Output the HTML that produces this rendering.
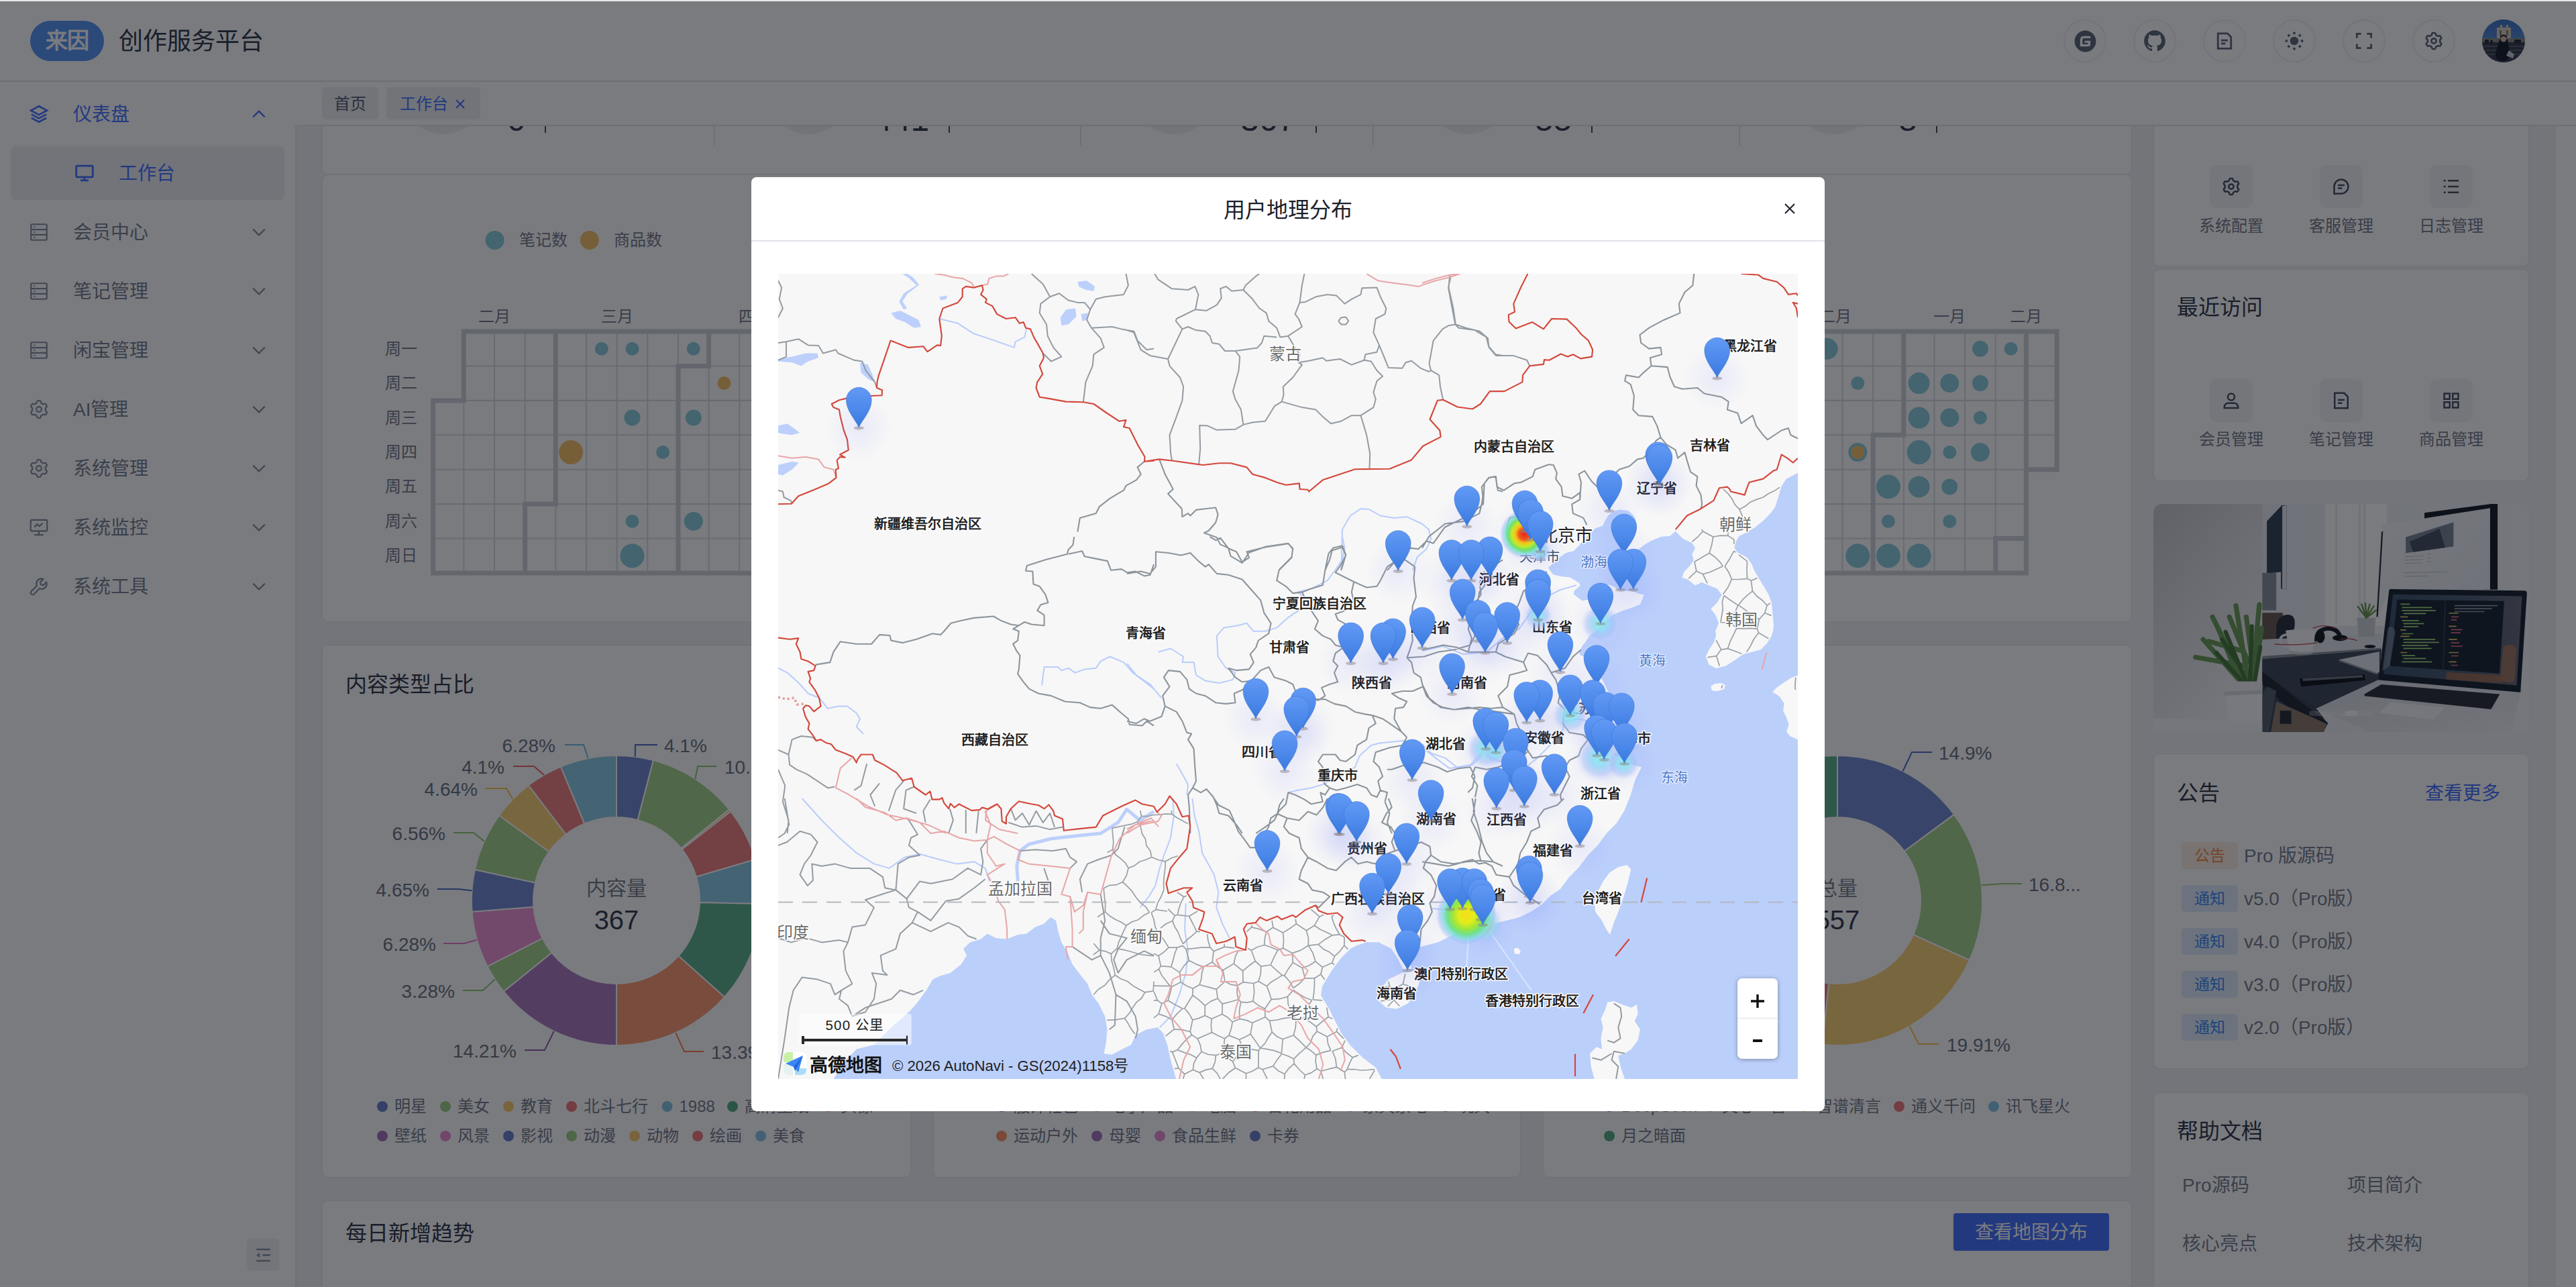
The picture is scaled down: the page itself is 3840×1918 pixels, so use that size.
<!DOCTYPE html><html lang="zh-CN"><head><meta charset="utf-8"><title>创作服务平台</title><style>

*{box-sizing:border-box;margin:0;padding:0}
html,body{width:3840px;height:1918px;overflow:hidden;background:#fff}
body{font-family:"Liberation Sans",sans-serif;position:relative;color:#1d2129}
.a{position:absolute}
.t{position:absolute;white-space:nowrap}
svg{position:absolute;overflow:visible}

</style></head><body>
<div class="a" style="left:0px;top:0px;width:3840px;height:1918px;background:#ffffff;"></div>
<div class="a" style="left:440px;top:186px;width:3370px;height:1732px;background:#f3f3f6;"></div>
<div class="a" style="left:481px;top:100px;width:2696px;height:159px;background:#ffffff;border-radius:8px;box-shadow:0 0 0 2px #ebecef"></div>
<div class="a" style="left:599px;top:76px;width:124px;height:124px;background:#f0f1f4;border-radius:50%"></div>
<div class="a" style="left:1143px;top:76px;width:124px;height:124px;background:#f0f1f4;border-radius:50%"></div>
<div class="a" style="left:1688px;top:76px;width:124px;height:124px;background:#f0f1f4;border-radius:50%"></div>
<div class="a" style="left:2126px;top:76px;width:124px;height:124px;background:#f0f1f4;border-radius:50%"></div>
<div class="a" style="left:2672px;top:76px;width:124px;height:124px;background:#f0f1f4;border-radius:50%"></div>
<div class="t" style="left:756px;top:153.0px;font-size:50px;line-height:50px;color:#363d4f;font-weight:500;">0</div>
<div class="a" style="left:812px;top:160px;width:2px;height:38px;background:#4a5262;"></div>
<div class="t" style="left:1302px;top:153.0px;font-size:50px;line-height:50px;color:#363d4f;font-weight:500;">441</div>
<div class="a" style="left:1414px;top:160px;width:2px;height:38px;background:#4a5262;"></div>
<div class="t" style="left:1849px;top:153.0px;font-size:50px;line-height:50px;color:#363d4f;font-weight:500;">367</div>
<div class="a" style="left:1961px;top:160px;width:2px;height:38px;background:#4a5262;"></div>
<div class="t" style="left:2288px;top:153.0px;font-size:50px;line-height:50px;color:#363d4f;font-weight:500;">55</div>
<div class="a" style="left:2372px;top:160px;width:2px;height:38px;background:#4a5262;"></div>
<div class="t" style="left:2830px;top:153.0px;font-size:50px;line-height:50px;color:#363d4f;font-weight:500;">8</div>
<div class="a" style="left:2886px;top:160px;width:2px;height:38px;background:#4a5262;"></div>
<div class="a" style="left:1064px;top:150px;width:2px;height:67px;background:#e6e7eb;"></div>
<div class="a" style="left:1610px;top:150px;width:2px;height:67px;background:#e6e7eb;"></div>
<div class="a" style="left:2046px;top:150px;width:2px;height:67px;background:#e6e7eb;"></div>
<div class="a" style="left:2592px;top:150px;width:2px;height:67px;background:#e6e7eb;"></div>
<div class="a" style="left:481px;top:261px;width:2696px;height:665px;background:#ffffff;border-radius:8px;box-shadow:0 0 0 2px #ebecef"></div>
<svg style="left:0;top:0" width="3840" height="1918" viewBox="0 0 3840 1918"><path d="M645.6 596.9h45.67v51.43h-45.67zM645.6 648.3h45.67v51.43h-45.67zM645.6 699.7h45.67v51.43h-45.67zM645.6 751.1h45.67v51.43h-45.67zM645.6 802.6h45.67v51.43h-45.67zM691.3 494.0h45.67v51.43h-45.67zM691.3 545.4h45.67v51.43h-45.67zM691.3 596.9h45.67v51.43h-45.67zM691.3 648.3h45.67v51.43h-45.67zM691.3 699.7h45.67v51.43h-45.67zM691.3 751.1h45.67v51.43h-45.67zM691.3 802.6h45.67v51.43h-45.67zM736.9 494.0h45.67v51.43h-45.67zM736.9 545.4h45.67v51.43h-45.67zM736.9 596.9h45.67v51.43h-45.67zM736.9 648.3h45.67v51.43h-45.67zM736.9 699.7h45.67v51.43h-45.67zM736.9 751.1h45.67v51.43h-45.67zM736.9 802.6h45.67v51.43h-45.67zM782.6 494.0h45.67v51.43h-45.67zM782.6 545.4h45.67v51.43h-45.67zM782.6 596.9h45.67v51.43h-45.67zM782.6 648.3h45.67v51.43h-45.67zM782.6 699.7h45.67v51.43h-45.67zM782.6 751.1h45.67v51.43h-45.67zM782.6 802.6h45.67v51.43h-45.67zM828.3 494.0h45.67v51.43h-45.67zM828.3 545.4h45.67v51.43h-45.67zM828.3 596.9h45.67v51.43h-45.67zM828.3 648.3h45.67v51.43h-45.67zM828.3 699.7h45.67v51.43h-45.67zM828.3 751.1h45.67v51.43h-45.67zM828.3 802.6h45.67v51.43h-45.67zM874.0 494.0h45.67v51.43h-45.67zM874.0 545.4h45.67v51.43h-45.67zM874.0 596.9h45.67v51.43h-45.67zM874.0 648.3h45.67v51.43h-45.67zM874.0 699.7h45.67v51.43h-45.67zM874.0 751.1h45.67v51.43h-45.67zM874.0 802.6h45.67v51.43h-45.67zM919.6 494.0h45.67v51.43h-45.67zM919.6 545.4h45.67v51.43h-45.67zM919.6 596.9h45.67v51.43h-45.67zM919.6 648.3h45.67v51.43h-45.67zM919.6 699.7h45.67v51.43h-45.67zM919.6 751.1h45.67v51.43h-45.67zM919.6 802.6h45.67v51.43h-45.67zM965.3 494.0h45.67v51.43h-45.67zM965.3 545.4h45.67v51.43h-45.67zM965.3 596.9h45.67v51.43h-45.67zM965.3 648.3h45.67v51.43h-45.67zM965.3 699.7h45.67v51.43h-45.67zM965.3 751.1h45.67v51.43h-45.67zM965.3 802.6h45.67v51.43h-45.67zM1011.0 494.0h45.67v51.43h-45.67zM1011.0 545.4h45.67v51.43h-45.67zM1011.0 596.9h45.67v51.43h-45.67zM1011.0 648.3h45.67v51.43h-45.67zM1011.0 699.7h45.67v51.43h-45.67zM1011.0 751.1h45.67v51.43h-45.67zM1011.0 802.6h45.67v51.43h-45.67zM1056.6 494.0h45.67v51.43h-45.67zM1056.6 545.4h45.67v51.43h-45.67zM1056.6 596.9h45.67v51.43h-45.67zM1056.6 648.3h45.67v51.43h-45.67zM1056.6 699.7h45.67v51.43h-45.67zM1056.6 751.1h45.67v51.43h-45.67zM1056.6 802.6h45.67v51.43h-45.67zM1102.3 494.0h45.67v51.43h-45.67zM1102.3 545.4h45.67v51.43h-45.67zM1102.3 596.9h45.67v51.43h-45.67zM1102.3 648.3h45.67v51.43h-45.67zM1102.3 699.7h45.67v51.43h-45.67zM1102.3 751.1h45.67v51.43h-45.67zM1102.3 802.6h45.67v51.43h-45.67zM1148.0 494.0h45.67v51.43h-45.67zM1148.0 545.4h45.67v51.43h-45.67zM1148.0 596.9h45.67v51.43h-45.67zM1148.0 648.3h45.67v51.43h-45.67zM1148.0 699.7h45.67v51.43h-45.67zM1148.0 751.1h45.67v51.43h-45.67zM1148.0 802.6h45.67v51.43h-45.67zM1193.6 494.0h45.67v51.43h-45.67zM1193.6 545.4h45.67v51.43h-45.67zM1193.6 596.9h45.67v51.43h-45.67zM1193.6 648.3h45.67v51.43h-45.67zM1193.6 699.7h45.67v51.43h-45.67zM1193.6 751.1h45.67v51.43h-45.67zM1193.6 802.6h45.67v51.43h-45.67zM1239.3 494.0h45.67v51.43h-45.67zM1239.3 545.4h45.67v51.43h-45.67zM1239.3 596.9h45.67v51.43h-45.67zM1239.3 648.3h45.67v51.43h-45.67zM1239.3 699.7h45.67v51.43h-45.67zM1239.3 751.1h45.67v51.43h-45.67zM1239.3 802.6h45.67v51.43h-45.67zM1285.0 494.0h45.67v51.43h-45.67zM1285.0 545.4h45.67v51.43h-45.67zM1285.0 596.9h45.67v51.43h-45.67zM1285.0 648.3h45.67v51.43h-45.67zM1285.0 699.7h45.67v51.43h-45.67zM1285.0 751.1h45.67v51.43h-45.67zM1285.0 802.6h45.67v51.43h-45.67zM1330.7 494.0h45.67v51.43h-45.67zM1330.7 545.4h45.67v51.43h-45.67zM1330.7 596.9h45.67v51.43h-45.67zM1330.7 648.3h45.67v51.43h-45.67zM1330.7 699.7h45.67v51.43h-45.67zM1330.7 751.1h45.67v51.43h-45.67zM1330.7 802.6h45.67v51.43h-45.67zM1376.3 494.0h45.67v51.43h-45.67zM1376.3 545.4h45.67v51.43h-45.67zM1376.3 596.9h45.67v51.43h-45.67zM1376.3 648.3h45.67v51.43h-45.67zM1376.3 699.7h45.67v51.43h-45.67zM1376.3 751.1h45.67v51.43h-45.67zM1376.3 802.6h45.67v51.43h-45.67zM1422.0 494.0h45.67v51.43h-45.67zM1422.0 545.4h45.67v51.43h-45.67zM1422.0 596.9h45.67v51.43h-45.67zM1422.0 648.3h45.67v51.43h-45.67zM1422.0 699.7h45.67v51.43h-45.67zM1422.0 751.1h45.67v51.43h-45.67zM1422.0 802.6h45.67v51.43h-45.67zM1467.7 494.0h45.67v51.43h-45.67zM1467.7 545.4h45.67v51.43h-45.67zM1467.7 596.9h45.67v51.43h-45.67zM1467.7 648.3h45.67v51.43h-45.67zM1467.7 699.7h45.67v51.43h-45.67zM1467.7 751.1h45.67v51.43h-45.67zM1467.7 802.6h45.67v51.43h-45.67zM1513.3 494.0h45.67v51.43h-45.67zM1513.3 545.4h45.67v51.43h-45.67zM1513.3 596.9h45.67v51.43h-45.67zM1513.3 648.3h45.67v51.43h-45.67zM1513.3 699.7h45.67v51.43h-45.67zM1513.3 751.1h45.67v51.43h-45.67zM1513.3 802.6h45.67v51.43h-45.67zM1559.0 494.0h45.67v51.43h-45.67zM1559.0 545.4h45.67v51.43h-45.67zM1559.0 596.9h45.67v51.43h-45.67zM1559.0 648.3h45.67v51.43h-45.67zM1559.0 699.7h45.67v51.43h-45.67zM1559.0 751.1h45.67v51.43h-45.67zM1559.0 802.6h45.67v51.43h-45.67zM1604.7 494.0h45.67v51.43h-45.67zM1604.7 545.4h45.67v51.43h-45.67zM1604.7 596.9h45.67v51.43h-45.67zM1604.7 648.3h45.67v51.43h-45.67zM1604.7 699.7h45.67v51.43h-45.67zM1604.7 751.1h45.67v51.43h-45.67zM1604.7 802.6h45.67v51.43h-45.67zM1650.3 494.0h45.67v51.43h-45.67zM1650.3 545.4h45.67v51.43h-45.67zM1650.3 596.9h45.67v51.43h-45.67zM1650.3 648.3h45.67v51.43h-45.67zM1650.3 699.7h45.67v51.43h-45.67zM1650.3 751.1h45.67v51.43h-45.67zM1650.3 802.6h45.67v51.43h-45.67zM1696.0 494.0h45.67v51.43h-45.67zM1696.0 545.4h45.67v51.43h-45.67zM1696.0 596.9h45.67v51.43h-45.67zM1696.0 648.3h45.67v51.43h-45.67zM1696.0 699.7h45.67v51.43h-45.67zM1696.0 751.1h45.67v51.43h-45.67zM1696.0 802.6h45.67v51.43h-45.67zM1741.7 494.0h45.67v51.43h-45.67zM1741.7 545.4h45.67v51.43h-45.67zM1741.7 596.9h45.67v51.43h-45.67zM1741.7 648.3h45.67v51.43h-45.67zM1741.7 699.7h45.67v51.43h-45.67zM1741.7 751.1h45.67v51.43h-45.67zM1741.7 802.6h45.67v51.43h-45.67zM1787.3 494.0h45.67v51.43h-45.67zM1787.3 545.4h45.67v51.43h-45.67zM1787.3 596.9h45.67v51.43h-45.67zM1787.3 648.3h45.67v51.43h-45.67zM1787.3 699.7h45.67v51.43h-45.67zM1787.3 751.1h45.67v51.43h-45.67zM1787.3 802.6h45.67v51.43h-45.67zM1833.0 494.0h45.67v51.43h-45.67zM1833.0 545.4h45.67v51.43h-45.67zM1833.0 596.9h45.67v51.43h-45.67zM1833.0 648.3h45.67v51.43h-45.67zM1833.0 699.7h45.67v51.43h-45.67zM1833.0 751.1h45.67v51.43h-45.67zM1833.0 802.6h45.67v51.43h-45.67zM1878.7 494.0h45.67v51.43h-45.67zM1878.7 545.4h45.67v51.43h-45.67zM1878.7 596.9h45.67v51.43h-45.67zM1878.7 648.3h45.67v51.43h-45.67zM1878.7 699.7h45.67v51.43h-45.67zM1878.7 751.1h45.67v51.43h-45.67zM1878.7 802.6h45.67v51.43h-45.67zM1924.4 494.0h45.67v51.43h-45.67zM1924.4 545.4h45.67v51.43h-45.67zM1924.4 596.9h45.67v51.43h-45.67zM1924.4 648.3h45.67v51.43h-45.67zM1924.4 699.7h45.67v51.43h-45.67zM1924.4 751.1h45.67v51.43h-45.67zM1924.4 802.6h45.67v51.43h-45.67zM1970.0 494.0h45.67v51.43h-45.67zM1970.0 545.4h45.67v51.43h-45.67zM1970.0 596.9h45.67v51.43h-45.67zM1970.0 648.3h45.67v51.43h-45.67zM1970.0 699.7h45.67v51.43h-45.67zM1970.0 751.1h45.67v51.43h-45.67zM1970.0 802.6h45.67v51.43h-45.67zM2015.7 494.0h45.67v51.43h-45.67zM2015.7 545.4h45.67v51.43h-45.67zM2015.7 596.9h45.67v51.43h-45.67zM2015.7 648.3h45.67v51.43h-45.67zM2015.7 699.7h45.67v51.43h-45.67zM2015.7 751.1h45.67v51.43h-45.67zM2015.7 802.6h45.67v51.43h-45.67zM2061.4 494.0h45.67v51.43h-45.67zM2061.4 545.4h45.67v51.43h-45.67zM2061.4 596.9h45.67v51.43h-45.67zM2061.4 648.3h45.67v51.43h-45.67zM2061.4 699.7h45.67v51.43h-45.67zM2061.4 751.1h45.67v51.43h-45.67zM2061.4 802.6h45.67v51.43h-45.67zM2107.0 494.0h45.67v51.43h-45.67zM2107.0 545.4h45.67v51.43h-45.67zM2107.0 596.9h45.67v51.43h-45.67zM2107.0 648.3h45.67v51.43h-45.67zM2107.0 699.7h45.67v51.43h-45.67zM2107.0 751.1h45.67v51.43h-45.67zM2107.0 802.6h45.67v51.43h-45.67zM2152.7 494.0h45.67v51.43h-45.67zM2152.7 545.4h45.67v51.43h-45.67zM2152.7 596.9h45.67v51.43h-45.67zM2152.7 648.3h45.67v51.43h-45.67zM2152.7 699.7h45.67v51.43h-45.67zM2152.7 751.1h45.67v51.43h-45.67zM2152.7 802.6h45.67v51.43h-45.67zM2198.4 494.0h45.67v51.43h-45.67zM2198.4 545.4h45.67v51.43h-45.67zM2198.4 596.9h45.67v51.43h-45.67zM2198.4 648.3h45.67v51.43h-45.67zM2198.4 699.7h45.67v51.43h-45.67zM2198.4 751.1h45.67v51.43h-45.67zM2198.4 802.6h45.67v51.43h-45.67zM2244.1 494.0h45.67v51.43h-45.67zM2244.1 545.4h45.67v51.43h-45.67zM2244.1 596.9h45.67v51.43h-45.67zM2244.1 648.3h45.67v51.43h-45.67zM2244.1 699.7h45.67v51.43h-45.67zM2244.1 751.1h45.67v51.43h-45.67zM2244.1 802.6h45.67v51.43h-45.67zM2289.7 494.0h45.67v51.43h-45.67zM2289.7 545.4h45.67v51.43h-45.67zM2289.7 596.9h45.67v51.43h-45.67zM2289.7 648.3h45.67v51.43h-45.67zM2289.7 699.7h45.67v51.43h-45.67zM2289.7 751.1h45.67v51.43h-45.67zM2289.7 802.6h45.67v51.43h-45.67zM2335.4 494.0h45.67v51.43h-45.67zM2335.4 545.4h45.67v51.43h-45.67zM2335.4 596.9h45.67v51.43h-45.67zM2335.4 648.3h45.67v51.43h-45.67zM2335.4 699.7h45.67v51.43h-45.67zM2335.4 751.1h45.67v51.43h-45.67zM2335.4 802.6h45.67v51.43h-45.67zM2381.1 494.0h45.67v51.43h-45.67zM2381.1 545.4h45.67v51.43h-45.67zM2381.1 596.9h45.67v51.43h-45.67zM2381.1 648.3h45.67v51.43h-45.67zM2381.1 699.7h45.67v51.43h-45.67zM2381.1 751.1h45.67v51.43h-45.67zM2381.1 802.6h45.67v51.43h-45.67zM2426.7 494.0h45.67v51.43h-45.67zM2426.7 545.4h45.67v51.43h-45.67zM2426.7 596.9h45.67v51.43h-45.67zM2426.7 648.3h45.67v51.43h-45.67zM2426.7 699.7h45.67v51.43h-45.67zM2426.7 751.1h45.67v51.43h-45.67zM2426.7 802.6h45.67v51.43h-45.67zM2472.4 494.0h45.67v51.43h-45.67zM2472.4 545.4h45.67v51.43h-45.67zM2472.4 596.9h45.67v51.43h-45.67zM2472.4 648.3h45.67v51.43h-45.67zM2472.4 699.7h45.67v51.43h-45.67zM2472.4 751.1h45.67v51.43h-45.67zM2472.4 802.6h45.67v51.43h-45.67zM2518.1 494.0h45.67v51.43h-45.67zM2518.1 545.4h45.67v51.43h-45.67zM2518.1 596.9h45.67v51.43h-45.67zM2518.1 648.3h45.67v51.43h-45.67zM2518.1 699.7h45.67v51.43h-45.67zM2518.1 751.1h45.67v51.43h-45.67zM2518.1 802.6h45.67v51.43h-45.67zM2563.7 494.0h45.67v51.43h-45.67zM2563.7 545.4h45.67v51.43h-45.67zM2563.7 596.9h45.67v51.43h-45.67zM2563.7 648.3h45.67v51.43h-45.67zM2563.7 699.7h45.67v51.43h-45.67zM2563.7 751.1h45.67v51.43h-45.67zM2563.7 802.6h45.67v51.43h-45.67zM2609.4 494.0h45.67v51.43h-45.67zM2609.4 545.4h45.67v51.43h-45.67zM2609.4 596.9h45.67v51.43h-45.67zM2609.4 648.3h45.67v51.43h-45.67zM2609.4 699.7h45.67v51.43h-45.67zM2609.4 751.1h45.67v51.43h-45.67zM2609.4 802.6h45.67v51.43h-45.67zM2655.1 494.0h45.67v51.43h-45.67zM2655.1 545.4h45.67v51.43h-45.67zM2655.1 596.9h45.67v51.43h-45.67zM2655.1 648.3h45.67v51.43h-45.67zM2655.1 699.7h45.67v51.43h-45.67zM2655.1 751.1h45.67v51.43h-45.67zM2655.1 802.6h45.67v51.43h-45.67zM2700.8 494.0h45.67v51.43h-45.67zM2700.8 545.4h45.67v51.43h-45.67zM2700.8 596.9h45.67v51.43h-45.67zM2700.8 648.3h45.67v51.43h-45.67zM2700.8 699.7h45.67v51.43h-45.67zM2700.8 751.1h45.67v51.43h-45.67zM2700.8 802.6h45.67v51.43h-45.67zM2746.4 494.0h45.67v51.43h-45.67zM2746.4 545.4h45.67v51.43h-45.67zM2746.4 596.9h45.67v51.43h-45.67zM2746.4 648.3h45.67v51.43h-45.67zM2746.4 699.7h45.67v51.43h-45.67zM2746.4 751.1h45.67v51.43h-45.67zM2746.4 802.6h45.67v51.43h-45.67zM2792.1 494.0h45.67v51.43h-45.67zM2792.1 545.4h45.67v51.43h-45.67zM2792.1 596.9h45.67v51.43h-45.67zM2792.1 648.3h45.67v51.43h-45.67zM2792.1 699.7h45.67v51.43h-45.67zM2792.1 751.1h45.67v51.43h-45.67zM2792.1 802.6h45.67v51.43h-45.67zM2837.8 494.0h45.67v51.43h-45.67zM2837.8 545.4h45.67v51.43h-45.67zM2837.8 596.9h45.67v51.43h-45.67zM2837.8 648.3h45.67v51.43h-45.67zM2837.8 699.7h45.67v51.43h-45.67zM2837.8 751.1h45.67v51.43h-45.67zM2837.8 802.6h45.67v51.43h-45.67zM2883.4 494.0h45.67v51.43h-45.67zM2883.4 545.4h45.67v51.43h-45.67zM2883.4 596.9h45.67v51.43h-45.67zM2883.4 648.3h45.67v51.43h-45.67zM2883.4 699.7h45.67v51.43h-45.67zM2883.4 751.1h45.67v51.43h-45.67zM2883.4 802.6h45.67v51.43h-45.67zM2929.1 494.0h45.67v51.43h-45.67zM2929.1 545.4h45.67v51.43h-45.67zM2929.1 596.9h45.67v51.43h-45.67zM2929.1 648.3h45.67v51.43h-45.67zM2929.1 699.7h45.67v51.43h-45.67zM2929.1 751.1h45.67v51.43h-45.67zM2929.1 802.6h45.67v51.43h-45.67zM2974.8 494.0h45.67v51.43h-45.67zM2974.8 545.4h45.67v51.43h-45.67zM2974.8 596.9h45.67v51.43h-45.67zM2974.8 648.3h45.67v51.43h-45.67zM2974.8 699.7h45.67v51.43h-45.67zM2974.8 751.1h45.67v51.43h-45.67zM2974.8 802.6h45.67v51.43h-45.67zM3020.4 494.0h45.67v51.43h-45.67zM3020.4 545.4h45.67v51.43h-45.67zM3020.4 596.9h45.67v51.43h-45.67zM3020.4 648.3h45.67v51.43h-45.67z" fill="none" stroke="#dcdee3" stroke-width="2"/><path d="M691.3 494.0V596.9H645.6V854.0M828.3 494.0V751.1H782.6V854.0M1056.6 494.0V545.4H1011.0V854.0M1239.3 494.0V648.3H1193.6V854.0M1422.0 494.0V802.6H1376.3V854.0M1650.3 494.0V545.4H1604.7V854.0M1833.0 494.0V699.7H1787.3V854.0M2015.7 494.0V854.0M2244.1 494.0V596.9H2198.4V854.0M2426.7 494.0V751.1H2381.1V854.0M2609.4 494.0V854.0M2837.8 494.0V648.3H2792.1V854.0M3020.4 494.0V802.6H2974.8V854.0M3066.1 494.0V699.7H3020.4V854.0M691.3 494.0H3066.1M645.6 854.0H3020.4" fill="none" stroke="#d0d3d9" stroke-width="7" stroke-linecap="square" stroke-linejoin="miter"/><circle cx="896.8" cy="519.7" r="10.0" fill="#8fd0de"/><circle cx="942.5" cy="519.7" r="10.0" fill="#8fd0de"/><circle cx="1033.8" cy="519.7" r="10.0" fill="#8fd0de"/><circle cx="1079.5" cy="571.1" r="10.0" fill="#f7c46c"/><circle cx="942.5" cy="622.6" r="12.0" fill="#8fd0de"/><circle cx="1033.8" cy="622.6" r="12.0" fill="#8fd0de"/><circle cx="851.1" cy="674.0" r="18.0" fill="#f7c46c"/><circle cx="988.1" cy="674.0" r="10.0" fill="#8fd0de"/><circle cx="942.5" cy="776.9" r="10.0" fill="#8fd0de"/><circle cx="1033.8" cy="776.9" r="14.0" fill="#8fd0de"/><circle cx="942.5" cy="828.3" r="18.0" fill="#8fd0de"/><circle cx="2723.6" cy="519.7" r="16.0" fill="#8fd0de"/><circle cx="2951.9" cy="519.7" r="12.0" fill="#8fd0de"/><circle cx="2997.6" cy="519.7" r="10.0" fill="#8fd0de"/><circle cx="2769.3" cy="571.1" r="10.0" fill="#8fd0de"/><circle cx="2860.6" cy="571.1" r="16.0" fill="#8fd0de"/><circle cx="2906.3" cy="571.1" r="14.0" fill="#8fd0de"/><circle cx="2951.9" cy="571.1" r="12.0" fill="#8fd0de"/><circle cx="2860.6" cy="622.6" r="16.0" fill="#8fd0de"/><circle cx="2906.3" cy="622.6" r="14.0" fill="#8fd0de"/><circle cx="2951.9" cy="622.6" r="10.0" fill="#8fd0de"/><circle cx="2769.3" cy="674.0" r="14.0" fill="#8fd0de"/><circle cx="2769.3" cy="674.0" r="10.0" fill="#f7c46c"/><circle cx="2860.6" cy="674.0" r="18.0" fill="#8fd0de"/><circle cx="2906.3" cy="674.0" r="10.0" fill="#8fd0de"/><circle cx="2951.9" cy="674.0" r="14.0" fill="#8fd0de"/><circle cx="2814.9" cy="725.4" r="18.0" fill="#8fd0de"/><circle cx="2860.6" cy="725.4" r="16.0" fill="#8fd0de"/><circle cx="2906.3" cy="725.4" r="12.0" fill="#8fd0de"/><circle cx="2814.9" cy="776.9" r="10.0" fill="#8fd0de"/><circle cx="2906.3" cy="776.9" r="10.0" fill="#8fd0de"/><circle cx="2769.3" cy="828.3" r="18.0" fill="#8fd0de"/><circle cx="2814.9" cy="828.3" r="18.0" fill="#8fd0de"/><circle cx="2860.6" cy="828.3" r="18.0" fill="#8fd0de"/><circle cx="2677.9" cy="622.6" r="14.0" fill="#8fd0de"/><circle cx="2677.9" cy="776.9" r="12.0" fill="#8fd0de"/><circle cx="737.6" cy="358" r="14" fill="#8fd0de"/><circle cx="878.8" cy="358" r="14" fill="#f7c46c"/></svg><div class="t" style="left:774px;top:341.0px;font-size:24px;line-height:34px;color:#77808e">笔记数</div><div class="t" style="left:915px;top:341.0px;font-size:24px;line-height:34px;color:#77808e">商品数</div><div class="t" style="right:3218px;top:502.71500000000003px;font-size:24px;line-height:34px;color:#77808e">周一</div><div class="t" style="right:3218px;top:554.145px;font-size:24px;line-height:34px;color:#77808e">周二</div><div class="t" style="right:3218px;top:605.575px;font-size:24px;line-height:34px;color:#77808e">周三</div><div class="t" style="right:3218px;top:657.005px;font-size:24px;line-height:34px;color:#77808e">周四</div><div class="t" style="right:3218px;top:708.435px;font-size:24px;line-height:34px;color:#77808e">周五</div><div class="t" style="right:3218px;top:759.865px;font-size:24px;line-height:34px;color:#77808e">周六</div><div class="t" style="right:3218px;top:811.2950000000001px;font-size:24px;line-height:34px;color:#77808e">周日</div><div class="t" style="left:237px;width:1000px;text-align:center;top:455.0px;font-size:24px;line-height:34px;color:#77808e">二月</div><div class="t" style="left:420px;width:1000px;text-align:center;top:455.0px;font-size:24px;line-height:34px;color:#77808e">三月</div><div class="t" style="left:625px;width:1000px;text-align:center;top:455.0px;font-size:24px;line-height:34px;color:#77808e">四月</div><div class="t" style="left:808px;width:1000px;text-align:center;top:455.0px;font-size:24px;line-height:34px;color:#77808e">五月</div><div class="t" style="left:1013px;width:1000px;text-align:center;top:455.0px;font-size:24px;line-height:34px;color:#77808e">六月</div><div class="t" style="left:1219px;width:1000px;text-align:center;top:455.0px;font-size:24px;line-height:34px;color:#77808e">七月</div><div class="t" style="left:1402px;width:1000px;text-align:center;top:455.0px;font-size:24px;line-height:34px;color:#77808e">八月</div><div class="t" style="left:1630px;width:1000px;text-align:center;top:455.0px;font-size:24px;line-height:34px;color:#77808e">九月</div><div class="t" style="left:1813px;width:1000px;text-align:center;top:455.0px;font-size:24px;line-height:34px;color:#77808e">十月</div><div class="t" style="left:1995px;width:1000px;text-align:center;top:455.0px;font-size:24px;line-height:34px;color:#77808e">十一月</div><div class="t" style="left:2224px;width:1000px;text-align:center;top:455.0px;font-size:24px;line-height:34px;color:#77808e">十二月</div><div class="t" style="left:2406px;width:1000px;text-align:center;top:455.0px;font-size:24px;line-height:34px;color:#77808e">一月</div><div class="t" style="left:2520px;width:1000px;text-align:center;top:455.0px;font-size:24px;line-height:34px;color:#77808e">二月</div>
<div class="a" style="left:481px;top:962px;width:876px;height:792px;background:#ffffff;border-radius:8px;box-shadow:0 0 0 2px #ebecef"></div>
<div class="a" style="left:1392px;top:962px;width:874px;height:792px;background:#ffffff;border-radius:8px;box-shadow:0 0 0 2px #ebecef"></div>
<div class="a" style="left:2301px;top:962px;width:876px;height:792px;background:#ffffff;border-radius:8px;box-shadow:0 0 0 2px #ebecef"></div>
<svg style="left:0;top:0" width="3840" height="1918" viewBox="0 0 3840 1918"><path d="M919.0 1126.0A216 216 0 0 1 974.0 1133.1L950.6 1222.1A124 124 0 0 0 919.0 1218.0Z" fill="#5470c6" fill-opacity=".8" stroke="#fff" stroke-width="2" stroke-linejoin="round"/><path d="M974.0 1133.1A216 216 0 0 1 1087.1 1206.4L1015.5 1264.2A124 124 0 0 0 950.6 1222.1Z" fill="#91cc75" fill-opacity=".8" stroke="#fff" stroke-width="2" stroke-linejoin="round"/><path d="M1087.1 1206.4A216 216 0 0 1 1089.4 1209.3L1016.8 1265.8A124 124 0 0 0 1015.5 1264.2Z" fill="#fac858" fill-opacity=".8" stroke="#fff" stroke-width="2" stroke-linejoin="round"/><path d="M1089.4 1209.3A216 216 0 0 1 1126.1 1280.7L1037.9 1306.8A124 124 0 0 0 1016.8 1265.8Z" fill="#ee6666" fill-opacity=".8" stroke="#fff" stroke-width="2" stroke-linejoin="round"/><path d="M1126.1 1280.7A216 216 0 0 1 1134.9 1347.0L1043.0 1344.9A124 124 0 0 0 1037.9 1306.8Z" fill="#73c0de" fill-opacity=".8" stroke="#fff" stroke-width="2" stroke-linejoin="round"/><path d="M1134.9 1347.0A216 216 0 0 1 1080.0 1486.0L1011.4 1424.6A124 124 0 0 0 1043.0 1344.9Z" fill="#3ba272" fill-opacity=".8" stroke="#fff" stroke-width="2" stroke-linejoin="round"/><path d="M1080.0 1486.0A216 216 0 0 1 919.0 1558.0L919.0 1466.0A124 124 0 0 0 1011.4 1424.6Z" fill="#fc8452" fill-opacity=".8" stroke="#fff" stroke-width="2" stroke-linejoin="round"/><path d="M919.0 1558.0A216 216 0 0 1 750.8 1477.5L822.4 1419.8A124 124 0 0 0 919.0 1466.0Z" fill="#9a60b4" fill-opacity=".8" stroke="#fff" stroke-width="2" stroke-linejoin="round"/><path d="M750.8 1477.5A216 216 0 0 1 726.6 1440.2L808.6 1398.4A124 124 0 0 0 822.4 1419.8Z" fill="#91cc75" fill-opacity=".8" stroke="#fff" stroke-width="2" stroke-linejoin="round"/><path d="M726.6 1440.2A216 216 0 0 1 703.6 1358.7L795.4 1351.6A124 124 0 0 0 808.6 1398.4Z" fill="#ea7ccc" fill-opacity=".8" stroke="#fff" stroke-width="2" stroke-linejoin="round"/><path d="M703.6 1358.7A216 216 0 0 1 708.0 1295.9L797.9 1315.6A124 124 0 0 0 795.4 1351.6Z" fill="#5470c6" fill-opacity=".8" stroke="#fff" stroke-width="2" stroke-linejoin="round"/><path d="M708.0 1295.9A216 216 0 0 1 744.1 1215.3L818.6 1269.2A124 124 0 0 0 797.9 1315.6Z" fill="#91cc75" fill-opacity=".8" stroke="#fff" stroke-width="2" stroke-linejoin="round"/><path d="M744.1 1215.3A216 216 0 0 1 787.9 1170.3L843.7 1243.5A124 124 0 0 0 818.6 1269.2Z" fill="#fac858" fill-opacity=".8" stroke="#fff" stroke-width="2" stroke-linejoin="round"/><path d="M787.9 1170.3A216 216 0 0 1 836.0 1142.6L871.3 1227.5A124 124 0 0 0 843.7 1243.5Z" fill="#ee6666" fill-opacity=".8" stroke="#fff" stroke-width="2" stroke-linejoin="round"/><path d="M836.0 1142.6A216 216 0 0 1 919.0 1126.0L919.0 1218.0A124 124 0 0 0 871.3 1227.5Z" fill="#73c0de" fill-opacity=".8" stroke="#fff" stroke-width="2" stroke-linejoin="round"/><path d="M946.7 1127.8L947 1110H980" fill="none" stroke="#5470c6" stroke-width="2"/><path d="M1036.5 1160.7L1040 1142H1068" fill="none" stroke="#91cc75" stroke-width="2"/><path d="M876.7 1130.2L870 1110H842" fill="none" stroke="#73c0de" stroke-width="2"/><path d="M811.0 1154.9L796 1142H765" fill="none" stroke="#ee6666" stroke-width="2"/><path d="M764.4 1191.2L755 1175H724" fill="none" stroke="#fac858" stroke-width="2"/><path d="M721.9 1253.7L706 1241H676" fill="none" stroke="#91cc75" stroke-width="2"/><path d="M703.5 1327.2L684 1325H652" fill="none" stroke="#5470c6" stroke-width="2"/><path d="M711.1 1400.6L692 1406H661" fill="none" stroke="#ea7ccc" stroke-width="2"/><path d="M737.7 1459.5L720 1476H690" fill="none" stroke="#91cc75" stroke-width="2"/><path d="M825.7 1536.8L812 1565H782" fill="none" stroke="#9a60b4" stroke-width="2"/><path d="M1007.2 1539.2L1020 1567H1049" fill="none" stroke="#fc8452" stroke-width="2"/><path d="M2739.0 1126.0A216 216 0 0 1 2912.9 1213.9L2838.9 1268.5A124 124 0 0 0 2739.0 1218.0Z" fill="#5470c6" fill-opacity=".8" stroke="#fff" stroke-width="2" stroke-linejoin="round"/><path d="M2912.9 1213.9A216 216 0 0 1 2935.9 1430.9L2852.0 1393.0A124 124 0 0 0 2838.9 1268.5Z" fill="#91cc75" fill-opacity=".8" stroke="#fff" stroke-width="2" stroke-linejoin="round"/><path d="M2935.9 1430.9A216 216 0 0 1 2716.5 1556.8L2726.1 1465.3A124 124 0 0 0 2852.0 1393.0Z" fill="#fac858" fill-opacity=".8" stroke="#fff" stroke-width="2" stroke-linejoin="round"/><path d="M2716.5 1556.8A216 216 0 0 1 2704.4 1555.2L2719.1 1464.4A124 124 0 0 0 2726.1 1465.3Z" fill="#ee6666" fill-opacity=".8" stroke="#fff" stroke-width="2" stroke-linejoin="round"/><path d="M2704.4 1555.2A216 216 0 0 1 2524.8 1369.6L2616.0 1357.9A124 124 0 0 0 2719.1 1464.4Z" fill="#73c0de" fill-opacity=".8" stroke="#fff" stroke-width="2" stroke-linejoin="round"/><path d="M2524.8 1369.6A216 216 0 0 1 2739.0 1126.0L2739.0 1218.0A124 124 0 0 0 2616.0 1357.9Z" fill="#3ba272" fill-opacity=".8" stroke="#fff" stroke-width="2" stroke-linejoin="round"/><path d="M2836.5 1149.2L2850 1121H2880" fill="none" stroke="#5470c6" stroke-width="2"/><path d="M2953.8 1319.3L2985 1317H3014" fill="none" stroke="#91cc75" stroke-width="2"/><path d="M2846.5 1529.3L2860 1556H2890" fill="none" stroke="#fac858" stroke-width="2"/><path d="M1829.0 1126.0A216 216 0 0 1 2034.4 1408.7L1946.9 1380.3A124 124 0 0 0 1829.0 1218.0Z" fill="#5470c6" fill-opacity=".8" stroke="#fff" stroke-width="2" stroke-linejoin="round"/><path d="M2034.4 1408.7A216 216 0 0 1 1829.0 1558.0L1829.0 1466.0A124 124 0 0 0 1946.9 1380.3Z" fill="#91cc75" fill-opacity=".8" stroke="#fff" stroke-width="2" stroke-linejoin="round"/><path d="M1829.0 1558.0A216 216 0 0 1 1654.3 1469.0L1728.7 1414.9A124 124 0 0 0 1829.0 1466.0Z" fill="#fac858" fill-opacity=".8" stroke="#fff" stroke-width="2" stroke-linejoin="round"/><path d="M1654.3 1469.0A216 216 0 0 1 1613.0 1342.0L1705.0 1342.0A124 124 0 0 0 1728.7 1414.9Z" fill="#ee6666" fill-opacity=".8" stroke="#fff" stroke-width="2" stroke-linejoin="round"/><path d="M1613.0 1342.0A216 216 0 0 1 1654.3 1215.0L1728.7 1269.1A124 124 0 0 0 1705.0 1342.0Z" fill="#73c0de" fill-opacity=".8" stroke="#fff" stroke-width="2" stroke-linejoin="round"/><path d="M1654.3 1215.0A216 216 0 0 1 1829.0 1126.0L1829.0 1218.0A124 124 0 0 0 1728.7 1269.1Z" fill="#3ba272" fill-opacity=".8" stroke="#fff" stroke-width="2" stroke-linejoin="round"/><circle cx="570" cy="1649" r="8" fill="#5470c6" fill-opacity=".85"/><circle cx="664" cy="1649" r="8" fill="#91cc75" fill-opacity=".85"/><circle cx="758" cy="1649" r="8" fill="#fac858" fill-opacity=".85"/><circle cx="852" cy="1649" r="8" fill="#ee6666" fill-opacity=".85"/><circle cx="994.5" cy="1649" r="8" fill="#73c0de" fill-opacity=".85"/><circle cx="1092" cy="1649" r="8" fill="#3ba272" fill-opacity=".85"/><circle cx="1235" cy="1649" r="8" fill="#fc8452" fill-opacity=".85"/><circle cx="570" cy="1693" r="8" fill="#9a60b4" fill-opacity=".85"/><circle cx="664" cy="1693" r="8" fill="#ea7ccc" fill-opacity=".85"/><circle cx="758" cy="1693" r="8" fill="#5470c6" fill-opacity=".85"/><circle cx="852" cy="1693" r="8" fill="#91cc75" fill-opacity=".85"/><circle cx="946" cy="1693" r="8" fill="#fac858" fill-opacity=".85"/><circle cx="1040" cy="1693" r="8" fill="#ee6666" fill-opacity=".85"/><circle cx="1134" cy="1693" r="8" fill="#73c0de" fill-opacity=".85"/><circle cx="1493" cy="1649" r="8" fill="#5470c6" fill-opacity=".85"/><circle cx="1635" cy="1649" r="8" fill="#91cc75" fill-opacity=".85"/><circle cx="1777" cy="1649" r="8" fill="#fac858" fill-opacity=".85"/><circle cx="1871" cy="1649" r="8" fill="#ee6666" fill-opacity=".85"/><circle cx="2013" cy="1649" r="8" fill="#73c0de" fill-opacity=".85"/><circle cx="2155" cy="1649" r="8" fill="#3ba272" fill-opacity=".85"/><circle cx="1493" cy="1693" r="8" fill="#fc8452" fill-opacity=".85"/><circle cx="1635" cy="1693" r="8" fill="#9a60b4" fill-opacity=".85"/><circle cx="1729" cy="1693" r="8" fill="#ea7ccc" fill-opacity=".85"/><circle cx="1871" cy="1693" r="8" fill="#5470c6" fill-opacity=".85"/><circle cx="2399" cy="1649" r="8" fill="#5470c6" fill-opacity=".85"/><circle cx="2549" cy="1649" r="8" fill="#91cc75" fill-opacity=".85"/><circle cx="2690" cy="1649" r="8" fill="#fac858" fill-opacity=".85"/><circle cx="2831" cy="1649" r="8" fill="#ee6666" fill-opacity=".85"/><circle cx="2972" cy="1649" r="8" fill="#73c0de" fill-opacity=".85"/><circle cx="2399" cy="1693" r="8" fill="#3ba272" fill-opacity=".85"/></svg><div class="t" style="left:990px;top:1091.5px;font-size:28px;line-height:39px;color:#6e7785;font-weight:400">4.1%</div><div class="t" style="left:1080px;top:1123.5px;font-size:28px;line-height:39px;color:#6e7785;font-weight:400">10.1%</div><div class="t" style="right:3012px;top:1091.5px;font-size:28px;line-height:39px;color:#6e7785;font-weight:400">6.28%</div><div class="t" style="right:3088px;top:1123.5px;font-size:28px;line-height:39px;color:#6e7785;font-weight:400">4.1%</div><div class="t" style="right:3128px;top:1156.5px;font-size:28px;line-height:39px;color:#6e7785;font-weight:400">4.64%</div><div class="t" style="right:3176px;top:1222.5px;font-size:28px;line-height:39px;color:#6e7785;font-weight:400">6.56%</div><div class="t" style="right:3200px;top:1306.5px;font-size:28px;line-height:39px;color:#6e7785;font-weight:400">4.65%</div><div class="t" style="right:3190px;top:1387.5px;font-size:28px;line-height:39px;color:#6e7785;font-weight:400">6.28%</div><div class="t" style="right:3162px;top:1457.5px;font-size:28px;line-height:39px;color:#6e7785;font-weight:400">3.28%</div><div class="t" style="right:3070px;top:1546.5px;font-size:28px;line-height:39px;color:#6e7785;font-weight:400">14.21%</div><div class="t" style="left:1060px;top:1548.5px;font-size:28px;line-height:39px;color:#6e7785;font-weight:400">13.39%</div><div class="t" style="left:2890px;top:1102.5px;font-size:28px;line-height:39px;color:#6e7785;font-weight:400">14.9%</div><div class="t" style="left:3024px;top:1298.5px;font-size:28px;line-height:39px;color:#6e7785;font-weight:400">16.8...</div><div class="t" style="left:2902px;top:1537.5px;font-size:28px;line-height:39px;color:#6e7785;font-weight:400">19.91%</div><div class="t" style="left:588px;top:1632.0px;font-size:24px;line-height:34px;color:#77808e;font-weight:400">明星</div><div class="t" style="left:682px;top:1632.0px;font-size:24px;line-height:34px;color:#77808e;font-weight:400">美女</div><div class="t" style="left:776px;top:1632.0px;font-size:24px;line-height:34px;color:#77808e;font-weight:400">教育</div><div class="t" style="left:870px;top:1632.0px;font-size:24px;line-height:34px;color:#77808e;font-weight:400">北斗七行</div><div class="t" style="left:1012.5px;top:1632.0px;font-size:24px;line-height:34px;color:#77808e;font-weight:400">1988</div><div class="t" style="left:1110px;top:1632.0px;font-size:24px;line-height:34px;color:#77808e;font-weight:400">高清壁纸</div><div class="t" style="left:1253px;top:1632.0px;font-size:24px;line-height:34px;color:#77808e;font-weight:400">头像</div><div class="t" style="left:588px;top:1676.0px;font-size:24px;line-height:34px;color:#77808e;font-weight:400">壁纸</div><div class="t" style="left:682px;top:1676.0px;font-size:24px;line-height:34px;color:#77808e;font-weight:400">风景</div><div class="t" style="left:776px;top:1676.0px;font-size:24px;line-height:34px;color:#77808e;font-weight:400">影视</div><div class="t" style="left:870px;top:1676.0px;font-size:24px;line-height:34px;color:#77808e;font-weight:400">动漫</div><div class="t" style="left:964px;top:1676.0px;font-size:24px;line-height:34px;color:#77808e;font-weight:400">动物</div><div class="t" style="left:1058px;top:1676.0px;font-size:24px;line-height:34px;color:#77808e;font-weight:400">绘画</div><div class="t" style="left:1152px;top:1676.0px;font-size:24px;line-height:34px;color:#77808e;font-weight:400">美食</div><div class="t" style="left:1511px;top:1632.0px;font-size:24px;line-height:34px;color:#77808e;font-weight:400">服饰鞋包</div><div class="t" style="left:1653px;top:1632.0px;font-size:24px;line-height:34px;color:#77808e;font-weight:400">电子产品</div><div class="t" style="left:1795px;top:1632.0px;font-size:24px;line-height:34px;color:#77808e;font-weight:400">电脑</div><div class="t" style="left:1889px;top:1632.0px;font-size:24px;line-height:34px;color:#77808e;font-weight:400">日化用品</div><div class="t" style="left:2031px;top:1632.0px;font-size:24px;line-height:34px;color:#77808e;font-weight:400">家具家电</div><div class="t" style="left:2173px;top:1632.0px;font-size:24px;line-height:34px;color:#77808e;font-weight:400">玩具</div><div class="t" style="left:1511px;top:1676.0px;font-size:24px;line-height:34px;color:#77808e;font-weight:400">运动户外</div><div class="t" style="left:1653px;top:1676.0px;font-size:24px;line-height:34px;color:#77808e;font-weight:400">母婴</div><div class="t" style="left:1747px;top:1676.0px;font-size:24px;line-height:34px;color:#77808e;font-weight:400">食品生鲜</div><div class="t" style="left:1889px;top:1676.0px;font-size:24px;line-height:34px;color:#77808e;font-weight:400">卡券</div><div class="t" style="left:2417px;top:1632.0px;font-size:24px;line-height:34px;color:#77808e;font-weight:400">DeepSeek</div><div class="t" style="left:2567px;top:1632.0px;font-size:24px;line-height:34px;color:#77808e;font-weight:400">文心一言</div><div class="t" style="left:2708px;top:1632.0px;font-size:24px;line-height:34px;color:#77808e;font-weight:400">智谱清言</div><div class="t" style="left:2849px;top:1632.0px;font-size:24px;line-height:34px;color:#77808e;font-weight:400">通义千问</div><div class="t" style="left:2990px;top:1632.0px;font-size:24px;line-height:34px;color:#77808e;font-weight:400">讯飞星火</div><div class="t" style="left:2417px;top:1676.0px;font-size:24px;line-height:34px;color:#77808e;font-weight:400">月之暗面</div><div class="t" style="left:419px;width:1000px;text-align:center;top:1303.0px;font-size:30px;line-height:42px;color:#7a828f;font-weight:400">内容量</div><div class="t" style="left:419px;width:1000px;text-align:center;top:1343.0px;font-size:40px;line-height:56px;color:#3a4152;font-weight:500">367</div><div class="t" style="left:1329px;width:1000px;text-align:center;top:1303.0px;font-size:30px;line-height:42px;color:#7a828f;font-weight:400">商品量</div><div class="t" style="left:1329px;width:1000px;text-align:center;top:1343.0px;font-size:40px;line-height:56px;color:#3a4152;font-weight:500">441</div><div class="t" style="left:2239px;width:1000px;text-align:center;top:1303.0px;font-size:30px;line-height:42px;color:#7a828f;font-weight:400">总量</div><div class="t" style="left:2239px;width:1000px;text-align:center;top:1343.0px;font-size:40px;line-height:56px;color:#3a4152;font-weight:500">557</div><div class="t" style="left:515px;top:997.5px;font-size:32px;line-height:45px;color:#363d4f;font-weight:500">内容类型占比</div><div class="t" style="left:1426px;top:997.5px;font-size:32px;line-height:45px;color:#363d4f;font-weight:500">商品类型占比</div><div class="t" style="left:2335px;top:997.5px;font-size:32px;line-height:45px;color:#363d4f;font-weight:500">AI模型占比</div>
<div class="a" style="left:481px;top:1790px;width:2696px;height:300px;background:#ffffff;border-radius:8px;box-shadow:0 0 0 2px #ebecef"></div>
<div class="t" style="left:515px;top:1815.5px;font-size:32px;line-height:45px;color:#363d4f;font-weight:500;">每日新增趋势</div>
<div class="a" style="left:2912px;top:1808px;width:232px;height:56px;background:#4a76ff;border-radius:4px"></div>
<div class="t" style="left:2028px;width:2000px;text-align:center;top:1816.5px;font-size:28px;line-height:39px;color:#ffffff;font-weight:400;">查看地图分布</div>
<div class="a" style="left:3211px;top:100px;width:558px;height:296px;background:#ffffff;border-radius:8px;box-shadow:0 0 0 2px #ebecef"></div>
<div class="a" style="left:3294px;top:246px;width:64px;height:64px;background:#f3f4f7;border-radius:10px"></div>
<svg style="left:3311.0px;top:263.0px;" width="30" height="30" viewBox="0 0 24 24"><g fill="none" stroke="#4b5565" stroke-width="2" stroke-linecap="butt" stroke-linejoin="miter"><path d="M12.00 2.40 L12.50 2.41 L13.00 2.45 L13.50 2.52 L13.89 3.09 L14.20 3.79 L14.44 4.50 L14.65 5.09 L15.01 5.24 L15.36 5.41 L15.70 5.59 L16.03 5.79 L16.35 6.01 L16.66 6.25 L17.28 6.14 L18.01 5.99 L18.77 5.90 L19.46 5.96 L19.77 6.36 L20.05 6.77 L20.31 7.20 L20.55 7.64 L20.77 8.10 L20.96 8.56 L20.67 9.18 L20.21 9.80 L19.72 10.36 L19.31 10.84 L19.36 11.23 L19.39 11.61 L19.40 12.00 L19.39 12.39 L19.36 12.77 L19.31 13.16 L19.72 13.64 L20.21 14.20 L20.67 14.82 L20.96 15.44 L20.77 15.90 L20.55 16.36 L20.31 16.80 L20.05 17.23 L19.77 17.64 L19.46 18.04 L18.77 18.10 L18.01 18.01 L17.28 17.86 L16.66 17.75 L16.35 17.99 L16.03 18.21 L15.70 18.41 L15.36 18.59 L15.01 18.76 L14.65 18.91 L14.44 19.50 L14.20 20.21 L13.89 20.91 L13.50 21.48 L13.00 21.55 L12.50 21.59 L12.00 21.60 L11.50 21.59 L11.00 21.55 L10.50 21.48 L10.11 20.91 L9.80 20.21 L9.56 19.50 L9.35 18.91 L8.99 18.76 L8.64 18.59 L8.30 18.41 L7.97 18.21 L7.65 17.99 L7.34 17.75 L6.72 17.86 L5.99 18.01 L5.23 18.10 L4.54 18.04 L4.23 17.64 L3.95 17.23 L3.69 16.80 L3.45 16.36 L3.23 15.90 L3.04 15.44 L3.33 14.82 L3.79 14.20 L4.28 13.64 L4.69 13.16 L4.64 12.77 L4.61 12.39 L4.60 12.00 L4.61 11.61 L4.64 11.23 L4.69 10.84 L4.28 10.36 L3.79 9.80 L3.33 9.18 L3.04 8.56 L3.23 8.10 L3.45 7.64 L3.69 7.20 L3.95 6.77 L4.23 6.36 L4.54 5.96 L5.23 5.90 L5.99 5.99 L6.72 6.14 L7.34 6.25 L7.65 6.01 L7.97 5.79 L8.30 5.59 L8.64 5.41 L8.99 5.24 L9.35 5.09 L9.56 4.50 L9.80 3.79 L10.11 3.09 L10.50 2.52 L11.00 2.45 L11.50 2.41 L12.00 2.40Z"/><circle cx="12" cy="12" r="2.9"/></g></svg>
<div class="t" style="left:2326px;width:2000px;text-align:center;top:320.0px;font-size:24px;line-height:34px;color:#77808e;font-weight:400;">系统配置</div>
<div class="a" style="left:3458px;top:246px;width:64px;height:64px;background:#f3f4f7;border-radius:10px"></div>
<svg style="left:3475.0px;top:263.0px;" width="30" height="30" viewBox="0 0 24 24"><g fill="none" stroke="#4b5565" stroke-width="2" stroke-linecap="butt" stroke-linejoin="miter"><path d="M3.6 20.6V12a8.4 8.4 0 1 1 8.4 8.4z"/><path d="M8 10.4h8M8 14h5"/></g></svg>
<div class="t" style="left:2490px;width:2000px;text-align:center;top:320.0px;font-size:24px;line-height:34px;color:#77808e;font-weight:400;">客服管理</div>
<div class="a" style="left:3622px;top:246px;width:64px;height:64px;background:#f3f4f7;border-radius:10px"></div>
<svg style="left:3639.0px;top:263.0px;" width="30" height="30" viewBox="0 0 24 24"><g fill="none" stroke="#4b5565" stroke-width="2" stroke-linecap="butt" stroke-linejoin="miter"><path d="M8 5h13M8 12h13M8 19h13"/><path d="M3 5h2.4M3 12h2.4M3 19h2.4"/></g></svg>
<div class="t" style="left:2654px;width:2000px;text-align:center;top:320.0px;font-size:24px;line-height:34px;color:#77808e;font-weight:400;">日志管理</div>
<div class="a" style="left:3211px;top:402px;width:558px;height:314px;background:#ffffff;border-radius:8px;box-shadow:0 0 0 2px #ebecef"></div>
<div class="t" style="left:3245px;top:435.5px;font-size:32px;line-height:45px;color:#363d4f;font-weight:500;">最近访问</div>
<div class="a" style="left:3294px;top:565px;width:64px;height:64px;background:#f3f4f7;border-radius:10px"></div>
<svg style="left:3311.0px;top:582.0px;" width="30" height="30" viewBox="0 0 24 24"><g fill="none" stroke="#4b5565" stroke-width="2" stroke-linecap="butt" stroke-linejoin="miter"><circle cx="12" cy="7.6" r="4"/><path d="M3.8 20.8v-1.2a4.6 4.6 0 0 1 4.6-4.6h7.2a4.6 4.6 0 0 1 4.6 4.6v1.2z"/></g></svg>
<div class="t" style="left:2326px;width:2000px;text-align:center;top:638.0px;font-size:24px;line-height:34px;color:#77808e;font-weight:400;">会员管理</div>
<div class="a" style="left:3458px;top:565px;width:64px;height:64px;background:#f3f4f7;border-radius:10px"></div>
<svg style="left:3475.0px;top:582.0px;" width="30" height="30" viewBox="0 0 24 24"><g fill="none" stroke="#4b5565" stroke-width="2" stroke-linecap="butt" stroke-linejoin="miter"><path d="M4.2 3h11.3l4.3 4.3V21H4.2z"/><path d="M8 11.2h8M8 15h5"/></g></svg>
<div class="t" style="left:2490px;width:2000px;text-align:center;top:638.0px;font-size:24px;line-height:34px;color:#77808e;font-weight:400;">笔记管理</div>
<div class="a" style="left:3622px;top:565px;width:64px;height:64px;background:#f3f4f7;border-radius:10px"></div>
<svg style="left:3639.0px;top:582.0px;" width="30" height="30" viewBox="0 0 24 24"><g fill="none" stroke="#4b5565" stroke-width="2" stroke-linecap="butt" stroke-linejoin="miter"><rect x="3.6" y="3.6" width="6.6" height="6.6"/><rect x="13.8" y="3.6" width="6.6" height="6.6"/><rect x="3.6" y="13.8" width="6.6" height="6.6"/><rect x="13.8" y="13.8" width="6.6" height="6.6"/></g></svg>
<div class="t" style="left:2654px;width:2000px;text-align:center;top:638.0px;font-size:24px;line-height:34px;color:#77808e;font-weight:400;">商品管理</div>
<svg style="left:3210px;top:751px;border-radius:13px;overflow:hidden" width="560" height="340" viewBox="0 0 560 340"><defs>
<linearGradient id="pw" x1="0" y1="0" x2=".6" y2="1"><stop offset="0" stop-color="#c9cbce"/><stop offset=".5" stop-color="#dfe1e4"/><stop offset="1" stop-color="#f4f5f7"/></linearGradient>
<linearGradient id="pw2" x1="0" y1="0" x2="1" y2="0"><stop offset="0" stop-color="#e9ecf1"/><stop offset="1" stop-color="#f4f6fa"/></linearGradient>
<linearGradient id="pscr" x1="0" y1="0" x2="1" y2="1"><stop offset="0" stop-color="#f6f8fb"/><stop offset="1" stop-color="#e9ecf2"/></linearGradient>
<linearGradient id="pbase" x1="0" y1="0" x2="1" y2="1"><stop offset="0" stop-color="#d9dce3"/><stop offset="1" stop-color="#f1f2f6"/></linearGradient>
<linearGradient id="pwall" x1="0" y1="0" x2="1" y2="0"><stop offset="0" stop-color="#3f566e"/><stop offset=".6" stop-color="#4f6178"/><stop offset="1" stop-color="#6d6f7c"/></linearGradient>
</defs>
<g transform="scale(0.27964) translate(-35,-38)">
<rect x="35" y="38" width="2010" height="1220" fill="#f0f2f6"/>
<rect x="615" y="38" width="1430" height="1220" fill="url(#pw2)"/>
<rect x="950" y="38" width="330" height="650" fill="#ffffff"/>
<path d="M1010 38v640M1135 38v640M1160 38v640" stroke="#e9ecf1" stroke-width="10"/>
<path d="M640 130L720 45L745 45L745 490L715 490L715 400L640 410Z" fill="#38485a"/>
<path d="M722 50L745 45L745 490L722 490Z" fill="#e8ebf0"/>
<rect x="615" y="405" width="75" height="200" fill="#8d949e"/>
<rect x="615" y="618" width="110" height="145" fill="#6d5f57"/>
<path d="M690 690q10-60 60-62q45 0 38 60l-10 75h-88z" fill="#2d3642"/>
<!-- monitor -->
<path d="M1480 85L1835 38L1870 38L1870 495L1800 495L1800 120L1480 130Z" fill="#1d232b"/>
<path d="M1255 150L1830 60L1830 495L1295 495L1230 640Z" fill="url(#pscr)"/>
<path d="M1255 185L1228 640" stroke="#2a323d" stroke-width="8"/>
<path d="M1380 215L1635 135L1635 265L1380 300Z" fill="#7f8a99"/>
<path d="M1400 240L1560 170L1590 270L1420 295Z" fill="#4a5564"/>
<path d="M1375 320l100 -5M1375 338l100 -5M1375 356l90 -5M1370 405l240 -6M1370 425l130 -4M1495 305l20 0M1495 325l20 0M1495 345l20 0" stroke="#c5cad3" stroke-width="4"/>
<!-- white desk -->
<path d="M615 760L1255 730L1250 815L615 866Z" fill="#e4e7ed"/>
<path d="M615 850L1250 805L1250 822L615 870Z" fill="#8a9099"/>
<!-- small plant -->
<path d="M1120 645h100l-8 100h-84z" fill="#cfd3da"/>
<g stroke="#6f9c55" stroke-width="9" stroke-linecap="round"><path d="M1170 645l-45-60M1170 645l-25-72M1170 645l-5-78M1170 645l18-72M1170 645l40-62M1170 645l52-40"/></g>
<!-- mug -->
<path d="M740 712q80-12 158 -2l-14 122q-60 12 -122 2z" fill="#fbfbfd"/>
<path d="M745 735q-40 5 -32 40q10 25 40 22" stroke="#f1f2f5" stroke-width="14" fill="none"/>
<path d="M760 820q60 14 122 2l-2 14q-60 10 -118 0z" fill="#d9dce2"/>
<!-- headphones -->
<path d="M905 770q-5-60 55-68q60-4 72 50" stroke="#1f252d" stroke-width="22" fill="none"/>
<ellipse cx="925" cy="745" rx="24" ry="34" fill="#1b2027"/><ellipse cx="1030" cy="752" rx="40" ry="16" fill="#1b2027"/>
<path d="M885 700q60-25 120 0M680 785q120 10 230 -8M1030 760q60 -10 90 8" stroke="#b8464d" stroke-width="4" fill="none"/>
<ellipse cx="1190" cy="798" rx="30" ry="9" fill="#1d232b"/>
<!-- dark desk -->
<path d="M615 866L1250 815L1240 975L905 1128L965 1210L930 1258L615 1258L615 930Z" fill="#3c4856"/>
<path d="M615 866L1250 815L1240 975L905 1128L615 935Z" fill="#414d5c"/>
<path d="M615 930L965 1205L940 1258L905 1258L615 1000Z" fill="#252d38"/>
<path d="M640 1010L690 1035L650 1258L615 1258L615 1060Z" fill="#59626f"/>
<path d="M690 1090L960 1210L940 1258L660 1258Z" fill="#8f7e6f"/>
<rect x="710" y="1140" width="60" height="70" fill="#2a3038"/>
<!-- apple keyboard -->
<path d="M1025 868L1240 825L1240 935L1228 940Z" fill="#e6e9ee"/>
<path d="M1025 868L1228 940L1228 948L1025 876Z" fill="#9ea4ad"/>
<!-- phone -->
<path d="M815 968L1160 946L1166 978L822 1012Z" fill="#151a21"/>
<path d="M830 968L1150 950L1152 962L832 982Z" fill="#6d7683"/>
<!-- laptop base -->
<path d="M900 1130L1235 975L1992 1042L1945 1258L1205 1258Z" fill="url(#pbase)"/>
<path d="M1160 1052L1250 1000L1882 1052L1835 1132L1160 1062Z" fill="#30353d"/>
<path d="M1240 1150L1300 1095L1585 1122L1530 1188Z" fill="#f6f7fa"/>
<!-- laptop screen -->
<path d="M1292 495Q1300 490 1312 492L2015 500Q2028 502 2026 520L1992 1042L1235 976Z" fill="#1f2832"/>
<path d="M1312 520L2000 530L1972 1005L1262 945Z" fill="url(#pwall)"/>
<path d="M1335 548L1905 556L1880 942L1297 902Z" fill="#1e2a35"/>
<path d="M1590 552l-10 380" stroke="#3a4652" stroke-width="6"/>
<g stroke-width="6" fill="none">
<path d="M1352 572h50M1360 590h160M1360 606h180M1368 622h120M1360 660h90M1368 676h110M1368 692h80M1360 730h60M1368 760h170M1368 776h190M1360 792h140M1368 808h150M1360 846h70M1368 862h120M1360 880h160" stroke="#a5dd84"/>
<path d="M1352 640h40M1352 710h30M1352 744h48M1352 830h36M1610 620h50M1610 690h40M1610 760h44M1610 830h52M1610 880h40" stroke="#e8cd6f"/>
<path d="M1622 640h40M1622 656h30M1622 708h60M1622 724h50M1622 778h44M1622 796h60M1622 848h40M1622 898h36" stroke="#e8708a"/>
<path d="M1640 580h230M1640 596h200M1640 612h160" stroke="#8f9aa6"/>
</g>
<path d="M1285 700q30 -20 40 20l-30 180l-40 30z" fill="#7d8ea3" opacity=".7"/>
<path d="M1900 800q40-30 70 10l-10 170q-40 25 -75 -10z" fill="#c9835a" opacity=".6"/>
<path d="M1600 935l300 18l-5 40l-300 -20z" fill="#b8734f" opacity=".7"/>
<!-- left image: wall + plant -->
<rect x="35" y="38" width="580" height="1220" fill="url(#pw)"/>
<g stroke="#6fa05a" stroke-width="26" stroke-linecap="round" fill="none">
<path d="M520 985L350 640"/><path d="M540 985L475 580"/><path d="M560 985L600 575"/><path d="M500 985L300 760"/><path d="M520 900L260 855"/><path d="M540 880L440 640"/><path d="M560 860L530 640"/><path d="M580 930L612 700"/><path d="M480 940L380 700"/><path d="M505 820L330 770"/></g>
<g stroke="#4d7c42" stroke-width="22" stroke-linecap="round" fill="none">
<path d="M530 985L420 720"/><path d="M550 985L560 690"/><path d="M510 985L370 830"/><path d="M575 985L605 800"/><path d="M495 900L400 760"/></g>
<path d="M415 985L615 985L615 1258L445 1258Z" fill="#fafbfc"/>
<path d="M415 985L615 985L615 1040L420 1045Z" fill="#f1f2f5"/>
<path d="M408 1040L615 1030L615 1050L412 1060Z" fill="#dcdee3"/>
<path d="M35 1180L615 1200L615 1258L35 1258Z" fill="#f6f7f9"/>
<!-- indicator -->
<rect x="865" y="1140" width="345" height="28" rx="14" fill="#ffffff" opacity=".28"/>
<rect x="1055" y="1140" width="68" height="28" rx="14" fill="#ffffff" opacity=".85"/>
</g>
</svg>
<div class="a" style="left:3211px;top:1124px;width:558px;height:468px;background:#ffffff;border-radius:8px;box-shadow:0 0 0 2px #ebecef"></div>
<div class="t" style="left:3245px;top:1159.5px;font-size:32px;line-height:45px;color:#363d4f;font-weight:500;">公告</div>
<div class="t" style="right:113px;top:1162.5px;font-size:28px;line-height:39px;color:#4a76ff;font-weight:400;">查看更多</div>
<div class="a" style="left:3252px;top:1255px;width:84px;height:40px;background:#fdeee2;border-radius:5px"></div>
<div class="t" style="left:2294px;width:2000px;text-align:center;top:1259.0px;font-size:23px;line-height:32px;color:#f08c4a;font-weight:400;">公告</div>
<div class="t" style="left:3345px;top:1255.5px;font-size:28px;line-height:39px;color:#7a8492;font-weight:400;">Pro 版源码</div>
<div class="a" style="left:3252px;top:1319px;width:84px;height:40px;background:#e3eefc;border-radius:5px"></div>
<div class="t" style="left:2294px;width:2000px;text-align:center;top:1323.0px;font-size:23px;line-height:32px;color:#3f8cf3;font-weight:400;">通知</div>
<div class="t" style="left:3345px;top:1319.5px;font-size:28px;line-height:39px;color:#7a8492;font-weight:400;">v5.0（Pro版）</div>
<div class="a" style="left:3252px;top:1383px;width:84px;height:40px;background:#e3eefc;border-radius:5px"></div>
<div class="t" style="left:2294px;width:2000px;text-align:center;top:1387.0px;font-size:23px;line-height:32px;color:#3f8cf3;font-weight:400;">通知</div>
<div class="t" style="left:3345px;top:1383.5px;font-size:28px;line-height:39px;color:#7a8492;font-weight:400;">v4.0（Pro版）</div>
<div class="a" style="left:3252px;top:1447px;width:84px;height:40px;background:#e3eefc;border-radius:5px"></div>
<div class="t" style="left:2294px;width:2000px;text-align:center;top:1451.0px;font-size:23px;line-height:32px;color:#3f8cf3;font-weight:400;">通知</div>
<div class="t" style="left:3345px;top:1447.5px;font-size:28px;line-height:39px;color:#7a8492;font-weight:400;">v3.0（Pro版）</div>
<div class="a" style="left:3252px;top:1511px;width:84px;height:40px;background:#e3eefc;border-radius:5px"></div>
<div class="t" style="left:2294px;width:2000px;text-align:center;top:1515.0px;font-size:23px;line-height:32px;color:#3f8cf3;font-weight:400;">通知</div>
<div class="t" style="left:3345px;top:1511.5px;font-size:28px;line-height:39px;color:#7a8492;font-weight:400;">v2.0（Pro版）</div>
<div class="a" style="left:3211px;top:1629px;width:558px;height:400px;background:#ffffff;border-radius:8px;box-shadow:0 0 0 2px #ebecef"></div>
<div class="t" style="left:3245px;top:1663.5px;font-size:32px;line-height:45px;color:#363d4f;font-weight:500;">帮助文档</div>
<div class="t" style="left:3253px;top:1746.5px;font-size:28px;line-height:39px;color:#7a8492;font-weight:400;">Pro源码</div>
<div class="t" style="left:3499px;top:1746.5px;font-size:28px;line-height:39px;color:#7a8492;font-weight:400;">项目简介</div>
<div class="t" style="left:3253px;top:1833.5px;font-size:28px;line-height:39px;color:#7a8492;font-weight:400;">核心亮点</div>
<div class="t" style="left:3499px;top:1833.5px;font-size:28px;line-height:39px;color:#7a8492;font-weight:400;">技术架构</div>
<div class="a" style="left:3810px;top:186px;width:30px;height:1732px;background:#ffffff;"></div>
<div class="a" style="left:440px;top:122px;width:3400px;height:64px;background:#ffffff;box-shadow:0 2px 0 #e6e7eb"></div>
<div class="a" style="left:480px;top:130px;width:84px;height:48px;background:#eff0f3;border-radius:6px"></div>
<div class="t" style="left:-478px;width:2000px;text-align:center;top:137.5px;font-size:24px;line-height:34px;color:#5a6473;font-weight:400;">首页</div>
<div class="a" style="left:576px;top:130px;width:140px;height:48px;background:#eff0f3;border-radius:6px"></div>
<div class="t" style="left:596px;top:137.5px;font-size:24px;line-height:34px;color:#4a76ff;font-weight:400;">工作台</div>
<svg style="left:679px;top:148px;" width="14" height="14" viewBox="0 0 14 14"><path d="M1 1l12 12M13 1l-12 12" stroke="#4a76ff" stroke-width="2" fill="none"/></svg>
<div class="a" style="left:0px;top:122px;width:440px;height:1796px;background:#ffffff;"></div>
<div class="a" style="left:440px;top:186px;width:6px;height:1732px;background:linear-gradient(90deg,#e8e9ec,#f3f3f6);"></div>
<div class="a" style="left:16px;top:218px;width:408px;height:80px;background:#eef0f4;border-radius:8px"></div>
<svg style="left:42.0px;top:154.0px;" width="32" height="32" viewBox="0 0 24 24"><g fill="none" stroke="#4a76ff" stroke-width="1.95" stroke-linecap="butt" stroke-linejoin="miter"><path d="M12 3.2 21 8 12 12.8 3 8Z"/><path d="M3.6 12.3 12 16.8 20.4 12.3"/><path d="M3.6 16.3 12 20.8 20.4 16.3"/></g></svg>
<div class="t" style="left:109px;top:150.5px;font-size:28px;line-height:39px;color:#4a76ff;font-weight:400;">仪表盘</div>
<svg style="left:371.0px;top:155.0px;" width="30" height="30" viewBox="0 0 24 24"><g fill="none" stroke="#4a76ff" stroke-width="1.7" stroke-linecap="butt" stroke-linejoin="miter"><path d="M5 15.5l7-7 7 7"/></g></svg>
<svg style="left:42.0px;top:330.0px;" width="32" height="32" viewBox="0 0 24 24"><g fill="none" stroke="#8893a2" stroke-width="1.65" stroke-linecap="butt" stroke-linejoin="miter"><rect x="3.2" y="3.2" width="17.6" height="17.6" rx="1"/><path d="M3.2 9.1h17.6M3.2 14.9h17.6"/><path d="M6.3 6.2h1.6M6.3 12h1.6M6.3 17.8h1.6" stroke-width="1.6"/></g></svg>
<div class="t" style="left:109px;top:326.5px;font-size:28px;line-height:39px;color:#7a8492;font-weight:400;">会员中心</div>
<svg style="left:371.0px;top:331.0px;" width="30" height="30" viewBox="0 0 24 24"><g fill="none" stroke="#8893a2" stroke-width="1.7" stroke-linecap="butt" stroke-linejoin="miter"><path d="M5 8.5l7 7 7-7"/></g></svg>
<svg style="left:42.0px;top:418.0px;" width="32" height="32" viewBox="0 0 24 24"><g fill="none" stroke="#8893a2" stroke-width="1.65" stroke-linecap="butt" stroke-linejoin="miter"><rect x="3.2" y="3.2" width="17.6" height="17.6" rx="1"/><path d="M3.2 9.1h17.6M3.2 14.9h17.6"/><path d="M6.3 6.2h1.6M6.3 12h1.6M6.3 17.8h1.6" stroke-width="1.6"/></g></svg>
<div class="t" style="left:109px;top:414.5px;font-size:28px;line-height:39px;color:#7a8492;font-weight:400;">笔记管理</div>
<svg style="left:371.0px;top:419.0px;" width="30" height="30" viewBox="0 0 24 24"><g fill="none" stroke="#8893a2" stroke-width="1.7" stroke-linecap="butt" stroke-linejoin="miter"><path d="M5 8.5l7 7 7-7"/></g></svg>
<svg style="left:42.0px;top:506.0px;" width="32" height="32" viewBox="0 0 24 24"><g fill="none" stroke="#8893a2" stroke-width="1.65" stroke-linecap="butt" stroke-linejoin="miter"><rect x="3.2" y="3.2" width="17.6" height="17.6" rx="1"/><path d="M3.2 9.1h17.6M3.2 14.9h17.6"/><path d="M6.3 6.2h1.6M6.3 12h1.6M6.3 17.8h1.6" stroke-width="1.6"/></g></svg>
<div class="t" style="left:109px;top:502.5px;font-size:28px;line-height:39px;color:#7a8492;font-weight:400;">闲宝管理</div>
<svg style="left:371.0px;top:507.0px;" width="30" height="30" viewBox="0 0 24 24"><g fill="none" stroke="#8893a2" stroke-width="1.7" stroke-linecap="butt" stroke-linejoin="miter"><path d="M5 8.5l7 7 7-7"/></g></svg>
<svg style="left:42.0px;top:594.0px;" width="32" height="32" viewBox="0 0 24 24"><g fill="none" stroke="#8893a2" stroke-width="1.65" stroke-linecap="butt" stroke-linejoin="miter"><path d="M12.00 2.40 L12.50 2.41 L13.00 2.45 L13.50 2.52 L13.89 3.09 L14.20 3.79 L14.44 4.50 L14.65 5.09 L15.01 5.24 L15.36 5.41 L15.70 5.59 L16.03 5.79 L16.35 6.01 L16.66 6.25 L17.28 6.14 L18.01 5.99 L18.77 5.90 L19.46 5.96 L19.77 6.36 L20.05 6.77 L20.31 7.20 L20.55 7.64 L20.77 8.10 L20.96 8.56 L20.67 9.18 L20.21 9.80 L19.72 10.36 L19.31 10.84 L19.36 11.23 L19.39 11.61 L19.40 12.00 L19.39 12.39 L19.36 12.77 L19.31 13.16 L19.72 13.64 L20.21 14.20 L20.67 14.82 L20.96 15.44 L20.77 15.90 L20.55 16.36 L20.31 16.80 L20.05 17.23 L19.77 17.64 L19.46 18.04 L18.77 18.10 L18.01 18.01 L17.28 17.86 L16.66 17.75 L16.35 17.99 L16.03 18.21 L15.70 18.41 L15.36 18.59 L15.01 18.76 L14.65 18.91 L14.44 19.50 L14.20 20.21 L13.89 20.91 L13.50 21.48 L13.00 21.55 L12.50 21.59 L12.00 21.60 L11.50 21.59 L11.00 21.55 L10.50 21.48 L10.11 20.91 L9.80 20.21 L9.56 19.50 L9.35 18.91 L8.99 18.76 L8.64 18.59 L8.30 18.41 L7.97 18.21 L7.65 17.99 L7.34 17.75 L6.72 17.86 L5.99 18.01 L5.23 18.10 L4.54 18.04 L4.23 17.64 L3.95 17.23 L3.69 16.80 L3.45 16.36 L3.23 15.90 L3.04 15.44 L3.33 14.82 L3.79 14.20 L4.28 13.64 L4.69 13.16 L4.64 12.77 L4.61 12.39 L4.60 12.00 L4.61 11.61 L4.64 11.23 L4.69 10.84 L4.28 10.36 L3.79 9.80 L3.33 9.18 L3.04 8.56 L3.23 8.10 L3.45 7.64 L3.69 7.20 L3.95 6.77 L4.23 6.36 L4.54 5.96 L5.23 5.90 L5.99 5.99 L6.72 6.14 L7.34 6.25 L7.65 6.01 L7.97 5.79 L8.30 5.59 L8.64 5.41 L8.99 5.24 L9.35 5.09 L9.56 4.50 L9.80 3.79 L10.11 3.09 L10.50 2.52 L11.00 2.45 L11.50 2.41 L12.00 2.40Z"/><circle cx="12" cy="12" r="2.9"/></g></svg>
<div class="t" style="left:109px;top:590.5px;font-size:28px;line-height:39px;color:#7a8492;font-weight:400;">AI管理</div>
<svg style="left:371.0px;top:595.0px;" width="30" height="30" viewBox="0 0 24 24"><g fill="none" stroke="#8893a2" stroke-width="1.7" stroke-linecap="butt" stroke-linejoin="miter"><path d="M5 8.5l7 7 7-7"/></g></svg>
<svg style="left:42.0px;top:682.0px;" width="32" height="32" viewBox="0 0 24 24"><g fill="none" stroke="#8893a2" stroke-width="1.65" stroke-linecap="butt" stroke-linejoin="miter"><path d="M12.00 2.40 L12.50 2.41 L13.00 2.45 L13.50 2.52 L13.89 3.09 L14.20 3.79 L14.44 4.50 L14.65 5.09 L15.01 5.24 L15.36 5.41 L15.70 5.59 L16.03 5.79 L16.35 6.01 L16.66 6.25 L17.28 6.14 L18.01 5.99 L18.77 5.90 L19.46 5.96 L19.77 6.36 L20.05 6.77 L20.31 7.20 L20.55 7.64 L20.77 8.10 L20.96 8.56 L20.67 9.18 L20.21 9.80 L19.72 10.36 L19.31 10.84 L19.36 11.23 L19.39 11.61 L19.40 12.00 L19.39 12.39 L19.36 12.77 L19.31 13.16 L19.72 13.64 L20.21 14.20 L20.67 14.82 L20.96 15.44 L20.77 15.90 L20.55 16.36 L20.31 16.80 L20.05 17.23 L19.77 17.64 L19.46 18.04 L18.77 18.10 L18.01 18.01 L17.28 17.86 L16.66 17.75 L16.35 17.99 L16.03 18.21 L15.70 18.41 L15.36 18.59 L15.01 18.76 L14.65 18.91 L14.44 19.50 L14.20 20.21 L13.89 20.91 L13.50 21.48 L13.00 21.55 L12.50 21.59 L12.00 21.60 L11.50 21.59 L11.00 21.55 L10.50 21.48 L10.11 20.91 L9.80 20.21 L9.56 19.50 L9.35 18.91 L8.99 18.76 L8.64 18.59 L8.30 18.41 L7.97 18.21 L7.65 17.99 L7.34 17.75 L6.72 17.86 L5.99 18.01 L5.23 18.10 L4.54 18.04 L4.23 17.64 L3.95 17.23 L3.69 16.80 L3.45 16.36 L3.23 15.90 L3.04 15.44 L3.33 14.82 L3.79 14.20 L4.28 13.64 L4.69 13.16 L4.64 12.77 L4.61 12.39 L4.60 12.00 L4.61 11.61 L4.64 11.23 L4.69 10.84 L4.28 10.36 L3.79 9.80 L3.33 9.18 L3.04 8.56 L3.23 8.10 L3.45 7.64 L3.69 7.20 L3.95 6.77 L4.23 6.36 L4.54 5.96 L5.23 5.90 L5.99 5.99 L6.72 6.14 L7.34 6.25 L7.65 6.01 L7.97 5.79 L8.30 5.59 L8.64 5.41 L8.99 5.24 L9.35 5.09 L9.56 4.50 L9.80 3.79 L10.11 3.09 L10.50 2.52 L11.00 2.45 L11.50 2.41 L12.00 2.40Z"/><circle cx="12" cy="12" r="2.9"/></g></svg>
<div class="t" style="left:109px;top:678.5px;font-size:28px;line-height:39px;color:#7a8492;font-weight:400;">系统管理</div>
<svg style="left:371.0px;top:683.0px;" width="30" height="30" viewBox="0 0 24 24"><g fill="none" stroke="#8893a2" stroke-width="1.7" stroke-linecap="butt" stroke-linejoin="miter"><path d="M5 8.5l7 7 7-7"/></g></svg>
<svg style="left:42.0px;top:770.0px;" width="32" height="32" viewBox="0 0 24 24"><g fill="none" stroke="#8893a2" stroke-width="1.65" stroke-linecap="butt" stroke-linejoin="miter"><rect x="2.8" y="3.6" width="18.4" height="12.4" rx="1"/><path d="M12 16v4.2M7 20.4h10"/><path d="M7 11.5l3-3 2.5 2.2 3.5-3.4" stroke-width="1.7"/></g></svg>
<div class="t" style="left:109px;top:766.5px;font-size:28px;line-height:39px;color:#7a8492;font-weight:400;">系统监控</div>
<svg style="left:371.0px;top:771.0px;" width="30" height="30" viewBox="0 0 24 24"><g fill="none" stroke="#8893a2" stroke-width="1.7" stroke-linecap="butt" stroke-linejoin="miter"><path d="M5 8.5l7 7 7-7"/></g></svg>
<svg style="left:42.0px;top:858.0px;" width="32" height="32" viewBox="0 0 24 24"><g fill="none" stroke="#8893a2" stroke-width="1.65" stroke-linecap="butt" stroke-linejoin="miter"><path d="M14.6 3.3a5.6 5.6 0 0 0-4.9 7.9L3.4 17.5a2.2 2.2 0 0 0 3.1 3.1l6.3-6.3a5.6 5.6 0 0 0 7.9-4.9 5.4 5.4 0 0 0-.4-2.1l-3.4 3.4-2.6-.9-.9-2.6 3.4-3.4a5.4 5.4 0 0 0-2.2-.5z"/></g></svg>
<div class="t" style="left:109px;top:854.5px;font-size:28px;line-height:39px;color:#7a8492;font-weight:400;">系统工具</div>
<svg style="left:371.0px;top:859.0px;" width="30" height="30" viewBox="0 0 24 24"><g fill="none" stroke="#8893a2" stroke-width="1.7" stroke-linecap="butt" stroke-linejoin="miter"><path d="M5 8.5l7 7 7-7"/></g></svg>
<svg style="left:110.0px;top:242.0px;" width="32" height="32" viewBox="0 0 24 24"><g fill="none" stroke="#4a76ff" stroke-width="2.15" stroke-linecap="butt" stroke-linejoin="miter"><rect x="2.8" y="3.8" width="18.4" height="12.6" rx="1"/><path d="M12 16.4v3.8M7.5 20.2h9"/></g></svg>
<div class="t" style="left:177px;top:238.5px;font-size:28px;line-height:39px;color:#4a76ff;font-weight:400;">工作台</div>
<div class="a" style="left:368px;top:1846px;width:48px;height:48px;background:#f1f2f5;border-radius:6px"></div>
<svg style="left:377.5px;top:1855.5px;" width="29" height="29" viewBox="0 0 24 24"><g color="#8b97a6" fill="none" stroke="#8b97a6" stroke-width="2.1" stroke-linecap="butt" stroke-linejoin="miter"><path d="M3.5 5h17M11 12h9.5M3.5 19h17"/><path d="M7.5 8.6v6.8L3.6 12z" fill="currentColor" stroke="none"/></g></svg>
<div class="a" style="left:0px;top:0px;width:3840px;height:120px;background:#ffffff;"></div>
<div class="a" style="left:0px;top:120px;width:3840px;height:2px;background:#e6e7eb;"></div>
<div class="a" style="left:45px;top:31px;width:110px;height:60px;background:#5b9af5;border-radius:30px"></div>
<div class="t" style="left:-900px;width:2000px;text-align:center;top:38.0px;font-size:33px;line-height:46px;color:#ffffff;font-weight:900;letter-spacing:-1px">来因</div>
<div class="t" style="left:177px;top:37.0px;font-size:36px;line-height:50px;color:#363d4f;font-weight:400;">创作服务平台</div>
<div class="a" style="left:3076px;top:29px;width:64px;height:64px;background:transparent;border-radius:50%;border:2px solid #f0f1f4"></div>
<div class="a" style="left:3180px;top:29px;width:64px;height:64px;background:transparent;border-radius:50%;border:2px solid #f0f1f4"></div>
<div class="a" style="left:3284px;top:29px;width:64px;height:64px;background:transparent;border-radius:50%;border:2px solid #f0f1f4"></div>
<div class="a" style="left:3388px;top:29px;width:64px;height:64px;background:transparent;border-radius:50%;border:2px solid #f0f1f4"></div>
<div class="a" style="left:3492px;top:29px;width:64px;height:64px;background:transparent;border-radius:50%;border:2px solid #f0f1f4"></div>
<div class="a" style="left:3596px;top:29px;width:64px;height:64px;background:transparent;border-radius:50%;border:2px solid #f0f1f4"></div>
<svg style="left:3091.5px;top:44.5px;" width="33" height="33" viewBox="0 0 24 24"><circle cx="12" cy="12" r="11.6" fill="#606c7b"/><path d="M17.6 6.4H10.2a3.8 3.8 0 0 0-3.8 3.8v7.4h8.6a2.6 2.6 0 0 0 2.6-2.6v-3.6h-6.2v2.3h3.6v.9a.7.7 0 0 1-.7.7H8.9V10.4a1.6 1.6 0 0 1 1.6-1.6h7.1z" fill="#ffffff"/></svg>
<svg style="left:3193px;top:42px;" width="38" height="38" viewBox="0 0 24 24"><path d="M12.001 2C6.47598 2 2.00098 6.475 2.00098 12C2.00098 16.425 4.86348 20.1625 8.83848 21.4875C9.33848 21.575 9.52598 21.275 9.52598 21.0125C9.52598 20.775 9.51348 19.9875 9.51348 19.15C7.00098 19.6125 6.35098 18.5375 6.15098 17.975C6.03848 17.6875 5.55098 16.8 5.12598 16.5625C4.77598 16.375 4.27598 15.9125 5.11348 15.9C5.90098 15.8875 6.46348 16.625 6.65098 16.925C7.55098 18.4375 8.98848 18.0125 9.56348 17.75C9.65098 17.1 9.91348 16.6625 10.201 16.4125C7.97598 16.1625 5.65098 15.3 5.65098 11.475C5.65098 10.3875 6.03848 9.4875 6.67598 8.7875C6.57598 8.5375 6.22598 7.5125 6.77598 6.1375C6.77598 6.1375 7.61348 5.875 9.52598 7.1625C10.326 6.9375 11.176 6.825 12.026 6.825C12.876 6.825 13.726 6.9375 14.526 7.1625C16.4385 5.8625 17.276 6.1375 17.276 6.1375C17.826 7.5125 17.476 8.5375 17.376 8.7875C18.0135 9.4875 18.401 10.375 18.401 11.475C18.401 15.3125 16.0635 16.1625 13.8385 16.4125C14.201 16.725 14.5135 17.325 14.5135 18.2625C14.5135 19.6 14.501 20.675 14.501 21.0125C14.501 21.275 14.6885 21.5875 15.1885 21.4875C19.259 20.1133 21.9999 16.2963 22.001 12C22.001 6.475 17.526 2 12.001 2Z" fill="#606c7b"/></svg>
<svg style="left:3301.0px;top:46.0px;" width="30" height="30" viewBox="0 0 24 24"><g fill="none" stroke="#606c7b" stroke-width="2.2" stroke-linecap="butt" stroke-linejoin="miter"><path d="M4.2 3h11.3l4.3 4.3V21H4.2z"/><path d="M8 11.2h8M8 15h5"/></g></svg>
<svg style="left:3405.0px;top:46.0px;" width="30" height="30" viewBox="0 0 24 24"><circle cx="12" cy="12" r="5" fill="#606c7b"/><rect x="19.95" y="10.65" width="2.7" height="2.7" fill="#606c7b" transform="rotate(0 21.30 12.00)"/><rect x="17.23" y="17.23" width="2.7" height="2.7" fill="#606c7b" transform="rotate(45 18.58 18.58)"/><rect x="10.65" y="19.95" width="2.7" height="2.7" fill="#606c7b" transform="rotate(90 12.00 21.30)"/><rect x="4.07" y="17.23" width="2.7" height="2.7" fill="#606c7b" transform="rotate(135 5.42 18.58)"/><rect x="1.35" y="10.65" width="2.7" height="2.7" fill="#606c7b" transform="rotate(180 2.70 12.00)"/><rect x="4.07" y="4.07" width="2.7" height="2.7" fill="#606c7b" transform="rotate(225 5.42 5.42)"/><rect x="10.65" y="1.35" width="2.7" height="2.7" fill="#606c7b" transform="rotate(270 12.00 2.70)"/><rect x="17.23" y="4.07" width="2.7" height="2.7" fill="#606c7b" transform="rotate(315 18.58 5.42)"/></svg>
<svg style="left:3509.0px;top:46.0px;" width="30" height="30" viewBox="0 0 24 24"><g fill="none" stroke="#606c7b" stroke-width="2.2" stroke-linecap="butt" stroke-linejoin="miter"><path d="M3.5 8.5v-5h5M15.5 3.5h5v5M20.5 15.5v5h-5M8.5 20.5h-5v-5"/></g></svg>
<svg style="left:3613.0px;top:46.0px;" width="30" height="30" viewBox="0 0 24 24"><g fill="none" stroke="#606c7b" stroke-width="2.1" stroke-linecap="butt" stroke-linejoin="miter"><path d="M12.00 2.40 L12.50 2.41 L13.00 2.45 L13.50 2.52 L13.89 3.09 L14.20 3.79 L14.44 4.50 L14.65 5.09 L15.01 5.24 L15.36 5.41 L15.70 5.59 L16.03 5.79 L16.35 6.01 L16.66 6.25 L17.28 6.14 L18.01 5.99 L18.77 5.90 L19.46 5.96 L19.77 6.36 L20.05 6.77 L20.31 7.20 L20.55 7.64 L20.77 8.10 L20.96 8.56 L20.67 9.18 L20.21 9.80 L19.72 10.36 L19.31 10.84 L19.36 11.23 L19.39 11.61 L19.40 12.00 L19.39 12.39 L19.36 12.77 L19.31 13.16 L19.72 13.64 L20.21 14.20 L20.67 14.82 L20.96 15.44 L20.77 15.90 L20.55 16.36 L20.31 16.80 L20.05 17.23 L19.77 17.64 L19.46 18.04 L18.77 18.10 L18.01 18.01 L17.28 17.86 L16.66 17.75 L16.35 17.99 L16.03 18.21 L15.70 18.41 L15.36 18.59 L15.01 18.76 L14.65 18.91 L14.44 19.50 L14.20 20.21 L13.89 20.91 L13.50 21.48 L13.00 21.55 L12.50 21.59 L12.00 21.60 L11.50 21.59 L11.00 21.55 L10.50 21.48 L10.11 20.91 L9.80 20.21 L9.56 19.50 L9.35 18.91 L8.99 18.76 L8.64 18.59 L8.30 18.41 L7.97 18.21 L7.65 17.99 L7.34 17.75 L6.72 17.86 L5.99 18.01 L5.23 18.10 L4.54 18.04 L4.23 17.64 L3.95 17.23 L3.69 16.80 L3.45 16.36 L3.23 15.90 L3.04 15.44 L3.33 14.82 L3.79 14.20 L4.28 13.64 L4.69 13.16 L4.64 12.77 L4.61 12.39 L4.60 12.00 L4.61 11.61 L4.64 11.23 L4.69 10.84 L4.28 10.36 L3.79 9.80 L3.33 9.18 L3.04 8.56 L3.23 8.10 L3.45 7.64 L3.69 7.20 L3.95 6.77 L4.23 6.36 L4.54 5.96 L5.23 5.90 L5.99 5.99 L6.72 6.14 L7.34 6.25 L7.65 6.01 L7.97 5.79 L8.30 5.59 L8.64 5.41 L8.99 5.24 L9.35 5.09 L9.56 4.50 L9.80 3.79 L10.11 3.09 L10.50 2.52 L11.00 2.45 L11.50 2.41 L12.00 2.40Z"/><circle cx="12" cy="12" r="2.9"/></g></svg>
<svg style="left:3700.0px;top:29.0px;border-radius:50%;overflow:hidden" width="64" height="64" viewBox="0 0 64 64"><defs><linearGradient id="sky" x1="0" y1="0" x2="0" y2="1"><stop offset="0" stop-color="#3f78c8"/><stop offset="1" stop-color="#7fa8e0"/></linearGradient></defs>
<rect width="64" height="64" fill="url(#sky)"/>
<path d="M22 12h5v-4h3v4h6v-4h3v4h4v16H22z" fill="#d9d2c0"/>
<path d="M26 16h3v8h-3zM36 16h3v8h-3z" fill="#8a8676"/>
<rect x="0" y="28" width="64" height="8" fill="#8d8f86"/>
<path d="M0 34h64v30H0z" fill="#3a4150"/>
<path d="M0 40h64M0 46h64M0 52h64" stroke="#566070" stroke-width="2"/>
<path d="M4 30h6v6H4zM12 31h4v5h-4zM48 30h10v6H48z" fill="#2a303c"/>
<path d="M26 30q6 -6 12 0l4 22q-2 10 -12 10t-10 -12z" fill="#1b2230"/>
<circle cx="32" cy="29" r="4.5" fill="#d7b9a5"/>
<path d="M27 28q5 -7 10 0v-3q-5 -5 -10 0z" fill="#15181f"/>
<path d="M40 46l8 6-2 6-10-4z" fill="#c8ccd4"/>
</svg>
<div class="a" style="left:0;top:0;width:3840px;height:1918px;background:rgba(0,2,10,.52)"></div>
<div class="a" style="left:1120px;top:264px;width:1600px;height:1392px;background:#fff;border-radius:8px"></div>
<div class="a" style="left:1120px;top:358px;width:1600px;height:2px;background:#e1e3ea"></div>
<div class="t" style="left:1120px;width:1600px;text-align:center;top:289.5px;font-size:32px;line-height:46px;color:#1c1f2b">用户地理分布</div>
<svg style="left:2660px;top:303px" width="16" height="16" viewBox="0 0 16 16"><path d="M1 1l14 14M15 1L1 15" stroke="#1c1f2b" stroke-width="2" fill="none"/></svg>
<svg style="left:1160px;top:408px;overflow:hidden" width="1520" height="1200" viewBox="0 0 1520 1200" font-family="Liberation Sans, sans-serif"><defs>
<linearGradient id="pg" x1="0" y1="0" x2="0" y2="1"><stop offset="0" stop-color="#6299f5"/><stop offset=".55" stop-color="#4c89ea"/><stop offset="1" stop-color="#3a78de"/></linearGradient>
<radialGradient id="halo"><stop offset="0" stop-color="#6a78ff" stop-opacity=".105"/><stop offset=".35" stop-color="#6a78ff" stop-opacity=".07"/><stop offset=".7" stop-color="#6a78ff" stop-opacity=".03"/><stop offset="1" stop-color="#6a78ff" stop-opacity="0"/></radialGradient>
<radialGradient id="halo2"><stop offset="0" stop-color="#a9b9f5" stop-opacity=".95"/><stop offset=".5" stop-color="#c4cdf7" stop-opacity=".6"/><stop offset="1" stop-color="#dfe3fa" stop-opacity="0"/></radialGradient>
<radialGradient id="hcyan"><stop offset="0" stop-color="#8ff0e6" stop-opacity=".95"/><stop offset=".35" stop-color="#8fdcf5" stop-opacity=".85"/><stop offset=".7" stop-color="#a9c0f7" stop-opacity=".5"/><stop offset="1" stop-color="#d5dcfa" stop-opacity="0"/></radialGradient>
<radialGradient id="hred"><stop offset="0" stop-color="#e8261a"/><stop offset=".22" stop-color="#f0561c"/><stop offset=".36" stop-color="#f5c21a"/><stop offset=".5" stop-color="#c5e82a"/><stop offset=".64" stop-color="#6fe06a"/><stop offset=".78" stop-color="#7fe0d8" stop-opacity=".85"/><stop offset=".9" stop-color="#a9c0f7" stop-opacity=".5"/><stop offset="1" stop-color="#d5dcfa" stop-opacity="0"/></radialGradient>
<radialGradient id="hgrn"><stop offset="0" stop-color="#d4ea2c" stop-opacity=".95"/><stop offset=".35" stop-color="#8fe45a" stop-opacity=".9"/><stop offset=".65" stop-color="#86dce8" stop-opacity=".6"/><stop offset="1" stop-color="#a9c0f7" stop-opacity="0"/></radialGradient>
<radialGradient id="hyel"><stop offset="0" stop-color="#f7dc16"/><stop offset=".25" stop-color="#e4ec1c"/><stop offset=".45" stop-color="#9fe63a"/><stop offset=".62" stop-color="#6fe08a"/><stop offset=".78" stop-color="#86dce8" stop-opacity=".8"/><stop offset=".9" stop-color="#a9c0f7" stop-opacity=".5"/><stop offset="1" stop-color="#d5dcfa" stop-opacity="0"/></radialGradient>
<g id="pin"><ellipse cx="0" cy="0.5" rx="7.5" ry="2.6" fill="#8b8384" opacity=".5"/><path d="M0 0C-2.5 -9 -18.9 -24 -18.9 -41.2A18.9 18.9 0 1 1 18.9 -41.2C18.9 -24 2.5 -9 0 0Z" fill="url(#pg)" stroke="#3d74d4" stroke-opacity=".55" stroke-width="1"/></g>
</defs><rect width="1520" height="1200" fill="#f7f7f7"/><path d="M1520.0 296.7 L1502.3 306.0 L1495.3 317.6 L1490.6 334.0 L1486.0 347.9 L1479.0 357.3 L1467.3 368.9 L1455.7 378.2 L1444.0 385.2 L1432.4 391.1 L1427.7 399.2 L1425.4 408.6 L1430.0 415.5 L1444.0 422.5 L1451.0 431.9 L1455.7 443.5 L1462.7 455.2 L1469.7 466.8 L1476.6 478.5 L1480.8 490.1 L1482.5 506.5 L1484.1 525.1 L1483.1 532.0 L1480.5 540.7 L1473.5 551.2 L1464.8 560.0 L1452.5 563.5 L1438.5 567.0 L1426.3 575.7 L1412.3 584.4 L1398.3 587.9 L1387.8 582.7 L1382.6 570.5 L1387.8 560.0 L1394.8 549.5 L1398.3 539.0 L1396.9 532.0 L1397.4 532.1 L1402.1 520.4 L1397.4 508.8 L1390.4 499.5 L1399.7 490.1 L1406.7 478.5 L1399.7 469.2 L1388.1 464.5 L1376.4 459.8 L1367.1 464.5 L1355.4 455.2 L1347.3 452.8 L1350.8 443.5 L1357.8 436.5 L1364.8 427.2 L1362.4 417.9 L1367.1 408.6 L1362.4 401.6 L1348.4 394.6 L1337.9 384.1 L1338.2 383.0 L1329.8 390.7 L1315.8 392.1 L1301.8 397.7 L1292.0 403.3 L1285.0 408.9 L1273.8 414.5 L1265.5 418.7 L1258.5 421.5 L1254.3 415.9 L1259.9 407.5 L1268.3 396.3 L1275.2 385.1 L1278.7 374.0 L1278.0 365.6 L1275.2 360.0 L1266.9 353.0 L1254.3 351.6 L1245.9 353.7 L1237.5 360.0 L1231.9 369.8 L1229.1 375.4 L1217.9 379.6 L1206.7 390.7 L1198.3 399.1 L1194.1 404.7 L1185.7 413.1 L1174.5 415.9 L1166.2 421.5 L1156.4 429.9 L1148.0 438.3 L1152.2 443.9 L1155.0 448.1 L1166.2 450.9 L1180.1 452.3 L1187.1 456.5 L1194.1 460.7 L1195.5 464.9 L1187.1 471.9 L1185.7 477.5 L1192.7 483.0 L1198.3 487.2 L1206.7 485.8 L1217.9 477.5 L1229.1 466.3 L1237.5 463.2 L1245.9 466.3 L1254.3 471.9 L1273.8 473.3 L1285.0 477.5 L1290.6 478.2 L1287.8 485.8 L1285.0 492.8 L1273.8 497.0 L1259.9 502.6 L1245.9 508.2 L1238.9 512.0 L1286.4 492.0 L1273.8 497.6 L1259.9 501.8 L1245.9 507.4 L1237.5 514.4 L1229.1 522.8 L1217.9 532.6 L1209.5 539.6 L1203.9 547.9 L1198.3 554.9 L1194.1 563.3 L1195.5 568.2 L1203.9 571.7 L1215.1 584.3 L1226.3 601.1 L1231.9 610.9 L1236.1 620.7 L1241.7 629.1 L1250.1 640.3 L1259.9 652.8 L1266.9 672.0 L1282.2 693.3 L1263.6 709.6 L1244.9 716.6 L1268.2 730.6 L1286.9 735.2 L1277.6 753.9 L1270.6 777.2 L1261.2 800.5 L1249.6 819.1 L1235.6 833.1 L1221.6 851.8 L1207.6 865.8 L1193.6 884.4 L1179.6 898.4 L1165.7 917.1 L1151.7 926.4 L1137.7 940.4 L1123.7 949.7 L1105.0 959.0 L1086.4 963.7 L1067.7 968.3 L1058.4 973.0 L1049.1 977.7 L1035.1 980.0 L1021.1 977.7 L1002.5 987.0 L983.8 996.3 L965.2 1001.0 L946.5 1005.7 L939.5 1012.6 L944.2 1036.0 L932.5 1038.3 L923.2 1019.6 L913.9 1005.7 L895.2 996.3 L876.6 996.3 L862.6 1001.0 L853.3 1005.7 L839.3 1019.6 L825.3 1038.3 L811.3 1061.6 L809.0 1075.6 L820.6 1094.2 L829.9 1112.9 L839.3 1131.5 L853.3 1150.2 L871.9 1168.8 L890.6 1182.8 L899.9 1200.1 L1520.0 1200.1 L1520.0 600.0Z" fill="#bbcffb"/><path d="M82.8 1200.0 L97.4 1175.0 L116.9 1155.5 L142.9 1149.0 L168.9 1123.1 L194.9 1100.3 L207.9 1085.7 L220.9 1067.8 L230.6 1051.6 L240.4 1046.7 L256.6 1041.9 L272.9 1028.9 L281.0 1015.9 L276.1 1006.1 L285.8 996.4 L302.1 991.5 L311.8 983.4 L324.8 989.9 L341.1 991.5 L357.3 985.0 L370.3 983.4 L383.3 973.6 L396.3 968.8 L406.0 959.0 L414.1 963.9 L417.4 980.1 L422.3 996.4 L432.0 1012.6 L438.5 1028.9 L448.3 1041.9 L461.2 1058.1 L467.7 1074.3 L477.5 1087.3 L487.2 1106.8 L490.5 1126.3 L488.9 1145.8 L485.6 1162.0 L497.0 1163.7 L506.7 1158.8 L526.2 1149.0 L533.0 1134.4 L549.2 1126.3 L565.5 1123.1 L573.6 1131.2 L580.1 1149.0 L585.0 1171.8 L589.8 1188.0 L593.1 1200.0Z" fill="#bbcffb"/><path d="M1265.3 881.1 L1271.2 887.6 L1267.0 905.4 L1260.5 928.2 L1252.3 950.9 L1245.8 967.1 L1240.0 985.0 L1234.5 976.9 L1228.0 963.9 L1218.2 950.9 L1216.6 937.9 L1221.5 921.7 L1229.6 905.4 L1239.3 892.4 L1252.3 884.3Z" fill="#f7f7f7"/><path d="M896.8 1067.8 L909.8 1051.6 L929.3 1041.9 L948.8 1038.6 L956.9 1045.1 L955.3 1058.1 L948.8 1074.3 L939.0 1087.3 L922.8 1095.5 L906.5 1093.8 L895.2 1084.1 L893.5 1074.3Z" fill="#f7f7f7"/><path d="M1236.1 1085.7 L1245.8 1084.1 L1262.1 1090.6 L1271.8 1093.8 L1280.0 1089.0 L1281.6 1103.6 L1276.7 1113.3 L1284.8 1126.3 L1281.6 1142.6 L1271.8 1155.5 L1262.1 1162.0 L1252.3 1165.3 L1255.6 1181.5 L1262.1 1200.0 L1216.6 1200.0 L1211.7 1181.5 L1210.1 1162.0 L1219.9 1152.3 L1228.0 1155.5 L1226.4 1139.3 L1229.6 1123.1 L1226.4 1110.1 L1232.9 1097.1Z" fill="#f7f7f7"/><path d="M1520.0 598.4 L1510.2 601.9 L1499.7 608.9 L1489.2 615.9 L1482.2 622.9 L1492.7 629.9 L1499.7 640.4 L1498.0 650.9 L1503.2 661.4 L1506.7 671.9 L1503.2 682.3 L1508.5 689.3 L1517.2 692.8 L1520.0 694.6Z" fill="#f7f7f7"/><path d="M1390.0 615.0 L1396.0 611.0 L1406.0 610.0 L1412.0 613.0 L1410.0 619.0 L1400.0 622.0 L1392.0 621.0Z" fill="#f7f7f7"/><path d="M1096.4 1006.1 L1102.9 1004.5 L1106.8 1009.4 L1104.5 1014.2 L1098.0 1013.3Z" fill="#f7f7f7"/><path d="M168.2 58.4 L182.0 54.9 L195.7 61.8 L209.4 68.7 L212.9 79.0 L202.6 80.7 L188.8 72.1 L175.1 67.0Z" fill="#bdd0fb"/><path d="M187.1 53.2 L180.3 41.2 L187.1 29.2 L206.0 17.2 L195.7 6.9 L185.4 0.0 L192.3 0.0 L200.9 5.2 L210.1 16.5 L192.3 30.2 L185.4 41.2 L192.3 51.5Z" fill="#bdd0fb"/><path d="M0.0 285.0 L20.6 279.8 L30.9 281.5 L20.6 291.8 L6.9 300.4 L0.0 298.7Z" fill="#bdd0fb"/><path d="M0.0 127.0 L20.6 123.6 L41.2 118.5 L58.4 118.5 L60.1 125.3 L44.6 130.5 L34.3 137.3 L20.6 132.2 L0.0 130.5Z" fill="#bdd0fb"/><path d="M121.9 132.2 L133.9 135.6 L140.8 151.1 L144.2 161.4 L135.6 157.9 L123.6 147.6Z" fill="#bdd0fb"/><path d="M240.3 34.3 L252.4 32.6 L250.6 37.8 L242.1 39.5Z" fill="#bdd0fb"/><path d="M446.4 12.0 L460.1 10.3 L472.1 18.9 L470.4 25.8 L458.4 24.0 L448.1 18.9Z" fill="#bdd0fb"/><path d="M429.2 53.2 L442.9 51.5 L444.6 63.5 L432.6 75.5 L422.3 77.3 L420.6 65.2Z" fill="#bdd0fb"/><path d="M451.5 60.1 L461.8 58.4 L460.1 68.7 L453.2 70.4Z" fill="#bdd0fb"/><path d="M0.0 226.6 L13.7 223.2 L32.6 236.9 L20.6 240.3 L6.9 238.6 L0.0 236.9Z" fill="#bdd0fb"/><path d="M240.3 67.0 L267.8 73.8 L291.8 89.3 L322.7 99.6 L351.9 109.9 L353.6 101.3 L367.4 94.4 L370.1 82.4M839.3 441.9 L841.0 381.1 L853.0 360.5 L868.5 350.2 L880.5 350.9 L897.7 360.5 L918.3 363.9 L937.2 362.2 L959.5 372.5 L969.8 381.1 L973.2 394.8 L966.4 410.3 L952.6 422.3 L945.8 441.9M393.1 613.5 L396.6 586.0 L417.2 586.0 L422.3 591.1 L432.6 587.7 L442.9 594.6 L456.7 589.4 L473.8 587.7 L480.7 577.4 L494.4 570.5 L515.0 579.1 L528.8 594.6 L542.5 604.9 L560.0 618.6M0.0 587.7 L13.7 594.6 L30.9 610.0 L44.6 625.5 L61.8 632.3 L73.8 647.8 L89.3 644.4 L103.0 644.4 L116.7 654.7 L121.9 663.2 L116.7 675.3 L127.0 685.6M566.4 563.7 L585.2 558.5 L604.1 570.5 L602.4 579.1 L619.6 579.1 L623.0 598.0 L636.7 606.6 L657.3 610.0 L677.9 604.9 L681.4 594.6 L667.6 587.7 L655.6 570.5 L653.9 539.6 L664.2 527.6 L684.8 524.2 L698.5 520.8 L708.8 532.8 L726.0 532.8 L743.2 527.6 L760.3 512.2 L780.9 498.4 L791.2 486.4 L774.1 474.4 L794.7 469.3 L818.7 457.2 L829.0 443.5 L841.0 426.3 L844.5 409.2 L841.0 392.0M760.3 773.1 L774.1 769.7 L794.7 766.2 L811.8 761.1 L835.9 749.1 L859.9 735.3 L866.8 718.2 L883.9 702.7 L897.7 699.3 L932.0 695.9 L962.9 707.9 L980.1 721.6 L1000.7 737.1 L1014.4 735.3 L1035.0 731.9 L1048.8 718.2 L1055.6 707.9M520.0 580.8 L533.7 598.0 L554.3 611.7 L571.5 632.3M593.8 730.2 L602.4 745.6 L611.0 761.1 L609.3 776.5M960.0 562.0 L990.9 555.1 L1021.8 567.1 L1056.1 563.7 L1080.2 543.1 L1104.2 529.3 L1121.4 505.3 L1145.4 481.3 L1166.0 471.0 L1190.0 464.1M960.0 701.0 L973.7 714.7 L994.3 721.6 L1011.5 735.3 L1032.1 731.9 L1049.3 711.3 L1063.0 721.6 L1090.5 731.9 L1114.5 735.3 L1131.7 721.6 L1152.3 701.0 L1169.4 680.4 L1172.9 666.7 L1193.5 663.2 L1220.9 670.1 L1248.4 677.0 L1269.0 687.3M617.4 782.0 L620.7 808.0 L627.2 830.7 L632.1 863.2 L649.9 895.7 L656.4 921.7 L653.2 944.4 L662.9 970.4 L672.7 989.9M588.2 782.0 L589.8 808.0 L585.0 840.5 L575.2 866.5 L568.7 885.9 L562.2 911.9 L552.5 928.2 L539.5 944.4M607.7 937.9 L606.1 976.9 L611.0 1009.4 L607.7 1041.9 L598.0 1074.3 L585.0 1106.8 L568.7 1123.1M974.8 946.0 L994.2 947.7 L1020.2 947.7M35.7 782.0 L65.0 814.5 L91.0 840.5 L116.9 863.2 L142.9 879.4 L165.7 885.9 L188.4 869.7 L211.1 864.8 L240.4 873.0 L266.4 879.4 L292.3 876.2 L308.6 885.9 L315.1 905.4" fill="none" stroke="#b9cdfc" stroke-width="2" stroke-linejoin="round"/><path d="M560.0 801.5 L539.2 814.5 L519.7 798.2 L506.7 817.7 L480.7 834.0 L448.3 837.2 L406.0 842.1 L373.5 850.2 L360.6 860.0 L355.7 882.7 L357.3 905.4" fill="none" stroke="#bdd0fb" stroke-width="5" stroke-linejoin="round"/><path d="M569.9 975.1 L578.3 968.8 L587.8 964.4M581.3 946.7 L591.2 956.7M591.2 956.7 L587.8 964.4M623.9 980.1 L617.2 986.3 L610.0 992.0 L603.7 998.6M623.9 980.1 L618.3 968.8 L612.5 957.5M603.7 998.6 L599.5 990.2 L596.2 981.3 L591.2 973.2 L587.8 964.4M591.2 956.7 L595.3 955.3M612.5 957.5 L595.3 955.3M584.2 1158.6 L587.6 1159.9M590.9 1184.7 L596.9 1183.9M587.6 1159.9 L592.3 1171.8 L596.9 1183.9M603.6 1200.0 L605.8 1192.8M596.9 1183.9 L605.8 1192.8M565.4 1082.6 L560.0 1083.1M565.4 1082.6 L560.0 1069.5M671.9 1135.1 L675.3 1125.3 L677.2 1115.0M671.9 1135.1 L665.5 1139.7M665.5 1139.7 L655.9 1135.5 L646.5 1130.6M646.5 1130.6 L645.3 1120.5 L646.1 1110.3M677.2 1115.0 L670.3 1108.3 L661.9 1103.5M646.1 1110.3 L661.9 1103.5M587.0 1111.5 L577.3 1106.6 L567.2 1103.1M587.0 1111.5 L594.5 1102.9 L602.6 1095.0M602.6 1095.0 L591.6 1089.3 L581.1 1082.9M567.2 1103.1 L571.9 1087.6M571.9 1087.6 L581.1 1082.9M590.2 1125.8 L577.5 1136.1M590.2 1125.8 L587.0 1111.5M560.0 1108.8 L567.2 1103.1M565.4 1082.6 L571.9 1087.6M560.0 1061.2 L571.9 1061.3 L583.9 1061.2M581.1 1082.9 L584.2 1072.7 L586.6 1062.4M583.9 1061.2 L586.6 1062.4M560.0 1040.9 L567.5 1036.1M583.9 1061.2 L577.7 1053.3 L571.6 1045.3 L567.5 1036.1M700.2 1005.3 L705.3 1008.2M705.6 973.8 L698.4 980.6M705.6 973.8 L716.9 976.5 L727.7 980.8M727.7 980.8 L725.4 990.5 L724.8 1000.3M705.3 1008.2 L714.7 1003.2 L724.8 1000.3M705.6 973.8 L706.2 970.8M665.3 1003.1 L680.2 1004.9M665.3 1003.1 L665.0 998.5M812.3 1200.0 L809.0 1188.4M809.0 1188.4 L820.6 1185.2 L832.4 1182.3M832.4 1182.3 L844.4 1189.8M845.5 1200.0 L844.4 1189.8M590.2 1125.8 L602.3 1126.6 L614.1 1129.5M614.1 1129.5 L616.5 1134.2M587.6 1159.9 L595.1 1156.8M595.1 1156.8 L601.6 1148.6 L608.6 1141.0 L616.5 1134.2M605.8 1192.8 L618.4 1186.2M595.1 1156.8 L604.8 1160.4 L614.6 1163.6 L623.7 1168.4M618.4 1186.2 L619.6 1176.9 L623.7 1168.4M616.5 1134.2 L625.2 1139.9M625.2 1139.9 L629.3 1149.3 L631.0 1159.5M623.7 1168.4 L631.0 1159.5M665.5 1139.7 L664.5 1150.9 L661.4 1161.6M646.5 1130.6 L635.9 1135.3 L625.2 1139.9M661.4 1161.6 L652.5 1164.7M652.5 1164.7 L641.4 1163.5 L631.0 1159.5M677.2 1115.0 L688.0 1110.4M688.0 1110.4 L687.4 1097.7 L689.8 1085.2M689.8 1085.2 L686.1 1081.5M661.9 1103.5 L662.1 1088.1M686.1 1081.5 L674.2 1085.0 L662.1 1088.1M784.0 1109.0 L793.3 1115.3 L802.2 1122.0M784.0 1109.0 L788.4 1100.4 L790.4 1090.7 L795.5 1082.5M802.2 1122.0 L811.0 1114.5 L820.1 1107.5M797.1 1081.9 L811.1 1082.8M820.1 1107.5 L817.7 1093.4M736.2 1130.1 L730.6 1138.2 L725.7 1146.9 L718.7 1154.0M736.2 1130.1 L743.3 1136.6 L752.1 1140.7M718.7 1154.0 L729.4 1155.7 L740.1 1157.9 L750.3 1161.7M752.1 1140.7 L751.3 1151.2 L750.3 1161.7M772.1 1111.7 L771.2 1123.5 L768.3 1134.8M772.1 1111.7 L765.8 1108.1M765.8 1108.1 L754.6 1109.4 L743.7 1112.0 L732.5 1113.2M732.5 1113.2 L736.2 1130.1M768.3 1134.8 L752.1 1140.7M594.8 921.8 L605.0 928.7M605.0 928.7 L608.9 926.7M595.3 955.3 L597.4 946.0 L600.4 937.1 L605.0 928.7M636.3 1090.6 L636.2 1105.5M636.3 1090.6 L627.5 1082.4 L617.9 1075.3M636.2 1105.5 L627.3 1109.4 L617.8 1112.0M617.8 1112.0 L612.6 1102.9 L605.9 1094.8M605.9 1094.8 L611.8 1085.0 L617.9 1075.3M646.1 1110.3 L636.2 1105.5M655.2 1080.0 L662.1 1088.1M655.2 1080.0 L645.1 1084.1 L636.3 1090.6M614.1 1129.5 L617.8 1112.0M602.6 1095.0 L605.9 1094.8M567.0 982.5 L575.1 992.9 L582.1 1004.1M560.0 1013.3 L567.0 1016.5M582.1 1004.1 L575.0 1010.9 L567.0 1016.5M567.5 1036.1 L570.4 1031.6M567.0 1016.5 L570.4 1031.6M586.6 1062.4 L600.2 1055.8M617.9 1075.3 L618.2 1065.2M618.2 1065.2 L608.9 1061.2 L600.2 1055.8M752.6 1005.1 L753.6 993.5 L752.5 981.9M752.6 1005.1 L744.8 1008.0M727.7 980.8 L737.8 974.3M744.8 1008.0 L735.0 1003.8 L724.8 1000.3M752.5 981.9 L737.8 974.3M734.1 1030.0 L719.7 1032.2M734.1 1030.0 L739.0 1018.8 L744.8 1008.0M705.3 1008.2 L711.3 1024.5M711.3 1024.5 L719.7 1032.2M679.2 1028.1 L681.6 1017.4 L686.5 1007.4M679.2 1028.1 L692.6 1039.0M711.3 1024.5 L701.6 1031.3 L692.6 1039.0M752.6 1005.1 L766.5 1012.4M766.5 1012.4 L779.1 1008.1 L790.3 1001.0M752.5 981.9 L762.6 975.7 L772.4 968.9M772.4 968.9 L787.4 978.8M787.4 978.8 L790.4 989.7 L790.3 1001.0M612.5 957.5 L625.1 950.0M623.9 980.1 L629.1 980.7M767.2 1026.5 L781.4 1034.5M767.2 1026.5 L766.5 1012.4M790.4 1001.1 L797.1 1012.3 L801.0 1024.8M801.0 1024.8 L791.8 1030.8 L781.4 1034.5M628.1 1190.4 L637.3 1186.4 L647.2 1184.4M628.1 1190.4 L634.3 1200.0M647.2 1184.4 L654.3 1191.3 L659.1 1200.0M618.4 1186.2 L628.1 1190.4M652.5 1164.7 L651.2 1174.9 L647.2 1184.4M661.4 1161.6 L669.3 1168.3 L677.7 1174.1M677.7 1174.1 L681.5 1183.5M681.5 1183.5 L671.2 1190.8 L662.5 1200.0M688.0 1110.4 L697.8 1112.4 L707.0 1116.3M689.8 1085.2 L699.0 1086.2 L707.9 1084.2M707.0 1116.3 L716.5 1112.0 L726.0 1107.8M726.0 1107.8 L725.6 1095.4M707.9 1084.2 L716.2 1090.6 L725.6 1095.4M684.6 1060.8 L684.0 1071.3 L686.1 1081.5M684.6 1060.8 L693.1 1055.7M693.1 1055.7 L708.7 1057.5M707.9 1084.2 L709.7 1070.9 L708.7 1057.5M719.7 1032.2 L719.3 1043.6 L716.0 1054.5M693.1 1055.7 L692.6 1039.0M708.7 1057.5 L716.0 1054.5M787.2 1153.2 L794.9 1158.3 L801.8 1164.4M787.0 1153.2 L777.5 1161.4 L768.5 1170.1M801.8 1164.4 L801.1 1174.7 L803.2 1184.8M803.2 1184.8 L794.9 1190.6 L785.4 1194.0M785.4 1194.0 L776.8 1186.0 L769.1 1177.1M769.1 1177.1 L768.5 1170.1M772.1 1111.7 L784.0 1109.0M803.3 1128.9 L797.0 1136.4 L793.6 1145.8 L787.2 1153.2M803.3 1128.9 L802.2 1122.0M768.3 1134.8 L777.9 1143.8 L787.0 1153.2M750.7 1162.5 L759.8 1165.8 L768.5 1170.1M750.7 1162.5 L743.8 1171.4 L737.8 1180.9M737.8 1180.9 L745.6 1187.9 L755.0 1192.6M755.0 1192.6 L761.3 1184.1 L769.1 1177.1M814.8 1051.9 L808.9 1044.0M825.7 1027.0 L829.1 1029.9M825.7 1027.0 L811.5 1033.3M808.9 1044.0 L811.5 1033.3M797.1 1081.9 L798.7 1071.3 L799.4 1060.6 L799.5 1049.8M799.5 1049.8 L808.9 1044.0M801.0 1024.8 L811.5 1033.3M799.5 1049.8 L785.3 1049.6M781.4 1034.5 L785.3 1049.6M697.5 1200.0 L697.5 1191.7M697.5 1191.7 L707.2 1188.3 L716.0 1183.0M722.0 1185.7 L716.0 1183.0M722.0 1185.7 L729.1 1200.0M681.5 1183.5 L697.5 1191.7M754.7 1200.0 L755.0 1192.6M737.8 1180.9 L722.0 1185.7M718.6 1154.1 L711.5 1143.4 L704.1 1133.0M718.6 1154.1 L716.3 1157.7M716.3 1157.7 L704.9 1155.6 L693.4 1156.2M704.1 1133.0 L696.0 1137.5 L687.5 1141.3M687.5 1141.3 L693.4 1156.2M707.0 1116.3 L704.1 1133.0M732.5 1113.2 L726.0 1107.8M716.0 1183.0 L715.9 1170.3 L716.3 1157.7M677.7 1174.1 L684.9 1164.6 L693.4 1156.2M671.9 1135.1 L687.5 1141.3M639.7 984.2 L640.9 994.1 L643.8 1003.6M665.3 1003.1 L649.1 1009.6M643.8 1003.6 L649.1 1009.6M585.7 1032.9 L588.7 1023.3 L591.0 1013.5 L594.7 1004.1M585.7 1032.9 L598.5 1041.1M598.5 1041.1 L604.7 1031.6 L612.6 1023.4M612.6 1023.4 L608.0 1006.7M608.0 1006.7 L603.2 1001.4M603.2 1001.4 L594.7 1004.1M582.1 1004.1 L594.7 1004.1M570.4 1031.6 L585.7 1032.9M600.2 1055.8 L598.5 1041.1M643.8 1003.6 L631.8 1003.9 L619.9 1005.3 L608.0 1006.7M628.1 1059.5 L630.7 1050.9 L631.7 1041.8 L634.1 1033.1M628.1 1059.5 L640.7 1062.9 L653.3 1066.4M666.0 1054.7 L653.3 1066.4M666.0 1054.7 L663.1 1037.7M663.1 1037.7 L654.5 1032.6 L647.2 1025.7M647.2 1025.7 L634.1 1033.1M618.2 1065.2 L628.1 1059.5M612.6 1023.4 L623.1 1028.9 L634.1 1033.1M655.2 1080.0 L653.3 1066.4M684.6 1060.8 L674.8 1059.2 L666.0 1054.7M679.2 1028.1 L671.2 1033.0 L663.1 1037.7M649.1 1009.6 L647.2 1025.7M794.5 947.4 L806.9 958.2M772.4 968.9 L771.1 961.9M787.4 978.8 L799.4 971.2M806.9 958.2 L799.4 971.2M828.3 956.1 L825.1 957.8M829.4 1017.2 L837.2 1009.8 L843.8 1001.2M829.4 1017.2 L821.7 1010.8 L812.6 1006.4 L805.3 999.4M805.3 999.4 L815.3 991.9 L826.2 985.8M843.8 1001.2 L844.1 988.5M826.2 985.8 L836.9 984.7M843.9 988.4 L836.9 984.7M849.4 1006.7 L843.8 1001.2M825.7 1027.0 L829.4 1017.2M790.4 1001.1 L805.3 999.4M799.4 971.2 L807.8 977.0 L817.1 981.3 L826.2 985.8M806.9 958.2 L813.2 955.3M825.1 957.8 L828.0 967.3 L831.9 976.2 L836.9 984.7M737.8 974.3 L736.1 963.8M785.4 1194.0 L784.0 1200.0M809.0 1188.4 L803.2 1184.8M848.3 1185.6 L858.4 1185.5 L868.5 1187.0 L878.6 1186.5 L888.8 1185.7M848.3 1185.6 L851.8 1176.6 L856.3 1167.9M856.3 1167.9 L864.9 1164.6M820.1 1107.5 L826.3 1110.2M844.4 1189.8 L848.3 1185.6M889.2 1187.0 L881.5 1200.0M728.5 1061.7 L732.2 1071.4 L735.1 1081.3M728.5 1061.7 L735.3 1055.2 L743.5 1050.6 L751.3 1045.4M735.1 1081.3 L747.5 1080.7 L759.4 1077.3M754.7 1045.9 L762.3 1054.5 L767.8 1064.5M754.7 1045.9 L751.3 1045.4M759.4 1077.3 L767.9 1067.4M725.6 1095.4 L735.1 1081.3M716.0 1054.5 L728.5 1061.7M734.1 1030.0 L742.6 1037.9 L751.3 1045.4M765.8 1108.1 L762.5 1098.1 L760.2 1087.8 L759.4 1077.3M767.2 1026.5 L760.5 1035.9 L754.7 1045.9M785.3 1049.6 L777.1 1057.7 L767.8 1064.5M795.5 1082.5 L785.6 1078.7 L776.6 1073.4 L767.9 1067.4M934.8 1043.0 L931.4 1058.5M909.8 1054.8 L911.6 1062.4M931.4 1058.5 L917.8 1066.1M911.6 1062.4 L917.8 1066.1M903.5 1062.6 L911.6 1062.4M950.1 1065.8 L940.9 1061.7 L931.4 1058.5M908.7 1092.0 L918.0 1082.2M917.9 1081.6 L907.9 1082.5 L898.0 1083.8M917.8 1066.1 L917.9 1081.6M926.3 1091.5 L918.0 1082.2M823.9 1157.6 L819.6 1147.7 L818.4 1137.1M826.2 1158.5 L840.1 1153.3M818.4 1137.1 L832.7 1129.3M832.7 1129.3 L843.0 1139.8M840.1 1153.3 L845.1 1142.6M803.3 1128.9 L818.4 1137.1M801.8 1164.4 L812.6 1160.1 L823.9 1157.6M832.4 1182.3 L830.8 1170.0 L826.2 1158.5M856.3 1167.9 L847.6 1161.3 L840.1 1153.3M833.4 1124.3 L832.7 1129.3" fill="none" stroke="#9aa1a7" stroke-width="1.7" stroke-linejoin="round"/><path d="M1516.9 601.6 L1516.0 610.8 L1516.0 620.0M1452.5 472.9 L1450.3 457.2M1452.5 472.9 L1459.1 480.7 L1467.3 486.8 L1474.1 494.3M1450.3 457.2 L1459.4 453.6M1474.1 494.3 L1478.8 490.6M1378.3 447.5 L1368.9 443.2M1378.3 447.5 L1385.1 461.1M1368.9 443.2 L1357.3 454.1M1444.5 428.4 L1432.1 418.8M1427.3 415.1 L1424.7 413.1M1444.5 428.4 L1444.0 441.3 L1444.5 454.3M1421.4 455.3 L1433.0 455.5 L1444.5 454.3M1421.4 455.3 L1417.2 445.2 L1411.2 436.0M1424.7 413.1 L1418.4 424.8 L1411.2 436.0M1408.7 477.6 L1416.0 467.0 L1421.4 455.3M1378.3 447.5 L1388.8 444.7 L1398.6 440.2 L1408.4 435.7M1368.9 443.2 L1365.9 429.2M1408.4 435.7 L1402.6 428.1 L1395.8 421.7 L1388.0 416.3M1365.9 429.2 L1377.0 422.8 L1388.0 416.3M1450.3 457.2 L1444.5 454.3M1443.7 563.6 L1449.7 554.1 L1454.7 544.0 L1461.5 535.0M1476.2 543.6 L1461.5 535.0M1407.6 613.0 L1406.2 618.0M1452.5 472.9 L1444.7 479.1 L1437.5 485.9 L1431.4 493.9M1474.1 494.3 L1470.8 505.5M1470.8 505.5 L1462.4 514.9M1431.4 493.9 L1439.2 499.1 L1446.6 504.9 L1454.3 510.2 L1462.4 514.9M1415.9 390.4 L1424.9 396.1M1415.9 390.4 L1415.8 380.0M1424.8 402.4 L1424.9 396.1M1388.0 416.3 L1391.6 404.3 L1393.8 392.0M1393.8 392.0 L1404.8 390.2 L1415.9 390.4M1362.3 399.3 L1370.9 392.2 L1378.3 383.8M1378.3 383.8 L1377.1 380.7M1393.8 392.0 L1378.3 383.8M1461.5 535.0 L1459.4 529.2M1470.8 505.5 L1480.7 509.4M1462.4 514.9 L1459.4 529.2M1436.1 566.2 L1425.9 562.2 L1415.5 558.6M1459.4 529.2 L1449.2 528.4 L1438.9 528.9 L1428.7 528.3M1428.7 528.3 L1423.9 538.3 L1419.1 548.2 L1415.5 558.6M1403.1 584.6 L1398.8 569.6M1398.8 569.6 L1405.7 560.1M1415.5 558.6 L1405.7 560.1M1398.8 569.6 L1385.3 571.7M1398.1 545.9 L1405.7 560.1M1404.9 519.5 L1420.1 520.2M1404.9 519.5 L1406.6 509.5 L1408.2 499.5 L1407.3 489.2 L1410.0 479.4M1420.1 520.2 L1422.7 511.0 L1427.2 502.6 L1430.9 493.9M1410.0 479.4 L1420.2 487.0 L1430.9 493.9M1428.7 528.3 L1420.1 520.2" fill="none" stroke="#9aa1a7" stroke-width="1.7" stroke-linejoin="round"/><path d="M586.3 800.0 L586.6 805.3M539.8 800.0 L541.5 808.2M541.5 808.2 L550.6 808.6 L559.5 806.5 L568.6 806.2 L577.5 804.9 L586.6 805.3M610.6 819.6 L602.5 815.0 L594.3 810.5 L586.6 805.3M535.8 816.5 L540.5 824.8 L542.4 834.3 L547.5 842.5 L548.9 852.2 L554.7 860.1 L556.8 869.5M535.8 816.5 L541.5 808.2M556.8 869.5 L566.8 873.5 L577.3 875.8M595.9 867.5 L586.2 870.7 L577.3 875.8M516.6 1109.6 L521.7 1117.3 L526.2 1125.4 L531.8 1132.8M516.6 1109.6 L503.5 1111.7 L490.2 1112.3M516.6 1109.6 L523.2 1102.3 L528.4 1093.9 L534.0 1085.8 L541.8 1079.5 L546.7 1070.8M546.7 1070.8 L537.6 1066.0 L528.7 1060.9 L520.6 1054.5 L510.9 1050.7 L502.2 1045.3M502.2 1045.3 L493.8 1052.1 L486.9 1060.5 L477.4 1066.2 L470.2 1074.3M490.6 862.6 L498.6 858.1M497.8 826.2 L498.9 836.8 L499.8 847.4 L498.6 858.1M513.5 906.5 L519.2 896.7 L522.1 885.8M513.5 906.5 L504.4 910.6 L494.2 911.3 L485.2 915.7M522.1 885.8 L517.4 877.8 L510.6 871.7 L503.3 866.0 L498.6 858.1M535.8 816.5 L526.6 820.2 L517.0 822.2 L507.4 824.1 L497.8 826.2M556.8 869.5 L548.0 873.3 L538.8 876.3 L531.0 882.1 L522.1 885.8M562.9 947.6 L565.8 937.3 L571.0 928.0 L574.9 918.1M562.9 947.6 L580.0 950.0M513.5 906.5 L521.0 913.3 L527.8 920.7 L533.4 929.3 L539.7 937.1 L547.8 943.3 L553.5 951.8M556.2 952.0 L562.9 947.6M577.3 875.8 L576.8 886.4 L575.4 896.9 L574.6 907.5 L574.9 918.1M556.2 952.0 L560.0 962.3 L562.0 973.3 L566.6 983.4M546.7 1070.8 L559.2 1068.8M559.2 1068.8 L560.0 1054.7M478.8 1008.1 L487.9 1009.7 L496.3 1013.4M478.8 1008.1 L470.3 998.0M519.1 971.3 L515.0 979.7 L511.3 988.2 L507.5 996.7 L505.1 1005.7M519.1 971.3 L511.2 966.2 L502.6 962.2 L494.5 957.2 L487.4 950.8M505.1 1005.7 L496.3 1013.4M487.4 950.8 L476.2 958.8M502.2 1045.3 L500.3 1034.6 L497.2 1024.2 L496.3 1013.4M470.0 1014.7 L478.8 1008.1M553.5 951.8 L544.7 956.3 L536.9 962.7 L527.3 965.7 L519.1 971.3M560.0 1016.7 L550.7 1015.7 L541.4 1014.6 L532.4 1012.2 L523.4 1009.5 L514.3 1007.4 L505.1 1005.7M485.2 915.7 L486.3 927.4 L487.7 939.1 L487.4 950.8" fill="none" stroke="#9aa1a7" stroke-width="1.7" stroke-linejoin="round"/><path d="M1493.1 318.1 L1484.9 323.6 L1476.1 327.8 L1467.9 333.3 L1458.4 336.4 L1449.3 340.2 L1441.6 346.5 L1432.8 350.9M1441.2 380.0 L1439.1 370.1 L1437.0 360.2 L1432.8 350.9M1409.2 321.4 L1416.3 327.9 L1421.9 335.4 L1426.2 344.1 L1432.8 350.9" fill="none" stroke="#9aa1a7" stroke-width="1.7" stroke-linejoin="round"/><path d="M0.0 103.0 L12.0 101.3 L30.2 97.2 L44.6 106.4 L60.1 107.1 L67.0 118.5 L85.8 113.3 L89.3 118.5 L113.3 128.8 L125.3 130.5 L130.5 144.2 L144.2 161.4 L147.0 170.0M12.0 101.3 L12.0 123.6 L0.0 128.8M0.0 322.7 L6.9 324.5 L8.6 333.0 L18.9 338.2 L20.6 342.7M377.7 0.0 L394.8 15.5 L405.2 34.3 L391.4 44.6 L389.7 58.4 L400.0 75.5 L401.7 92.7 L410.3 109.9 L422.3 123.6 L406.9 130.5 L394.8 118.5M405.2 34.3 L418.9 29.2 L432.6 39.5 L446.4 42.9 L456.7 42.9 L465.2 53.2 L460.1 68.7 L467.0 80.7 L480.7 96.1 L485.8 109.9 L470.4 120.2 L468.7 137.3 L458.4 161.4 L454.9 191.2M465.2 53.2 L473.8 37.8 L487.6 34.3 L515.0 30.9 L521.9 17.2 L518.5 0.0M467.0 80.7 L497.9 79.0 L511.6 82.4 L530.5 85.8 L535.6 99.6 L549.4 113.3 L560.0 111.6M0.0 10.3 L5.2 20.6 L1.7 37.8 L6.9 51.5 L0.0 65.2M561.2 0.0 L566.4 8.6 L587.0 22.3 L611.0 24.0 L621.3 18.9 L626.4 30.9 L622.0 53.2 L593.8 67.0 L592.8 70.4 L602.4 82.4 L581.1 127.0 L554.3 121.9 L540.6 113.3 L530.3 87.6 L520.0 84.1M622.0 53.2 L638.5 54.9 L653.9 46.4 L660.8 36.1 L659.1 22.3 L667.6 18.9 L676.2 25.8 L693.4 24.0 L696.8 17.2 L712.3 3.4 L717.4 0.0M693.4 24.0 L707.1 37.8 L717.4 51.5 L727.7 58.4 L731.2 70.4 L743.2 80.7 L748.3 94.4 L760.3 92.7 L780.9 79.0 L775.8 67.0 L770.6 60.1 L777.5 42.9 L780.9 17.2 L784.4 0.0M602.4 82.4 L611.0 79.0 L623.0 84.1 L636.7 85.8 L643.6 92.7 L647.0 103.0 L657.3 104.7 L665.9 115.0 L681.4 115.0 L714.0 110.6 L720.9 103.0 L724.3 92.7 L743.2 94.4M681.4 115.0 L688.2 123.6 L686.5 144.2 L677.9 175.1 L681.4 187.1 L690.0 202.6 L693.4 224.9M581.1 127.0 L583.5 137.3 L599.0 154.5 L604.1 168.2 L602.4 188.8 L593.8 212.9 L583.5 240.3 L585.2 267.8 L587.0 278.1M693.4 224.9 L681.4 231.8 L653.9 232.8 L640.2 226.6 L628.2 225.9 L629.2 260.9 L627.1 284.3M693.4 224.9 L707.1 221.5 L726.0 219.7 L734.6 206.0 L739.7 197.4 L750.7 190.6 L753.5 180.3 L752.8 168.2 L767.2 154.5 L780.9 135.6 L775.8 132.2M760.3 92.7 L767.2 104.7 L777.5 120.2 L775.8 132.2 L791.2 129.8 L811.8 125.3 L817.0 129.8 L837.6 127.0 L854.8 135.6 L873.6 128.8 L883.9 130.5 L892.5 144.2 L901.1 152.8 L892.5 159.7 L887.4 176.8 L890.8 187.1 L887.4 199.1 L868.5 211.2M750.7 190.6 L780.9 199.1 L801.5 202.6 L811.8 212.9 L823.9 223.2 L839.3 219.7 L854.8 211.2 L868.5 211.2 L877.1 240.3 L882.2 267.8 L881.5 290.1M873.6 128.8 L875.4 120.2 L892.5 116.7 L896.0 106.4 L887.4 87.6 L890.8 67.0 L904.5 60.1 L906.3 51.5 L897.7 34.3 L892.5 20.6 L870.2 21.3 L868.5 30.9 L854.8 37.8 L844.5 44.6 L832.4 32.6 L818.7 30.9 L801.5 34.3 L786.1 41.9 L777.5 42.9M896.0 106.4 L904.5 127.0 L909.7 140.1 L930.3 140.8 L935.5 132.2 L944.0 129.8 L957.8 140.8 L969.8 145.9 L973.2 144.2 L970.5 133.9 L976.7 99.6 L990.4 82.4 L999.0 77.3 L1009.3 75.5 L1004.1 48.1 L999.0 20.6 L1002.4 5.2M1009.3 75.5 L1014.4 80.7 L1038.5 84.1 L1055.6 94.4 L1059.1 108.2 L1069.4 120.2 L1080.0 121.9M973.2 144.2 L985.2 151.1 L987.0 168.2 L991.1 187.8M835.2 70.4 L839.3 65.2 L846.2 64.5 L850.3 70.4 L846.2 75.5 L839.3 75.5 L835.2 70.4M1009.8 75.5 L1025.2 80.7 L1045.8 85.8 L1057.9 96.1 L1059.6 109.9 L1069.9 121.9 L1095.6 121.9 L1116.2 128.8 L1120.3 137.3M1001.2 1.7 L999.5 20.6 L1006.4 51.5 L1009.8 75.5M0.0 851.8 L13.0 847.0 L32.5 830.7 L48.7 835.6 L58.5 847.0 L48.7 866.5 L39.0 879.4 L32.5 895.7 L43.9 911.9 L52.0 903.8 L50.3 879.4 L65.0 882.7 L84.5 879.4 L107.2 885.9 L136.4 885.9 L155.9 898.9 L159.2 915.2 L175.4 918.4M175.4 918.4 L178.7 879.4 L194.9 869.7 L211.1 866.5 L194.9 851.8 L198.1 840.5 L207.9 835.6 L194.9 814.5 L191.6 811.2M175.4 918.4 L191.6 931.4 L194.9 944.4 L207.9 950.9 L199.8 967.1 L181.9 983.4 L175.4 1006.1 L152.7 1015.9 L155.9 1038.6 L162.4 1045.1 L139.7 1041.9 L146.2 1058.1 L142.9 1080.8 L129.9 1100.3 L110.4 1106.8M175.4 918.4 L159.2 923.3 L129.9 933.0 L142.9 944.4 L129.9 970.4 L110.4 973.6 L103.9 996.4 L97.4 1009.4 L100.7 1038.6 L110.4 1058.1 L94.2 1067.8 L91.0 1080.8 L103.9 1090.6 L110.4 1106.8M0.0 989.9 L19.5 996.4 L42.2 989.9 L65.0 996.4 L91.0 993.1 L103.9 996.4M191.6 931.4 L211.1 905.4 L227.4 908.7 L259.9 902.2 L282.6 885.9 L302.1 895.7 L305.3 876.2 L302.1 856.7 L311.8 843.7M207.9 950.9 L227.4 963.9 L250.1 934.7 L269.6 931.4 L292.3 915.2 L308.6 902.2M199.8 967.1 L227.4 980.1 L253.4 967.1 L269.6 973.6 L282.6 986.6 L295.6 991.5M110.4 1106.8 L129.9 1093.8 L149.4 1087.3 L168.9 1080.8 L181.9 1067.8 L201.4 1074.3 L216.0 1067.8M0.0 1200.0 L9.7 1139.3 L16.2 1093.8 L22.7 1067.8 L35.7 1048.4 L58.5 1051.6 L78.0 1058.1 L84.5 1074.3 L94.2 1067.8M9.7 782.0 L16.2 821.0 L9.7 834.0 L0.0 840.5M497.0 866.5 L477.5 873.0 L461.2 879.4 L449.9 902.2 L453.1 921.7M516.5 824.2 L506.7 856.7 L497.0 866.5M480.7 924.9 L487.2 963.9 L480.7 989.9 L480.7 1015.9 L467.7 1022.4 L448.3 1009.4 L438.5 1002.9M480.7 1015.9 L493.7 1041.9 L503.5 1074.3 L501.9 1119.8 L493.7 1126.3M480.7 963.9 L493.7 983.4 L519.7 989.9 L506.7 1006.1 L500.2 1022.4 L506.7 1041.9 L519.7 1022.4 L545.7 1009.4 L560.0 1015.9M503.5 1074.3 L519.7 1084.1 L532.7 1106.8 L536.0 1126.3 L532.7 1139.3M360.6 860.0 L383.3 858.3 L409.3 860.0 L428.8 856.7 L435.3 869.7 L445.0 876.2 L435.3 885.9M396.3 885.9 L402.8 905.4 L399.5 924.9M0.0 709.6 L15.5 716.5 L20.6 694.1 L34.3 689.0 L51.5 690.7 L56.7 695.9M15.5 716.5 L17.2 731.9 L27.5 738.8 L42.9 745.6 L58.4 755.9 L73.8 766.2 L84.1 764.5M132.2 730.2 L123.6 762.8 L113.3 769.7M151.1 759.4 L137.3 776.5 L144.2 793.7M187.1 755.9 L175.1 769.7 L164.8 800.6M202.6 764.5 L190.6 769.7 L187.1 797.2 L206.0 804.0M226.6 783.4 L216.3 800.6 L219.7 817.8M255.8 797.2 L260.9 814.3 L254.1 833.9M279.8 798.9 L279.8 833.9M298.7 800.6 L295.3 833.9M0.0 738.8 L10.3 762.8 L6.9 786.8 L15.5 814.3 L13.7 833.9M346.8 797.2 L353.6 814.3 L363.9 804.0 L374.2 821.2 L384.5 800.6 L394.8 817.8 L405.2 804.0 L412.0 824.6M343.3 817.8 L363.9 824.6 L384.5 822.9 L405.2 828.1 L424.0 824.6M1245.8 1087.3 L1255.6 1093.8 L1257.2 1106.8 L1252.3 1123.1 L1255.6 1139.3 L1245.8 1145.8 L1236.1 1142.6M1262.1 1162.0 L1245.8 1158.8 L1242.6 1171.8 L1252.3 1181.5 L1249.1 1200.0M1213.4 1168.5 L1226.4 1171.8 L1242.6 1162.0" fill="none" stroke="#949ba2" stroke-width="2" stroke-linejoin="round"/><path d="M0.0 271.2 L20.6 274.7 L41.2 273.0 L60.1 276.4 L68.7 288.4 L82.4 291.8 L85.8 302.1M233.5 0.0 L247.2 1.7 L260.9 5.2 L274.7 6.9 L288.4 13.7 L291.8 18.9M303.9 17.2 L312.4 15.5 L314.2 6.9 L326.2 3.4 L336.5 3.4 L343.3 0.0M877.1 0.0 L894.2 10.3 L911.4 13.0 L938.9 16.5 L954.3 18.9 L980.1 10.3 L1000.7 5.2 L1016.1 0.0M960.0 13.7 L980.6 6.9 L1001.2 1.7 L1016.7 0.0M109.9 721.6 L92.7 737.1 L85.8 766.2 L103.0 774.8 L133.9 793.7 L161.4 805.7 L192.3 812.6 L223.2 821.2 L250.6 833.9M310.7 798.9 L309.0 814.3 L329.6 828.1 L357.1 833.9M116.9 782.0 L129.9 795.0 L159.2 803.1 L175.4 814.5 L191.6 811.2 L211.1 817.7 L227.4 834.0 L246.9 830.7 L269.6 840.5 L292.3 845.3 L311.8 843.7M311.8 843.7 L316.7 821.0 L308.6 801.5 L324.8 791.7M311.8 843.7 L321.6 838.8 L341.1 850.2 L360.6 860.0 L357.3 873.0 L373.5 879.4 L406.0 882.7 L435.3 885.9 L428.8 905.4 L422.3 924.9 L435.3 928.2 L441.8 950.9 L454.8 941.2 L461.2 921.7 L480.7 924.9 L497.0 866.5 L510.0 840.5 L532.7 821.0 L560.0 814.5M311.8 843.7 L311.8 863.2 L324.8 882.7 L337.8 879.4 L311.8 895.7 L321.6 911.9 L328.1 934.7 L337.8 947.7 L341.1 976.9 L341.1 991.5M435.3 928.2 L438.5 976.9 L438.5 1002.9 L428.8 1002.9 L432.0 1022.4M461.2 921.7 L454.8 950.9 L454.8 976.9 L448.3 983.4M697.0 1007.8 L682.4 1009.4 L666.2 1015.9 L653.2 1022.4 L656.4 1032.1 L633.7 1032.1 L617.4 1045.1 L601.2 1045.1 L588.2 1051.6 L581.7 1074.3 L575.2 1087.3 L585.0 1106.8 L601.2 1126.3 L614.2 1152.3 L604.5 1171.8 L598.0 1200.0M711.6 967.1 L721.4 976.9 L731.1 983.4 L734.4 999.6 L747.4 1006.1 L753.9 1015.9 L766.9 1014.2 L779.9 1028.9 L789.6 1038.6 L783.1 1051.6 L766.9 1054.9 L760.4 1064.6 L776.6 1074.3 L796.1 1093.8 L812.3 1110.1 L828.6 1132.8 L841.6 1152.3 L844.8 1171.8 L838.3 1188.0M653.2 1022.4 L662.9 1041.9 L659.7 1054.9 L682.4 1054.9 L688.9 1074.3 L682.4 1093.8 L679.2 1110.1 L695.4 1103.6 L714.9 1093.8 L731.1 1100.3 L747.4 1090.6 L763.6 1100.3 L779.9 1119.8 L789.6 1139.3 L805.8 1155.5 L812.3 1178.3 L805.8 1200.0M520.0 827.5 L539.5 817.7 L555.7 811.2 L567.1 824.2M520.0 833.9 L540.6 821.2 L566.4 816.0 L571.5 807.5 L564.6 802.3" fill="none" stroke="#e8a6a8" stroke-width="2" stroke-linejoin="round"/><path d="M0 631 L12 634 L24 632 L28 642 L38 641" fill="none" stroke="#e59a9c" stroke-width="3.5" stroke-dasharray="3 4"/><path d="M0 936.6H1520" stroke="#b4b8bd" stroke-width="2" stroke-dasharray="22 14" fill="none"/><path d="M1029.6 979.5L1026 1035M1058.7 977L1122.8 1068" stroke="#d9e6fc" stroke-width="2" fill="none"/><path d="M545.9 279.8 L535.6 288.4 L540.8 298.7 L533.9 307.3 L518.5 315.9 L515.0 322.7 L494.4 334.8 L479.0 346.8 L473.8 357.1 L449.8 363.9 L446.4 384.5M568.1 276.4 L576.7 298.7 L588.7 321.0 L581.1 327.9 L601.7 350.2 L602.4 362.2 L611.0 357.1 L614.4 360.5 L623.0 351.9 L636.7 350.2 L652.2 348.5 L655.6 358.8 L652.2 370.8 L641.9 382.8 L635.0 386.3 L653.9 393.1 L659.1 403.4 L671.1 408.6 L674.5 420.6 L691.7 430.9 L702.0 415.5 L726.0 406.9 L760.3 401.7 L767.2 410.3 L765.5 422.3 L746.6 441.2M815.3 441.9 L820.4 417.2 L827.3 408.6 L841.0 405.2 L846.2 418.9 L839.3 441.9M908.0 441.9 L925.2 422.3 L942.3 408.6 L954.3 410.3 L966.4 398.3 L976.7 401.7 L993.8 377.7 L1007.6 370.8 L1021.3 369.1 L1045.3 357.1 L1048.8 343.3 L1050.5 331.3 L1048.8 317.6 L1059.1 303.9 L1069.4 302.1 L1072.8 322.7 L1080.0 324.5M1365.2 0.0 L1363.4 17.2 L1351.4 27.5 L1342.8 44.6 L1344.5 58.4 L1320.5 68.7 L1298.2 80.7 L1284.5 91.0 L1286.2 103.0 L1298.2 111.6 L1315.4 109.9 L1317.1 120.2 L1299.9 125.3 L1301.6 137.3 L1289.6 147.6 L1282.7 154.5 L1263.9 151.1 L1262.1 159.7 L1270.7 164.8 L1275.9 182.0 L1274.2 202.6 L1282.7 211.2 L1303.3 212.9 L1310.2 226.6 L1315.4 243.8 L1308.5 248.9 L1299.9 264.4 L1289.6 274.7 L1281.0 276.4 L1269.0 286.7 L1253.6 291.8 L1248.4 297.0 L1234.7 309.0 L1220.9 317.6 L1212.4 309.0 L1202.1 293.6 L1193.5 298.7 L1196.9 310.7 L1195.2 336.5 L1183.2 343.3 L1184.9 357.1 L1200.3 363.9 L1205.5 374.2M1301.6 137.3 L1325.7 139.1 L1329.1 152.8 L1336.0 168.2 L1348.0 171.7 L1370.3 170.0 L1380.6 178.5 L1406.4 183.7 L1416.7 190.6 L1414.9 202.6 L1430.4 207.7 L1435.5 223.2 L1452.7 211.2 L1457.9 226.6 L1468.2 240.3 L1475.0 247.2 L1495.6 233.5 L1505.9 230.0 L1509.4 240.3 L1520.0 245.5M1315.4 243.8 L1323.9 254.1 L1337.7 262.7 L1341.1 274.7 L1351.4 266.1 L1354.8 278.1 L1360.0 295.3 L1370.3 302.1 L1368.6 315.9 L1375.5 329.6 L1377.2 343.3 L1375.5 350.2M960.0 408.6 L970.3 391.4 L994.3 372.5 L1008.1 370.8 L1028.7 360.5 L1042.4 350.2 L1051.0 343.3 L1052.7 312.4 L1059.6 303.9 L1069.9 302.1 L1071.6 317.6 L1081.9 322.7 L1097.3 312.4 L1107.6 310.7 L1124.8 302.1 L1128.2 291.8 L1148.8 284.3 L1155.7 285.0 L1160.9 297.0 L1159.1 305.6 L1167.7 317.6 L1169.4 331.3 L1183.2 334.8 L1195.2 326.2 L1195.2 336.5M1085.3 381.1 L1090.5 363.9 L1104.2 360.5 L1114.5 367.4 L1124.8 374.2 L1131.7 388.0 L1128.2 401.7 L1138.5 412.0 L1131.7 425.8 L1117.9 422.3 L1111.1 408.6 L1097.3 405.2 L1087.0 394.8 L1085.3 381.1M55.6 582.6 L77.3 579.1 L82.4 563.7 L92.7 548.2 L116.7 551.7 L139.1 551.7 L151.1 537.9 L166.5 539.0 L168.2 546.5 L185.4 549.9 L206.0 544.8 L230.0 536.2 L242.1 537.9 L247.2 532.8 L257.5 520.8 L271.2 517.3 L291.8 512.9 L321.0 510.5 L333.0 517.3 L346.8 522.5 L358.8 524.2M358.8 524.2 L367.4 519.0 L377.7 522.5 L396.6 524.2 L396.6 508.7 L386.3 501.9 L391.4 493.3 L402.4 489.9 L398.3 477.8 L389.7 465.8 L380.4 462.4 L379.4 443.5 L369.1 442.8 L370.8 434.9 L398.3 426.3 L430.9 417.8 L432.6 410.9 L439.5 404.0 L441.2 392.0M432.6 417.8 L453.2 413.3 L456.7 421.2 L473.8 424.6 L491.0 428.1 L496.1 441.8 L511.6 440.1 L520.2 445.2 L532.2 443.5 L545.9 450.4 L554.5 448.7 L560.0 433.2M358.8 524.2 L350.2 529.3 L358.8 532.8 L357.1 546.5 L350.2 551.7 L355.4 562.0 L360.5 568.8 L358.8 589.4 L357.1 596.3 L365.7 608.3 L374.2 618.6 L388.0 625.5 L406.9 628.9 L427.5 637.5 L449.8 639.2 L465.2 646.1 L480.7 647.8 L497.9 642.6 L511.6 654.7 L521.9 663.2 L523.6 671.8 L542.5 673.5 L549.4 666.7 L560.0 673.5M520.0 446.9 L540.6 443.5 L554.3 446.9 L562.9 436.6 L562.9 414.3 L581.8 416.0 L600.7 419.5 L614.4 416.0 L626.4 428.1 L636.7 436.6 L641.9 433.2 L653.9 446.9 L671.1 448.7 L691.7 455.5 L705.4 471.0 L719.1 486.4 L724.3 505.3 L734.6 520.8 L731.2 536.2 L715.7 546.5 L712.3 556.8 L703.7 567.1 L708.8 579.1 L702.0 589.4 L683.1 591.1 L671.1 587.7 L681.4 601.4 L691.7 608.3 L705.4 606.6M643.6 392.0 L652.2 397.2 L659.1 393.7 L671.1 409.2 L683.1 414.3 L691.7 429.8 L702.0 422.9 L698.5 414.3 L726.0 407.5 L760.3 402.3 L767.2 409.2 L765.5 422.9 L746.6 441.8 L743.2 457.2 L756.9 465.8 L767.2 476.1 L780.9 474.4M780.9 474.4 L794.7 469.3 L811.8 464.1 L815.3 441.8 L822.1 426.3 L825.6 412.6 L841.0 407.5 L846.2 419.5 L839.3 433.2 L830.7 445.2 L858.2 459.0 L877.1 467.5 L892.5 465.8 L897.7 457.2 L908.0 436.6 L918.3 429.8 L932.0 424.6 L949.2 436.6M780.9 474.4 L794.7 501.9 L805.0 517.3 L799.8 529.3 L811.8 539.6 L823.9 544.8 L830.7 553.4 L842.7 556.8M858.2 459.0 L854.8 474.4 L859.9 495.0 L841.0 503.6 L830.7 507.0 L834.2 515.6 L849.6 524.2 L863.3 536.2 L859.9 549.9 L842.7 556.8M842.7 556.8 L830.7 565.4 L827.3 577.4 L834.2 584.3 L829.0 594.6 L834.2 608.3 L822.1 611.7 L810.1 616.9 L815.3 628.9 L805.0 635.8 L801.5 634.1M705.4 606.6 L719.1 591.1 L731.2 586.0 L739.7 601.4 L756.9 606.6 L767.2 611.7 L772.4 625.5 L791.2 628.9 L801.5 634.1M801.5 634.1 L815.3 634.1 L829.0 640.9 L846.2 644.4 L859.9 652.9 L875.4 656.4 L885.7 658.1 L901.1 663.2 L911.4 670.1 L928.6 682.1 L937.2 690.7M949.2 436.6 L947.5 453.8 L950.9 481.3 L945.8 495.0 L944.0 522.5 L945.8 546.5 L940.6 563.7 L937.2 572.3M937.2 572.3 L944.0 579.1 L947.5 594.6 L957.8 601.4 L961.2 615.2 L945.8 622.0 L930.3 622.0 L914.8 625.5 L925.2 632.3 L937.2 637.5 L932.0 646.1 L920.0 647.8 L918.3 663.2 L928.6 682.1M937.2 572.3 L962.9 570.5 L983.5 563.7 L1007.6 560.2 L1031.6 553.4 L1038.5 539.6 L1035.0 522.5 L1041.9 495.0 L1045.3 474.4 L1052.2 465.8 L1059.1 446.9 L1069.4 433.2 L1080.0 426.3M961.2 615.2 L966.4 628.9 L976.7 639.2 L990.4 646.1 L1007.6 649.5 L1028.2 647.8 L1045.3 646.1 L1062.5 647.8 L1080.0 646.1M520.0 666.7 L533.7 670.1 L545.8 663.2 L554.3 666.7 L571.5 659.8 L576.7 644.4 L573.2 628.9 L583.5 615.2 L574.9 601.4 L581.8 591.1 L599.0 592.9 L609.3 604.9 L612.7 618.6 L623.0 625.5 L636.7 628.9 L652.2 639.2 L667.6 640.9 L681.4 639.2 L679.7 625.5 L691.7 620.3 L702.0 611.7 L705.4 606.6M576.7 644.4 L593.8 652.9 L602.4 666.7 L609.3 683.8 L616.1 685.6 L611.0 694.1 L619.6 707.9 L621.3 735.3 L623.0 755.9 L617.9 766.2 L611.0 776.5 L612.7 793.7 L614.4 833.9M617.9 766.2 L629.9 773.1 L638.5 768.0 L648.8 780.0 L653.9 792.0 L657.3 804.0 L671.1 807.5 L683.1 821.2 L691.7 833.9M885.7 658.1 L890.8 670.1 L880.5 677.0 L877.1 694.1 L863.3 702.7 L859.9 716.5 L846.2 726.8 L837.6 725.0 L830.7 716.5 L811.8 716.5 L805.0 726.8 L811.8 735.3 L808.4 749.1 L815.3 761.1 L822.1 766.2M937.2 690.7 L930.3 702.7 L911.4 706.2 L890.8 713.0 L887.4 726.8 L896.0 735.3 L901.1 749.1 L894.2 755.9 L897.7 769.7 L908.0 773.1 L904.5 786.8M822.1 766.2 L832.4 769.7 L846.2 766.2 L863.3 761.1 L877.1 766.2 L883.9 776.5 L892.5 780.0 L897.7 769.7M822.1 766.2 L815.3 776.5 L808.4 773.1 L811.8 786.8 L794.7 790.3 L784.4 783.4 L770.6 776.5 L760.3 773.1 L756.9 790.3 L746.6 800.6 L739.7 814.3 L726.0 824.6 L712.3 833.9M908.0 738.8 L914.8 738.8 L938.9 730.2 L962.9 728.5 L983.5 735.3 L997.3 742.2 L1014.4 737.1 L1031.6 735.3 L1038.5 749.1 L1035.0 766.2 L1028.2 773.1M904.5 786.8 L911.4 804.0 L908.0 817.8 L914.8 833.9M1145.4 443.5 L1138.5 460.7 L1111.1 472.7 L1104.2 491.6 L1095.6 508.7 L1104.2 522.5 L1097.3 536.2 L1073.3 551.7 L1069.9 563.7M1069.9 563.7 L1083.6 570.5 L1111.1 579.1 L1117.9 565.4 L1131.7 568.8 L1145.4 582.6 L1152.3 594.6 L1172.9 587.7 L1184.9 570.5 L1196.9 560.2M1111.1 579.1 L1116.2 591.1 L1104.2 594.6 L1090.5 598.0 L1087.0 615.2 L1073.3 628.9 L1080.2 646.1 L1097.3 656.4 L1100.8 670.1M960.0 611.7 L970.3 632.3 L987.5 646.1 L1008.1 649.5 L1028.7 646.1 L1045.8 649.5 L1073.3 652.9 L1097.3 656.4M1100.8 670.1 L1107.6 683.8 L1111.1 697.6 L1117.9 711.3M1152.3 594.6 L1159.1 604.9 L1166.0 625.5 L1162.6 639.2 L1172.9 649.5 L1169.4 670.1 L1179.7 683.8 L1200.3 687.3 L1207.2 694.1M1207.2 694.1 L1196.9 707.9 L1193.5 718.2 L1179.7 725.0 L1172.9 735.3M1117.9 711.3 L1124.8 721.6 L1145.4 718.2 L1159.1 731.9 L1172.9 735.3M1172.9 735.3 L1179.7 749.1 L1172.9 762.8 L1166.0 776.5 L1167.7 786.8M1207.2 694.1 L1220.9 701.0 L1234.7 697.6 L1248.4 690.7 L1258.7 694.1M1117.9 711.3 L1107.6 721.6 L1090.5 728.5 L1073.3 735.3 L1056.1 738.8 L1039.0 735.3 L1033.8 749.1 L1042.4 762.8 L1039.0 780.0M960.0 560.2 L977.2 556.8 L990.9 553.4 L1011.5 556.8 L1028.7 563.7 L1049.3 563.7 L1069.9 563.7M1028.7 563.7 L1033.8 543.1 L1028.7 529.3 L1033.8 505.3 L1040.7 488.1 L1047.6 477.8 L1045.8 460.7 L1052.7 443.5M649.9 782.0 L656.4 791.7 L672.7 799.9 L679.2 814.5 L685.7 830.7 L695.4 843.7 L703.5 855.1 L711.6 855.1 L721.4 840.5 L731.1 824.2 L734.4 811.2 L744.1 804.7 L747.4 791.7 L753.9 782.0M758.7 811.2 L753.9 824.2 L762.0 834.0 L776.6 840.5 L779.9 856.7 L789.6 869.7 L779.9 889.2 L776.6 902.2 L789.6 908.7 L796.1 918.4 L812.3 921.7 L822.1 928.2 L812.3 937.9 L805.8 944.4 L801.0 941.2M744.1 804.7 L758.7 811.2 L776.6 814.5 L789.6 801.5 L802.6 806.4 L812.3 795.0 L818.8 782.0M789.6 869.7 L802.6 876.2 L818.8 885.9 L831.8 889.2 L844.8 876.2 L854.6 869.7 L864.3 879.4 L877.3 876.2 L890.3 879.4 L901.7 866.5 L919.5 860.0M909.8 782.0 L914.7 795.0 L906.5 804.7 L900.0 817.7 L913.0 824.2 L919.5 834.0 L914.7 847.0 L919.5 860.0M919.5 860.0 L932.5 856.7 L945.5 851.8 L958.5 847.0 L971.5 853.5 L973.1 866.5 L965.0 876.2 L961.8 885.9 L973.1 895.7 L981.2 911.9 L978.0 928.2 L971.5 937.9 L974.8 950.9 L968.3 963.9 L958.5 976.9 L956.9 994.8M973.1 866.5 L987.7 876.2 L1007.2 879.4 L1026.7 876.2 L1046.2 874.6 L1065.7 876.2M1039.7 782.0 L1036.5 801.5 L1043.0 821.0 L1049.5 847.0 L1056.0 863.2 L1065.7 876.2 L1080.0 882.7M1171.1 782.0 L1161.4 791.7 L1141.9 798.2 L1132.2 811.2 L1135.4 824.2 L1122.4 830.7 L1115.9 847.0 L1106.2 863.2 L1102.9 879.4 L1096.4 889.2 L1089.9 898.9M1089.9 898.9 L1070.4 895.7 L1063.9 882.7 L1054.2 877.8 L1044.5 879.4 L1034.7 873.0 L1021.7 876.2 L1012.0 879.4 L999.0 882.7 L979.5 879.4 L960.0 876.2M1089.9 898.9 L1096.4 911.9 L1112.7 924.9 L1135.4 939.5M1034.7 782.0 L1038.0 801.5 L1033.1 814.5 L1041.2 830.7 L1047.7 847.0 L1044.5 863.2 L1047.7 876.2" fill="none" stroke="#8d959c" stroke-width="2.1" stroke-linejoin="round"/><path d="M0.0 343.3 L19.9 342.7 L30.2 331.3 L51.5 322.7 L75.5 312.4 L86.5 303.9 L85.8 291.8 L90.0 290.1 L87.6 278.1 L92.0 273.0 L99.6 273.6 L92.0 269.5 L104.7 262.7 L103.0 247.2 L97.9 233.5 L92.7 212.9 L91.0 202.6 L82.4 199.1 L79.7 194.0 L91.0 188.2 L103.0 185.4 L113.3 182.0 L137.3 182.0 L154.5 181.3 L155.2 173.4 L147.0 170.0 L147.6 161.4 L149.4 152.8 L167.6 99.6 L194.0 109.9 L216.3 108.2 L222.5 116.1 L236.9 106.4 L242.1 107.1 L243.8 92.7 L240.3 67.0 L245.5 51.5 L267.8 42.9 L274.7 34.3 L274.7 22.3 L279.8 18.9 L291.8 20.6 L303.9 17.2 L305.6 24.0 L302.1 30.9 L310.7 37.8 L309.0 42.9 L319.3 48.1 L326.2 60.1 L339.9 67.0 L353.6 65.2 L359.8 73.8 L365.7 72.1 L369.1 80.7 L376.0 82.4 L381.1 94.4 L388.0 106.4 L394.8 118.5 L395.9 125.3 L389.7 137.3 L394.2 149.4 L386.3 161.4 L384.5 170.0 L389.7 183.7 L400.0 185.4 L429.2 190.6 L454.9 191.2 L470.4 194.0 L487.6 206.0 L508.2 219.7 L518.5 218.0 L515.0 228.3 L523.6 230.0 L535.6 254.1 L546.6 273.0 L545.9 279.8 L560.0 278.8 L546.4 279.8 L568.1 276.4 L588.7 278.8 L633.3 285.0 L657.3 282.2 L674.5 282.2 L698.5 288.4 L707.1 298.7 L726.0 303.9 L743.2 310.7 L756.9 314.8 L776.8 312.4 L777.5 321.0 L789.5 321.7 L791.2 324.5 L811.8 307.3 L859.9 291.2 L911.4 290.8 L944.0 277.4 L961.2 256.8 L987.6 243.1 L986.3 233.5 L971.5 217.0 L982.8 188.8 L991.1 187.8 L1012.7 198.5 L1035.0 201.5 L1047.0 194.0 L1060.8 175.1 L1080.0 175.1 L1082.6 175.1 L1109.4 161.4 L1110.0 151.1 L1120.3 137.3 L1140.9 134.9 L1142.0 128.1 L1149.5 128.8 L1166.7 119.5 L1177.0 123.6 L1184.9 120.2 L1196.2 126.4 L1213.0 123.6 L1214.1 113.3 L1207.9 99.6 L1196.9 90.0 L1189.4 80.7 L1175.6 67.6 L1153.0 67.0 L1140.9 82.4 L1124.1 72.1 L1099.7 81.4 L1089.4 71.4 L1088.8 61.1 L1098.0 56.7 L1096.3 44.6 L1107.0 20.6 L1117.3 0.0" fill="none" stroke="#d4483c" stroke-width="2.15" stroke-linejoin="round"/><path d="M1435.5 0.0 L1461.3 1.7 L1468.2 6.9 L1488.8 12.0 L1499.1 20.6 L1505.9 30.9 L1517.9 29.2 L1520.0 32.6" fill="none" stroke="#d4483c" stroke-width="2.15" stroke-linejoin="round"/><path d="M1520.0 44.6 L1512.8 42.9 L1517.9 51.5 L1520.0 65.2" fill="none" stroke="#d4483c" stroke-width="2.15" stroke-linejoin="round"/><path d="M1520.0 274.7 L1512.8 281.5 L1504.2 274.7 L1495.6 269.5 L1488.8 291.8 L1483.6 293.6 L1468.2 305.6 L1447.6 310.7 L1444.1 319.3 L1440.7 329.6 L1420.1 324.5 L1418.4 321.0 L1414.9 317.6 L1402.9 319.3 L1394.3 338.2 L1375.5 350.2 L1354.8 360.5 L1337.7 381.1" fill="none" stroke="#d4483c" stroke-width="2.15" stroke-linejoin="round"/><path d="M0.0 542.4 L17.2 544.8 L30.2 543.1 L26.8 551.7 L32.6 563.7 L34.3 574.0 L44.6 577.4 L55.6 584.3 L53.2 591.1 L44.6 592.9 L48.1 603.2 L46.4 608.3 L54.9 620.3 L61.1 632.3 L63.5 644.4 L53.2 652.3 L46.4 644.4 L41.2 643.3 L37.1 647.8 L40.5 659.8 L46.4 670.1 L44.6 678.7 L51.5 687.3 L56.7 695.9 L63.5 694.1 L72.1 699.3 L79.0 701.0 L85.8 709.6 L99.6 714.7 L111.6 719.9 L116.7 728.5 L118.5 723.3 L123.6 716.5 L140.8 716.5 L144.2 725.0 L157.9 731.9 L176.8 743.9 L185.4 755.3 L199.1 751.8 L202.6 764.5 L219.7 776.5 L226.6 771.4 L229.4 783.4 L240.3 783.4 L244.5 781.0 L247.2 788.6 L254.1 797.2 L256.8 789.6 L262.7 795.4 L269.5 790.3 L288.4 799.9 L300.4 798.9 L303.9 795.4 L312.4 797.8 L326.2 790.3 L332.4 797.2 L333.7 816.0 L339.9 819.5 L339.9 809.2 L346.8 797.2 L358.8 786.2 L377.7 790.3 L388.0 792.0 L396.6 797.2 L403.4 791.3 L410.3 800.6 L412.0 807.5 L424.0 812.6 L425.8 829.8 L446.4 827.4 L473.8 824.6 L484.1 807.5 L511.6 793.7 L532.2 784.4 L542.5 790.3 L560.0 793.7 L564.6 802.3 L576.7 790.3 L583.5 778.3 L593.8 790.3 L602.4 809.2 L612.0 807.5 L614.2 824.2 L609.3 856.7 L598.0 869.7 L585.0 885.9 L578.5 908.7 L581.7 923.3 L604.5 915.2 L617.4 915.2 L609.3 921.7 L617.4 934.7 L619.1 944.4 L635.3 950.9 L633.7 959.0 L627.2 976.9 L646.7 983.4 L653.2 998.0 L667.8 994.8 L680.8 988.3 L682.4 1002.9 L697.0 1007.8 L698.7 989.9 L693.8 976.9 L698.7 968.8 L711.6 967.1 L718.1 959.0 L727.9 963.9 L744.1 957.4 L750.6 962.3 L766.9 955.8 L771.7 959.0 L786.4 947.7 L801.0 941.2 L805.8 949.3 L818.8 954.2 L833.5 952.5 L841.6 959.0 L836.7 970.4 L843.2 983.4 L854.6 994.8 L870.8 993.1 L875.7 994.8" fill="none" stroke="#d4483c" stroke-width="2.15" stroke-linejoin="round"/><path d="M1295.2 900.6 L1286.4 936.9" fill="none" stroke="#d4483c" stroke-width="2.2"/><path d="M1268.6 991.5 L1248.1 1016.8" fill="none" stroke="#d4483c" stroke-width="2.2"/><path d="M1215.0 1074.3 L1200.4 1102.0" fill="none" stroke="#d4483c" stroke-width="2.2"/><path d="M1188.0 1162.7 L1188.0 1196.1" fill="none" stroke="#d4483c" stroke-width="2.2"/><path d="M912.5 1155.8 L920.9 1166.5 L927.9 1185.2" fill="none" stroke="#d4483c" stroke-width="2.2"/><path d="M1473.4 564.2L1466.4 589.8" stroke="#e8a6a8" stroke-width="2.2" fill="none"/><text x="223.0" y="373.0" font-size="20" font-weight="700" fill="#1f1f1f" stroke="#ffffff" stroke-width="3" paint-order="stroke" stroke-linejoin="round" text-anchor="middle" dominant-baseline="central" >新疆维吾尔自治区</text><text x="548.0" y="536.0" font-size="20" font-weight="700" fill="#1f1f1f" stroke="#ffffff" stroke-width="3" paint-order="stroke" stroke-linejoin="round" text-anchor="middle" dominant-baseline="central" >青海省</text><text x="322.5" y="694.5" font-size="20" font-weight="700" fill="#1f1f1f" stroke="#ffffff" stroke-width="3" paint-order="stroke" stroke-linejoin="round" text-anchor="middle" dominant-baseline="central" >西藏自治区</text><text x="1097.0" y="257.5" font-size="20" font-weight="700" fill="#1f1f1f" stroke="#ffffff" stroke-width="3" paint-order="stroke" stroke-linejoin="round" text-anchor="middle" dominant-baseline="central" >内蒙古自治区</text><text x="1449.0" y="108.0" font-size="20" font-weight="700" fill="#1f1f1f" stroke="#ffffff" stroke-width="3" paint-order="stroke" stroke-linejoin="round" text-anchor="middle" dominant-baseline="central" >黑龙江省</text><text x="1389.0" y="255.5" font-size="20" font-weight="700" fill="#1f1f1f" stroke="#ffffff" stroke-width="3" paint-order="stroke" stroke-linejoin="round" text-anchor="middle" dominant-baseline="central" >吉林省</text><text x="1310.0" y="319.5" font-size="20" font-weight="700" fill="#1f1f1f" stroke="#ffffff" stroke-width="3" paint-order="stroke" stroke-linejoin="round" text-anchor="middle" dominant-baseline="central" >辽宁省</text><text x="1075.0" y="456.0" font-size="20" font-weight="700" fill="#1f1f1f" stroke="#ffffff" stroke-width="3" paint-order="stroke" stroke-linejoin="round" text-anchor="middle" dominant-baseline="central" >河北省</text><text x="1154.0" y="527.0" font-size="20" font-weight="700" fill="#1f1f1f" stroke="#ffffff" stroke-width="3" paint-order="stroke" stroke-linejoin="round" text-anchor="middle" dominant-baseline="central" >山东省</text><text x="972.0" y="528.0" font-size="20" font-weight="700" fill="#1f1f1f" stroke="#ffffff" stroke-width="3" paint-order="stroke" stroke-linejoin="round" text-anchor="middle" dominant-baseline="central" >山西省</text><text x="807.0" y="492.0" font-size="20" font-weight="700" fill="#1f1f1f" stroke="#ffffff" stroke-width="3" paint-order="stroke" stroke-linejoin="round" text-anchor="middle" dominant-baseline="central" >宁夏回族自治区</text><text x="762.0" y="557.0" font-size="20" font-weight="700" fill="#1f1f1f" stroke="#ffffff" stroke-width="3" paint-order="stroke" stroke-linejoin="round" text-anchor="middle" dominant-baseline="central" >甘肃省</text><text x="884.5" y="609.5" font-size="20" font-weight="700" fill="#1f1f1f" stroke="#ffffff" stroke-width="3" paint-order="stroke" stroke-linejoin="round" text-anchor="middle" dominant-baseline="central" >陕西省</text><text x="1026.5" y="609.5" font-size="20" font-weight="700" fill="#1f1f1f" stroke="#ffffff" stroke-width="3" paint-order="stroke" stroke-linejoin="round" text-anchor="middle" dominant-baseline="central" >河南省</text><text x="1203.0" y="648.0" font-size="20" font-weight="700" fill="#1f1f1f" stroke="#ffffff" stroke-width="3" paint-order="stroke" stroke-linejoin="round" text-anchor="middle" dominant-baseline="central" >江苏省</text><text x="1142.0" y="692.0" font-size="20" font-weight="700" fill="#1f1f1f" stroke="#ffffff" stroke-width="3" paint-order="stroke" stroke-linejoin="round" text-anchor="middle" dominant-baseline="central" >安徽省</text><text x="994.5" y="701.0" font-size="20" font-weight="700" fill="#1f1f1f" stroke="#ffffff" stroke-width="3" paint-order="stroke" stroke-linejoin="round" text-anchor="middle" dominant-baseline="central" >湖北省</text><text x="721.0" y="713.0" font-size="20" font-weight="700" fill="#1f1f1f" stroke="#ffffff" stroke-width="3" paint-order="stroke" stroke-linejoin="round" text-anchor="middle" dominant-baseline="central" >四川省</text><text x="834.0" y="747.5" font-size="20" font-weight="700" fill="#1f1f1f" stroke="#ffffff" stroke-width="3" paint-order="stroke" stroke-linejoin="round" text-anchor="middle" dominant-baseline="central" >重庆市</text><text x="1225.5" y="774.5" font-size="20" font-weight="700" fill="#1f1f1f" stroke="#ffffff" stroke-width="3" paint-order="stroke" stroke-linejoin="round" text-anchor="middle" dominant-baseline="central" >浙江省</text><text x="981.0" y="812.8" font-size="20" font-weight="700" fill="#1f1f1f" stroke="#ffffff" stroke-width="3" paint-order="stroke" stroke-linejoin="round" text-anchor="middle" dominant-baseline="central" >湖南省</text><text x="1086.0" y="814.0" font-size="20" font-weight="700" fill="#1f1f1f" stroke="#ffffff" stroke-width="3" paint-order="stroke" stroke-linejoin="round" text-anchor="middle" dominant-baseline="central" >江西省</text><text x="878.0" y="857.0" font-size="20" font-weight="700" fill="#1f1f1f" stroke="#ffffff" stroke-width="3" paint-order="stroke" stroke-linejoin="round" text-anchor="middle" dominant-baseline="central" >贵州省</text><text x="1155.0" y="860.0" font-size="20" font-weight="700" fill="#1f1f1f" stroke="#ffffff" stroke-width="3" paint-order="stroke" stroke-linejoin="round" text-anchor="middle" dominant-baseline="central" >福建省</text><text x="693.0" y="912.0" font-size="20" font-weight="700" fill="#1f1f1f" stroke="#ffffff" stroke-width="3" paint-order="stroke" stroke-linejoin="round" text-anchor="middle" dominant-baseline="central" >云南省</text><text x="894.0" y="931.5" font-size="20" font-weight="700" fill="#1f1f1f" stroke="#ffffff" stroke-width="3" paint-order="stroke" stroke-linejoin="round" text-anchor="middle" dominant-baseline="central" >广西壮族自治区</text><text x="1055.0" y="926.0" font-size="20" font-weight="700" fill="#1f1f1f" stroke="#ffffff" stroke-width="3" paint-order="stroke" stroke-linejoin="round" text-anchor="middle" dominant-baseline="central" >广东省</text><text x="1228.0" y="930.5" font-size="20" font-weight="700" fill="#1f1f1f" stroke="#ffffff" stroke-width="3" paint-order="stroke" stroke-linejoin="round" text-anchor="middle" dominant-baseline="central" >台湾省</text><text x="1018.0" y="1044.0" font-size="20" font-weight="700" fill="#1f1f1f" stroke="#ffffff" stroke-width="3" paint-order="stroke" stroke-linejoin="round" text-anchor="middle" dominant-baseline="central" >澳门特别行政区</text><text x="922.0" y="1073.0" font-size="20" font-weight="700" fill="#1f1f1f" stroke="#ffffff" stroke-width="3" paint-order="stroke" stroke-linejoin="round" text-anchor="middle" dominant-baseline="central" >海南省</text><text x="1123.5" y="1084.0" font-size="20" font-weight="700" fill="#1f1f1f" stroke="#ffffff" stroke-width="3" paint-order="stroke" stroke-linejoin="round" text-anchor="middle" dominant-baseline="central" >香港特别行政区</text><text x="1271.0" y="692.5" font-size="20" font-weight="700" fill="#1f1f1f" stroke="#ffffff" stroke-width="3" paint-order="stroke" stroke-linejoin="round" text-anchor="middle" dominant-baseline="central" >上海市</text><text x="1215.6" y="430.0" font-size="20" font-weight="400" fill="#4a76c8" stroke="#e9effc" stroke-width="2.5" paint-order="stroke" stroke-linejoin="round" text-anchor="middle" dominant-baseline="central" >渤海</text><text x="1302.7" y="577.4" font-size="20" font-weight="400" fill="#4a76c8" stroke="#e9effc" stroke-width="2.5" paint-order="stroke" stroke-linejoin="round" text-anchor="middle" dominant-baseline="central" >黄海</text><text x="1335.8" y="750.6" font-size="20" font-weight="400" fill="#4a76c8" stroke="#e9effc" stroke-width="2.5" paint-order="stroke" stroke-linejoin="round" text-anchor="middle" dominant-baseline="central" >东海</text><text x="755.6" y="119.7" font-size="24" font-weight="400" fill="#6a6a6a" stroke="#ffffff" stroke-width="3" paint-order="stroke" stroke-linejoin="round" text-anchor="middle" dominant-baseline="central" >蒙古</text><text x="1426.5" y="373.5" font-size="24" font-weight="400" fill="#6a6a6a" stroke="#ffffff" stroke-width="3" paint-order="stroke" stroke-linejoin="round" text-anchor="middle" dominant-baseline="central" >朝鲜</text><text x="1435.5" y="515.0" font-size="24" font-weight="400" fill="#6a6a6a" stroke="#ffffff" stroke-width="3" paint-order="stroke" stroke-linejoin="round" text-anchor="middle" dominant-baseline="central" >韩国</text><text x="361.0" y="916.5" font-size="24" font-weight="400" fill="#6a6a6a" stroke="#ffffff" stroke-width="3" paint-order="stroke" stroke-linejoin="round" text-anchor="middle" dominant-baseline="central" >孟加拉国</text><text x="22.0" y="981.4" font-size="24" font-weight="400" fill="#6a6a6a" stroke="#ffffff" stroke-width="3" paint-order="stroke" stroke-linejoin="round" text-anchor="middle" dominant-baseline="central" >印度</text><text x="548.5" y="987.0" font-size="24" font-weight="400" fill="#6a6a6a" stroke="#ffffff" stroke-width="3" paint-order="stroke" stroke-linejoin="round" text-anchor="middle" dominant-baseline="central" >缅甸</text><text x="782.4" y="1101.0" font-size="24" font-weight="400" fill="#6a6a6a" stroke="#ffffff" stroke-width="3" paint-order="stroke" stroke-linejoin="round" text-anchor="middle" dominant-baseline="central" >老挝</text><text x="682.0" y="1159.5" font-size="24" font-weight="400" fill="#6a6a6a" stroke="#ffffff" stroke-width="3" paint-order="stroke" stroke-linejoin="round" text-anchor="middle" dominant-baseline="central" >泰国</text><text x="1174.5" y="390.3" font-size="26" font-weight="400" fill="#222" stroke="#ffffff" stroke-width="3" paint-order="stroke" stroke-linejoin="round" text-anchor="middle" dominant-baseline="central" >北京市</text><text x="1135.0" y="422.0" font-size="20" font-weight="400" fill="#2f4d68" stroke="#ffffff" stroke-width="3" paint-order="stroke" stroke-linejoin="round" text-anchor="middle" dominant-baseline="central" >天津市</text><circle cx="1026.8" cy="376.3" r="50" fill="url(#halo)"/><circle cx="1113.0" cy="383.3" r="50" fill="url(#halo)"/><circle cx="1121.6" cy="396.1" r="50" fill="url(#halo)"/><circle cx="1136.1" cy="413.6" r="50" fill="url(#halo)"/><circle cx="1238.9" cy="353.0" r="50" fill="url(#halo)"/><circle cx="1313.9" cy="314.6" r="50" fill="url(#halo)"/><circle cx="1311.8" cy="311.0" r="50" fill="url(#halo)"/><circle cx="924.2" cy="442.8" r="50" fill="url(#halo)"/><circle cx="1003.9" cy="456.8" r="50" fill="url(#halo)"/><circle cx="1033.1" cy="456.8" r="50" fill="url(#halo)"/><circle cx="1061.0" cy="452.1" r="50" fill="url(#halo)"/><circle cx="1260.8" cy="418.3" r="50" fill="url(#halo)"/><circle cx="1255.7" cy="470.7" r="50" fill="url(#halo)"/><circle cx="1274.8" cy="470.3" r="50" fill="url(#halo)"/><circle cx="1132.6" cy="501.0" r="50" fill="url(#halo)"/><circle cx="1132.6" cy="515.3" r="50" fill="url(#halo)"/><circle cx="960.1" cy="557.3" r="50" fill="url(#halo)"/><circle cx="1020.2" cy="515.3" r="50" fill="url(#halo)"/><circle cx="1043.1" cy="546.8" r="50" fill="url(#halo)"/><circle cx="1054.0" cy="564.7" r="50" fill="url(#halo)"/><circle cx="1086.7" cy="549.8" r="50" fill="url(#halo)"/><circle cx="1225.8" cy="521.1" r="50" fill="url(#halo)"/><circle cx="1004.6" cy="626.0" r="50" fill="url(#halo)"/><circle cx="1165.9" cy="593.4" r="50" fill="url(#halo)"/><circle cx="1220.0" cy="613.9" r="50" fill="url(#halo)"/><circle cx="1115.8" cy="668.5" r="50" fill="url(#halo)"/><circle cx="1135.6" cy="665.7" r="50" fill="url(#halo)"/><circle cx="1180.6" cy="658.0" r="50" fill="url(#halo)"/><circle cx="1214.2" cy="665.7" r="50" fill="url(#halo)"/><circle cx="1233.5" cy="683.8" r="50" fill="url(#halo)"/><circle cx="1257.3" cy="685.0" r="50" fill="url(#halo)"/><circle cx="1220.7" cy="717.6" r="50" fill="url(#halo)"/><circle cx="1231.2" cy="723.9" r="50" fill="url(#halo)"/><circle cx="1261.5" cy="729.8" r="50" fill="url(#halo)"/><circle cx="1054.7" cy="707.6" r="50" fill="url(#halo)"/><circle cx="1069.9" cy="713.0" r="50" fill="url(#halo)"/><circle cx="1099.5" cy="737.5" r="50" fill="url(#halo)"/><circle cx="1097.2" cy="769.4" r="50" fill="url(#halo)"/><circle cx="945.2" cy="754.2" r="50" fill="url(#halo)"/><circle cx="1157.1" cy="775.9" r="50" fill="url(#halo)"/><circle cx="1070.8" cy="796.4" r="50" fill="url(#halo)"/><circle cx="1112.3" cy="793.4" r="50" fill="url(#halo)"/><circle cx="973.1" cy="814.8" r="50" fill="url(#halo)"/><circle cx="1195.1" cy="852.4" r="50" fill="url(#halo)"/><circle cx="936.8" cy="879.2" r="50" fill="url(#halo)"/><circle cx="909.7" cy="924.2" r="50" fill="url(#halo)"/><circle cx="1001.6" cy="946.8" r="50" fill="url(#halo)"/><circle cx="1020.2" cy="945.7" r="50" fill="url(#halo)"/><circle cx="1037.7" cy="946.8" r="50" fill="url(#halo)"/><circle cx="1047.0" cy="962.0" r="50" fill="url(#halo)"/><circle cx="1050.5" cy="970.1" r="50" fill="url(#halo)"/><circle cx="1119.3" cy="927.7" r="50" fill="url(#halo)"/><circle cx="1120.9" cy="937.0" r="50" fill="url(#halo)"/><circle cx="942.1" cy="1000.4" r="50" fill="url(#halo)"/><circle cx="938.2" cy="1037.7" r="50" fill="url(#halo)"/><circle cx="712.0" cy="663.3" r="50" fill="url(#halo)"/><circle cx="782.6" cy="677.3" r="50" fill="url(#halo)"/><circle cx="772.8" cy="689.7" r="50" fill="url(#halo)"/><circle cx="755.1" cy="741.0" r="50" fill="url(#halo)"/><circle cx="853.7" cy="580.1" r="50" fill="url(#halo)"/><circle cx="902.0" cy="580.1" r="50" fill="url(#halo)"/><circle cx="916.6" cy="574.1" r="50" fill="url(#halo)"/><circle cx="729.0" cy="889.7" r="50" fill="url(#halo)"/><circle cx="835.1" cy="834.5" r="50" fill="url(#halo)"/><circle cx="837.4" cy="835.0" r="50" fill="url(#halo)"/><circle cx="862.3" cy="846.6" r="50" fill="url(#halo)"/><circle cx="885.6" cy="953.4" r="50" fill="url(#halo)"/><circle cx="120.3" cy="229.4" r="50" fill="url(#halo)"/><circle cx="1399.7" cy="155.3" r="50" fill="url(#halo)"/><circle cx="1136.0" cy="414.0" r="17" fill="url(#hcyan)"/><circle cx="1124.0" cy="400.0" r="24" fill="url(#hgrn)"/><circle cx="1112.3" cy="388.0" r="37" fill="url(#hred)"/><circle cx="1049.0" cy="968.0" r="30" fill="url(#hgrn)"/><circle cx="1026.0" cy="956.0" r="46" fill="url(#hyel)"/><circle cx="1225.8" cy="521.0" r="30" fill="url(#hcyan)"/><circle cx="1180.6" cy="658.0" r="28" fill="url(#hcyan)"/><circle cx="1225.0" cy="721.0" r="36" fill="url(#hcyan)"/><circle cx="1260.0" cy="729.0" r="26" fill="url(#hcyan)"/><circle cx="1257.0" cy="685.0" r="22" fill="url(#hcyan)"/><circle cx="1055.0" cy="708.0" r="30" fill="url(#hcyan)"/><circle cx="1069.9" cy="713.0" r="20" fill="url(#hcyan)"/><circle cx="1132.6" cy="510.0" r="22" fill="url(#hcyan)"/><use href="#pin" x="1399.7" y="155.3"/><use href="#pin" x="120.3" y="229.4"/><use href="#pin" x="1311.8" y="311.0"/><use href="#pin" x="1313.9" y="314.6"/><use href="#pin" x="1238.9" y="353.0"/><use href="#pin" x="1026.8" y="376.3"/><use href="#pin" x="1113.0" y="383.3"/><use href="#pin" x="1121.6" y="396.1"/><use href="#pin" x="1136.1" y="413.6"/><use href="#pin" x="1260.8" y="418.3"/><use href="#pin" x="924.2" y="442.8"/><use href="#pin" x="1061.0" y="452.1"/><use href="#pin" x="1003.9" y="456.8"/><use href="#pin" x="1033.1" y="456.8"/><use href="#pin" x="1274.8" y="470.3"/><use href="#pin" x="1255.7" y="470.7"/><use href="#pin" x="1132.6" y="501.0"/><use href="#pin" x="1132.6" y="515.3"/><use href="#pin" x="1020.2" y="515.3"/><use href="#pin" x="1225.8" y="521.1"/><use href="#pin" x="1043.1" y="546.8"/><use href="#pin" x="1086.7" y="549.8"/><use href="#pin" x="960.1" y="557.3"/><use href="#pin" x="1054.0" y="564.7"/><use href="#pin" x="916.6" y="574.1"/><use href="#pin" x="853.7" y="580.1"/><use href="#pin" x="902.0" y="580.1"/><use href="#pin" x="1165.9" y="593.4"/><use href="#pin" x="1220.0" y="613.9"/><use href="#pin" x="1004.6" y="626.0"/><use href="#pin" x="1180.6" y="658.0"/><use href="#pin" x="712.0" y="663.3"/><use href="#pin" x="1135.6" y="665.7"/><use href="#pin" x="1214.2" y="665.7"/><use href="#pin" x="1115.8" y="668.5"/><use href="#pin" x="782.6" y="677.3"/><use href="#pin" x="1233.5" y="683.8"/><use href="#pin" x="1257.3" y="685.0"/><use href="#pin" x="772.8" y="689.7"/><use href="#pin" x="1054.7" y="707.6"/><use href="#pin" x="1069.9" y="713.0"/><use href="#pin" x="1220.7" y="717.6"/><use href="#pin" x="1231.2" y="723.9"/><use href="#pin" x="1261.5" y="729.8"/><use href="#pin" x="1099.5" y="737.5"/><use href="#pin" x="755.1" y="741.0"/><use href="#pin" x="945.2" y="754.2"/><use href="#pin" x="1097.2" y="769.4"/><use href="#pin" x="1157.1" y="775.9"/><use href="#pin" x="1112.3" y="793.4"/><use href="#pin" x="1070.8" y="796.4"/><use href="#pin" x="973.1" y="814.8"/><use href="#pin" x="835.1" y="834.5"/><use href="#pin" x="837.4" y="835.0"/><use href="#pin" x="862.3" y="846.6"/><use href="#pin" x="1195.1" y="852.4"/><use href="#pin" x="936.8" y="879.2"/><use href="#pin" x="729.0" y="889.7"/><use href="#pin" x="909.7" y="924.2"/><use href="#pin" x="1119.3" y="927.7"/><use href="#pin" x="1120.9" y="937.0"/><use href="#pin" x="1020.2" y="945.7"/><use href="#pin" x="1001.6" y="946.8"/><use href="#pin" x="1037.7" y="946.8"/><use href="#pin" x="885.6" y="953.4"/><use href="#pin" x="1047.0" y="962.0"/><use href="#pin" x="1050.5" y="970.1"/><use href="#pin" x="942.1" y="1000.4"/><use href="#pin" x="938.2" y="1037.7"/><rect x="30.3" y="1103" width="168.4" height="46.6" rx="3" fill="#ffffff" fill-opacity=".55"/><text x="114" y="1127" font-size="20.5" fill="#222" text-anchor="middle" letter-spacing="1.2">500 公里</text><path d="M37 1136v12M36 1142H192" stroke="#2a2a2a" stroke-width="4" fill="none"/><path d="M192 1135.5v13" stroke="#2a2a2a" stroke-width="2.2" fill="none"/><g transform="translate(8,1160)"><rect x="0" y="0" width="34" height="34" rx="7" fill="#ffffff"/><path d="M0 7a7 7 0 0 1 7 -7h7v15H0z" fill="#c9efa9"/><path d="M0 17h14v17H7a7 7 0 0 1 -7 -7z" fill="#e6f2ee"/><path d="M17 24h17v3a7 7 0 0 1 -7 7H17z" fill="#a9dcf7"/><path d="M3 17L29 5 22 30 15 22z" fill="#3b86f6"/><path d="M15 22L29 5 17 28z" fill="#1f64dd"/></g><text x="47" y="1189" font-size="27" font-weight="700" fill="#111" textLength="108" lengthAdjust="spacingAndGlyphs">高德地图</text><text x="170" y="1188" font-size="22.2" fill="#222">© 2026 AutoNavi - GS(2024)1158号</text><g><rect x="1430" y="1050" width="60" height="120" rx="7" fill="#fff" style="filter:drop-shadow(0 1px 3px rgba(0,0,0,.35))"/><path d="M1430 1109.5h60" stroke="#eee" stroke-width="2"/><path d="M1450 1084h20M1460 1074v20" stroke="#111" stroke-width="3.4"/><path d="M1453 1143h14" stroke="#111" stroke-width="4"/></g></svg>
<div class="a" style="left:0;top:0;width:3840px;height:2px;background:#e9e9e8"></div>
</body></html>
